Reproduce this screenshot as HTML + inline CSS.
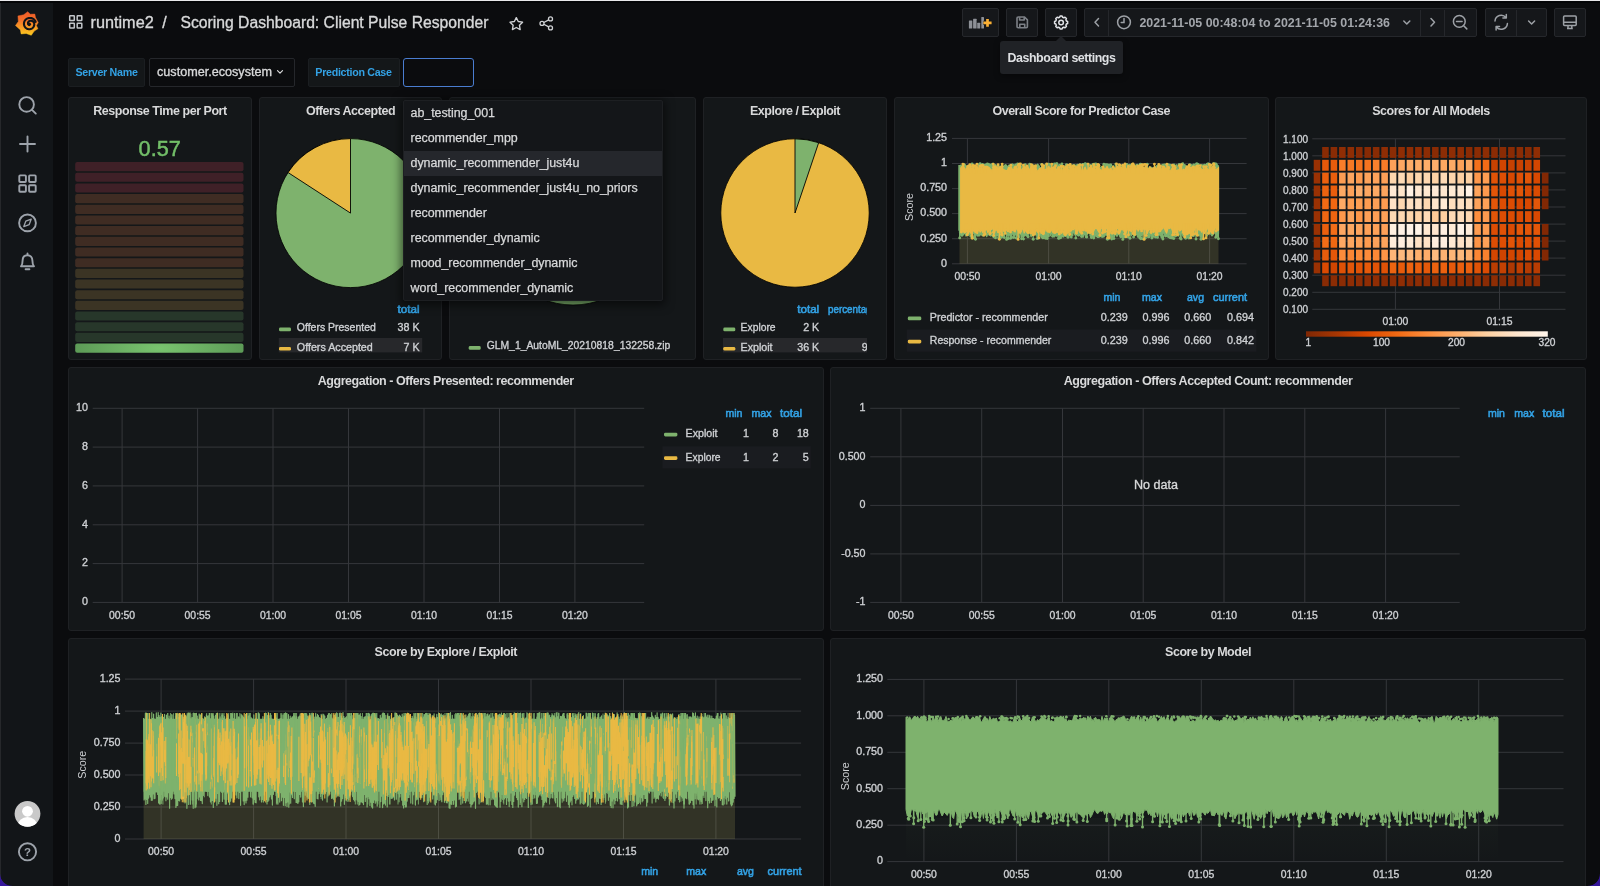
<!DOCTYPE html>
<html><head><meta charset="utf-8"><title>Scoring Dashboard: Client Pulse Responder - Grafana</title>
<style>
html,body{margin:0;padding:0;background:#0b0c0e;}
body{width:1600px;height:886px;overflow:hidden;position:relative;font-family:"Liberation Sans",Arial,sans-serif;color:#d8d9da;}
#app{will-change:transform;position:absolute;left:0;top:0;width:1600px;height:886px;overflow:hidden;background:#0b0c0e;}
.abs{position:absolute;}
.panel{position:absolute;box-sizing:border-box;background:#141719;border:1px solid #1f2124;border-radius:3px;}
.ptitle{position:absolute;left:0;right:0;top:4.5px;height:16px;line-height:16px;text-align:center;font-size:12.5px;font-weight:bold;letter-spacing:-0.46px;color:#d8d9da;white-space:nowrap;}
.side{position:absolute;left:0;top:0;width:53px;height:886px;background:#121518;border-left:1px solid #26282b;box-sizing:border-box;}
.btn{position:absolute;top:8.1px;height:28.7px;box-sizing:border-box;background:#15171a;border:1px solid #25272b;border-radius:2px;}
.lbl{position:absolute;top:58px;height:28.5px;line-height:27px;box-sizing:border-box;background:#141719;border:1px solid #1b1e21;border-radius:2px;color:#33a2e5;font-size:10.7px;font-weight:bold;letter-spacing:-0.3px;text-align:center;white-space:nowrap;}
.opt{position:absolute;left:0;width:258px;height:24.9px;line-height:25.9px;padding-left:6.4px;-webkit-text-stroke:0.25px #d8d9da;box-sizing:border-box;font-size:12.45px;color:#d8d9da;white-space:nowrap;letter-spacing:-0.05px;}
svg text{font-family:"Liberation Sans",Arial,sans-serif;}
svg{position:absolute;left:0;top:0;overflow:visible;}
</style></head><body><div id="app">

<div class="panel" style="left:68px;top:97px;width:184px;height:263px"><div class="ptitle">Response Time per Port</div></div>
<div class="panel" style="left:259px;top:97px;width:183px;height:263px"><div class="ptitle">Offers Accepted</div></div>
<div class="panel" style="left:449px;top:97px;width:247px;height:263px"><div class="ptitle"></div></div>
<div class="panel" style="left:703px;top:97px;width:184px;height:263px"><div class="ptitle">Explore / Exploit</div></div>
<div class="panel" style="left:894px;top:97px;width:374.5px;height:263px"><div class="ptitle">Overall Score for Predictor Case</div></div>
<div class="panel" style="left:1275px;top:97px;width:312px;height:263px"><div class="ptitle">Scores for All Models</div></div>
<div class="panel" style="left:68px;top:367px;width:755.5px;height:264px"><div class="ptitle">Aggregation - Offers Presented: recommender</div></div>
<div class="panel" style="left:830px;top:367px;width:756px;height:264px"><div class="ptitle">Aggregation - Offers Accepted Count: recommender</div></div>
<div class="panel" style="left:68px;top:638px;width:755.5px;height:262px"><div class="ptitle">Score by Explore / Exploit</div></div>
<div class="panel" style="left:830px;top:638px;width:756px;height:262px"><div class="ptitle">Score by Model</div></div>
<svg width="1600" height="886" viewBox="0 0 1600 886"><text x="159.7" y="156.3" text-anchor="middle" font-size="22.6" fill="#73bf69" textLength="42.2" lengthAdjust="spacingAndGlyphs" stroke="#73bf69" stroke-width="0.5">0.57</text>
<rect x="75.2" y="162.10" width="168.3" height="9.1" rx="2" fill="#3f2027"/>
<rect x="75.2" y="172.77" width="168.3" height="9.1" rx="2" fill="#3f2027"/>
<rect x="75.2" y="183.44" width="168.3" height="9.1" rx="2" fill="#3f2027"/>
<rect x="75.2" y="194.11" width="168.3" height="9.1" rx="2" fill="#3f2c23"/>
<rect x="75.2" y="204.78" width="168.3" height="9.1" rx="2" fill="#3f2c23"/>
<rect x="75.2" y="215.45" width="168.3" height="9.1" rx="2" fill="#3f2c23"/>
<rect x="75.2" y="226.12" width="168.3" height="9.1" rx="2" fill="#3f2c23"/>
<rect x="75.2" y="236.79" width="168.3" height="9.1" rx="2" fill="#3f2c23"/>
<rect x="75.2" y="247.46" width="168.3" height="9.1" rx="2" fill="#3f2c23"/>
<rect x="75.2" y="258.13" width="168.3" height="9.1" rx="2" fill="#3f2c23"/>
<rect x="75.2" y="268.80" width="168.3" height="9.1" rx="2" fill="#3b3424"/>
<rect x="75.2" y="279.47" width="168.3" height="9.1" rx="2" fill="#3b3424"/>
<rect x="75.2" y="290.14" width="168.3" height="9.1" rx="2" fill="#3b3424"/>
<rect x="75.2" y="300.81" width="168.3" height="9.1" rx="2" fill="#3b3424"/>
<rect x="75.2" y="311.48" width="168.3" height="9.1" rx="2" fill="#27372a"/>
<rect x="75.2" y="322.15" width="168.3" height="9.1" rx="2" fill="#27372a"/>
<rect x="75.2" y="332.82" width="168.3" height="9.1" rx="2" fill="#27372a"/>
<defs><radialGradient id="gg" cx="50%" cy="50%" r="50%" gradientTransform="translate(0.5 0.5) scale(1 6) translate(-0.5 -0.5)"><stop offset="0" stop-color="#79c46f"/><stop offset="1" stop-color="#5d9b57"/></radialGradient></defs>
<rect x="75.2" y="343.49" width="168.3" height="9.3" rx="2" fill="url(#gg)"/>
<circle cx="350.5" cy="213.1" r="74.5" fill="#7eb26d" stroke="#000" stroke-width="0.8"/><path d="M350.5,213.1 L350.5,138.6 A74.5,74.5 0 0 0 288.02,172.52 Z" fill="#e9b943" stroke="#000" stroke-width="0.9" stroke-linejoin="round"/>
<circle cx="573" cy="222.4" r="82.6" fill="#7eb26d" stroke="#000" stroke-width="0.8"/><path d="M573,222.4 L573,139.8 A82.6,82.6 0 0 1 573.00,139.80 Z" fill="#7eb26d" stroke="#000" stroke-width="0.9" stroke-linejoin="round"/>
<circle cx="795" cy="213" r="74.2" fill="#e9b943" stroke="#000" stroke-width="0.8"/><path d="M795,213 L795,138.8 A74.2,74.2 0 0 1 818.67,142.68 Z" fill="#7eb26d" stroke="#000" stroke-width="0.9" stroke-linejoin="round"/>
<text x="419.6" y="313.0" text-anchor="end" font-size="10.7" fill="#33a2e5" textLength="22" lengthAdjust="spacingAndGlyphs" stroke="#33a2e5" stroke-width="0.55">total</text>
<rect x="279.0" y="327.6" width="12" height="3.7" rx="1.4" fill="#7eb26d"/>
<text x="296.8" y="331.3" font-size="10.7" fill="#cfd1d4" textLength="79" lengthAdjust="spacingAndGlyphs" stroke="#cfd1d4" stroke-width="0.34">Offers Presented</text>
<text x="419.6" y="331.3" text-anchor="end" font-size="10.7" fill="#cfd1d4" stroke="#cfd1d4" stroke-width="0.34">38 K</text>
<rect x="278.8" y="338" width="143.4" height="14.4" fill="#27282b"/>
<rect x="279.0" y="346.9" width="12" height="3.7" rx="1.4" fill="#e9b943"/>
<text x="296.8" y="350.5" font-size="10.7" fill="#cfd1d4" textLength="76" lengthAdjust="spacingAndGlyphs" stroke="#cfd1d4" stroke-width="0.34">Offers Accepted</text>
<text x="419.6" y="350.5" text-anchor="end" font-size="10.7" fill="#cfd1d4" stroke="#cfd1d4" stroke-width="0.34">7 K</text>
<rect x="468.7" y="346.1" width="12" height="3.7" rx="1.4" fill="#7eb26d"/>
<text x="486.7" y="348.8" font-size="10.7" fill="#cfd1d4" textLength="183.6" lengthAdjust="spacingAndGlyphs" stroke="#cfd1d4" stroke-width="0.34">GLM_1_AutoML_20210818_132258.zip</text>
<clipPath id="c4"><rect x="700" y="300" width="167" height="60"/></clipPath>
<text x="819.2" y="313.0" text-anchor="end" font-size="10.7" fill="#33a2e5" textLength="22" lengthAdjust="spacingAndGlyphs" stroke="#33a2e5" stroke-width="0.55">total</text>
<g clip-path="url(#c4)"><text x="828.0" y="313.0" font-size="10.7" fill="#33a2e5" textLength="49" lengthAdjust="spacingAndGlyphs" stroke="#33a2e5" stroke-width="0.55">percentage</text></g>
<rect x="723.3" y="327.6" width="12" height="3.7" rx="1.4" fill="#7eb26d"/>
<text x="740.6" y="331.3" font-size="10.7" fill="#cfd1d4" textLength="35" lengthAdjust="spacingAndGlyphs" stroke="#cfd1d4" stroke-width="0.34">Explore</text>
<text x="819.2" y="331.3" text-anchor="end" font-size="10.7" fill="#cfd1d4" stroke="#cfd1d4" stroke-width="0.34">2 K</text>
<rect x="723" y="338" width="144" height="14.4" fill="#27282b"/>
<rect x="723.3" y="346.9" width="12" height="3.7" rx="1.4" fill="#e9b943"/>
<text x="740.6" y="350.5" font-size="10.7" fill="#cfd1d4" textLength="32" lengthAdjust="spacingAndGlyphs" stroke="#cfd1d4" stroke-width="0.34">Exploit</text>
<text x="819.2" y="350.5" text-anchor="end" font-size="10.7" fill="#cfd1d4" stroke="#cfd1d4" stroke-width="0.34">36 K</text>
<g clip-path="url(#c4)"><text x="867.8" y="350.5" text-anchor="end" font-size="10.7" fill="#cfd1d4" stroke="#cfd1d4" stroke-width="0.34">9</text></g>
<rect x="952.0" y="263.3" width="294.6" height="1" fill="#35373b"/>
<rect x="952.0" y="238.2" width="294.6" height="1" fill="#35373b"/>
<rect x="952.0" y="213.1" width="294.6" height="1" fill="#35373b"/>
<rect x="952.0" y="188.1" width="294.6" height="1" fill="#35373b"/>
<rect x="952.0" y="163.0" width="294.6" height="1" fill="#35373b"/>
<rect x="952.0" y="137.9" width="294.6" height="1" fill="#35373b"/>
<rect x="966.9" y="138.4" width="1" height="125.4" fill="#35373b"/>
<rect x="1048.1" y="138.4" width="1" height="125.4" fill="#35373b"/>
<rect x="1128.3" y="138.4" width="1" height="125.4" fill="#35373b"/>
<rect x="1209.1" y="138.4" width="1" height="125.4" fill="#35373b"/>
<text x="947.0" y="266.6" text-anchor="end" font-size="10.7" fill="#cfd1d4" stroke="#cfd1d4" stroke-width="0.34">0</text>
<text x="947.0" y="241.5" text-anchor="end" font-size="10.7" fill="#cfd1d4" stroke="#cfd1d4" stroke-width="0.34">0.250</text>
<text x="947.0" y="216.4" text-anchor="end" font-size="10.7" fill="#cfd1d4" stroke="#cfd1d4" stroke-width="0.34">0.500</text>
<text x="947.0" y="191.4" text-anchor="end" font-size="10.7" fill="#cfd1d4" stroke="#cfd1d4" stroke-width="0.34">0.750</text>
<text x="947.0" y="166.3" text-anchor="end" font-size="10.7" fill="#cfd1d4" stroke="#cfd1d4" stroke-width="0.34">1</text>
<text x="947.0" y="141.2" text-anchor="end" font-size="10.7" fill="#cfd1d4" stroke="#cfd1d4" stroke-width="0.34">1.25</text>
<text x="967.4" y="280.2" text-anchor="middle" font-size="10.7" fill="#cfd1d4" textLength="26" lengthAdjust="spacingAndGlyphs" stroke="#cfd1d4" stroke-width="0.34">00:50</text>
<text x="1048.6" y="280.2" text-anchor="middle" font-size="10.7" fill="#cfd1d4" textLength="26" lengthAdjust="spacingAndGlyphs" stroke="#cfd1d4" stroke-width="0.34">01:00</text>
<text x="1128.8" y="280.2" text-anchor="middle" font-size="10.7" fill="#cfd1d4" textLength="26" lengthAdjust="spacingAndGlyphs" stroke="#cfd1d4" stroke-width="0.34">01:10</text>
<text x="1209.6" y="280.2" text-anchor="middle" font-size="10.7" fill="#cfd1d4" textLength="26" lengthAdjust="spacingAndGlyphs" stroke="#cfd1d4" stroke-width="0.34">01:20</text>
<text transform="translate(913.3,207) rotate(-90)" text-anchor="middle" font-size="10.7" fill="#cfd1d4">Score</text>
<rect x="959.5" y="227.7" width="259.0" height="36.1" fill="#beb964" fill-opacity="0.18"/>
<polygon points="959.5,168.2 960.8,165.0 962.1,166.5 963.4,165.2 964.7,164.1 966.0,166.1 967.3,166.2 968.6,168.2 969.9,167.3 971.2,166.2 972.5,165.4 973.8,164.9 975.1,166.8 976.4,168.2 977.7,167.2 979.0,164.4 980.3,167.5 981.6,166.5 982.9,164.3 984.2,168.4 985.5,165.8 986.8,164.2 988.1,167.5 989.4,166.0 990.7,164.4 992.0,167.9 993.3,166.1 994.6,165.1 995.9,165.5 997.2,166.4 998.5,167.6 999.8,166.3 1001.1,166.8 1002.4,166.3 1003.8,166.8 1005.1,164.7 1006.4,165.0 1007.7,167.1 1009.0,165.9 1010.3,167.2 1011.6,166.5 1012.9,166.9 1014.2,165.5 1015.5,166.8 1016.8,166.4 1018.1,165.2 1019.4,166.6 1020.7,164.4 1022.0,167.7 1023.3,165.2 1024.6,166.6 1025.9,166.6 1027.2,165.6 1028.5,166.1 1029.8,166.6 1031.1,168.5 1032.4,168.1 1033.7,165.3 1035.0,166.1 1036.3,165.4 1037.6,164.2 1038.9,165.4 1040.2,168.3 1041.5,167.1 1042.8,165.8 1044.1,167.4 1045.4,164.1 1046.7,164.2 1048.0,164.7 1049.3,166.4 1050.6,164.7 1051.9,167.9 1053.2,167.1 1054.5,166.4 1055.8,165.1 1057.1,166.3 1058.4,167.9 1059.7,166.9 1061.0,167.0 1062.3,167.1 1063.6,167.7 1064.9,166.6 1066.2,166.5 1067.5,165.0 1068.8,164.9 1070.1,166.1 1071.4,166.4 1072.7,165.0 1074.0,164.5 1075.3,165.4 1076.6,164.9 1077.9,164.3 1079.2,168.3 1080.5,164.5 1081.8,167.2 1083.1,166.3 1084.4,164.9 1085.7,165.3 1087.0,167.8 1088.3,165.5 1089.7,168.2 1091.0,166.9 1092.3,164.8 1093.6,166.6 1094.9,165.8 1096.2,165.2 1097.5,164.8 1098.8,165.1 1100.1,168.5 1101.4,166.6 1102.7,166.4 1104.0,168.2 1105.3,166.1 1106.6,165.8 1107.9,164.8 1109.2,164.2 1110.5,167.9 1111.8,167.5 1113.1,165.5 1114.4,167.9 1115.7,167.5 1117.0,165.9 1118.3,167.7 1119.6,165.0 1120.9,164.6 1122.2,168.3 1123.5,166.1 1124.8,164.9 1126.1,164.1 1127.4,167.3 1128.7,167.7 1130.0,164.5 1131.3,164.4 1132.6,167.6 1133.9,166.5 1135.2,165.2 1136.5,164.7 1137.8,167.7 1139.1,165.5 1140.4,164.8 1141.7,166.0 1143.0,167.8 1144.3,168.3 1145.6,167.2 1146.9,164.8 1148.2,168.3 1149.5,168.5 1150.8,166.9 1152.1,168.2 1153.4,167.8 1154.7,168.4 1156.0,166.1 1157.3,165.4 1158.6,166.6 1159.9,167.9 1161.2,167.0 1162.5,165.8 1163.8,164.2 1165.1,164.0 1166.4,167.4 1167.7,168.4 1169.0,164.7 1170.3,164.3 1171.6,166.4 1172.9,165.0 1174.2,164.6 1175.6,165.7 1176.9,164.6 1178.2,168.4 1179.5,167.3 1180.8,167.2 1182.1,168.0 1183.4,164.4 1184.7,168.4 1186.0,165.5 1187.3,168.2 1188.6,166.9 1189.9,166.6 1191.2,167.7 1192.5,166.1 1193.8,166.1 1195.1,167.1 1196.4,165.2 1197.7,167.8 1199.0,167.6 1200.3,166.9 1201.6,166.8 1202.9,167.6 1204.2,164.3 1205.5,164.8 1206.8,168.0 1208.1,166.8 1209.4,167.4 1210.7,166.5 1212.0,167.2 1213.3,166.2 1214.6,164.3 1215.9,166.8 1217.2,165.6 1218.5,165.8 1218.5,233.5 1217.2,237.2 1215.9,233.6 1214.6,232.5 1213.3,234.3 1212.0,236.0 1210.7,233.9 1209.4,233.7 1208.1,234.0 1206.8,236.7 1205.5,232.3 1204.2,232.4 1202.9,235.3 1201.6,234.4 1200.3,237.3 1199.0,232.3 1197.7,233.2 1196.4,234.1 1195.1,233.5 1193.8,236.5 1192.5,235.9 1191.2,236.2 1189.9,234.3 1188.6,237.0 1187.3,232.8 1186.0,235.1 1184.7,235.2 1183.4,237.0 1182.1,233.9 1180.8,233.2 1179.5,234.2 1178.2,236.2 1176.9,233.3 1175.6,236.7 1174.2,233.1 1172.9,234.4 1171.6,236.0 1170.3,234.8 1169.0,234.2 1167.7,236.1 1166.4,233.0 1165.1,235.3 1163.8,232.8 1162.5,233.1 1161.2,237.0 1159.9,234.1 1158.6,235.9 1157.3,233.5 1156.0,234.6 1154.7,235.1 1153.4,232.8 1152.1,237.2 1150.8,234.6 1149.5,235.8 1148.2,237.3 1146.9,233.5 1145.6,234.5 1144.3,232.8 1143.0,234.3 1141.7,235.7 1140.4,232.3 1139.1,236.9 1137.8,237.2 1136.5,233.6 1135.2,235.5 1133.9,235.6 1132.6,232.9 1131.3,235.8 1130.0,232.8 1128.7,234.1 1127.4,235.8 1126.1,237.2 1124.8,236.2 1123.5,232.4 1122.2,235.4 1120.9,236.7 1119.6,235.9 1118.3,232.7 1117.0,236.6 1115.7,233.4 1114.4,236.8 1113.1,232.4 1111.8,234.7 1110.5,237.3 1109.2,232.6 1107.9,235.6 1106.6,233.6 1105.3,234.7 1104.0,237.0 1102.7,237.0 1101.4,236.7 1100.1,236.7 1098.8,237.2 1097.5,237.3 1096.2,232.5 1094.9,237.0 1093.6,234.8 1092.3,236.9 1091.0,236.4 1089.7,233.5 1088.3,232.5 1087.0,235.0 1085.7,237.5 1084.4,232.2 1083.1,237.3 1081.8,235.4 1080.5,234.7 1079.2,232.8 1077.9,233.1 1076.6,234.3 1075.3,235.4 1074.0,233.1 1072.7,232.9 1071.4,232.9 1070.1,233.7 1068.8,237.0 1067.5,235.9 1066.2,234.9 1064.9,234.8 1063.6,233.1 1062.3,236.3 1061.0,234.0 1059.7,235.5 1058.4,233.4 1057.1,236.5 1055.8,235.0 1054.5,237.0 1053.2,236.4 1051.9,232.5 1050.6,235.8 1049.3,232.8 1048.0,234.7 1046.7,237.3 1045.4,233.3 1044.1,237.2 1042.8,233.1 1041.5,237.5 1040.2,233.9 1038.9,236.6 1037.6,235.7 1036.3,232.5 1035.0,234.9 1033.7,234.0 1032.4,233.6 1031.1,236.9 1029.8,233.1 1028.5,232.7 1027.2,236.7 1025.9,234.6 1024.6,236.0 1023.3,233.6 1022.0,237.4 1020.7,234.8 1019.4,233.3 1018.1,233.6 1016.8,236.9 1015.5,233.1 1014.2,236.3 1012.9,233.2 1011.6,234.9 1010.3,236.7 1009.0,233.6 1007.7,233.2 1006.4,233.8 1005.1,232.4 1003.8,236.2 1002.4,236.3 1001.1,236.7 999.8,234.6 998.5,235.4 997.2,235.6 995.9,235.1 994.6,236.1 993.3,237.5 992.0,235.0 990.7,236.0 989.4,235.1 988.1,232.6 986.8,236.6 985.5,234.1 984.2,234.1 982.9,236.0 981.6,235.0 980.3,232.4 979.0,235.7 977.7,233.7 976.4,233.0 975.1,235.6 973.8,232.3 972.5,234.2 971.2,234.9 969.9,233.7 968.6,235.3 967.3,233.7 966.0,236.1 964.7,232.6 963.4,234.6 962.1,236.2 960.8,235.2 959.5,232.8" fill="#7eb26d" stroke="#7eb26d" stroke-width="1.2" stroke-linejoin="round"/>
<path d="M1168.5 173.5V164.6M1085.0 173.5V165.2M1050.6 173.5V166.0M1056.9 173.5V163.7M1213.6 173.5V163.8M988.6 173.5V164.7M1189.8 173.5V164.6M1181.6 173.5V164.4M1017.6 173.5V163.9M1050.0 173.5V164.9M1107.0 173.5V164.6M1167.3 173.5V165.5M1205.7 173.5V165.4M1216.4 173.5V164.8M1032.3 173.5V165.5M1009.3 173.5V165.9M1085.8 173.5V165.1M1103.9 173.5V164.3M1129.6 173.5V165.3M987.4 173.5V164.0M1126.9 173.5V164.4M1198.1 173.5V164.5M1196.5 173.5V163.9M1203.9 173.5V165.8M1198.4 173.5V165.6M1208.3 173.5V163.9M972.1 173.5V163.9M1196.7 173.5V165.8M1029.7 173.5V164.2M1042.6 173.5V166.0M1078.3 173.5V165.7M1206.9 173.5V165.7M1116.2 173.5V165.3M1050.8 173.5V165.1M1056.4 173.5V163.9M1193.9 173.5V165.0M1172.5 173.5V165.7M995.1 173.5V165.4M1023.9 173.5V166.0M1055.8 173.5V165.9M1015.6 173.5V165.0M1105.4 173.5V164.8M1017.4 173.5V165.4M1108.4 173.5V165.1M1201.9 173.5V165.7M1179.3 173.5V164.5M985.2 173.5V165.1M1013.1 173.5V165.6M1066.4 173.5V164.8M1126.8 173.5V165.5M1059.6 173.5V165.3M1024.7 173.5V165.7M1048.8 173.5V164.2M1012.3 173.5V165.3M1182.7 173.5V163.8M1140.1 173.5V165.1M1066.0 173.5V165.6M1140.9 173.5V164.4M1094.1 173.5V164.3M1095.8 173.5V164.0M1054.6 173.5V165.7M1085.9 173.5V164.2M1214.7 173.5V164.0M1162.7 173.5V165.3M1173.9 173.5V164.9M991.7 173.5V164.6M1090.1 173.5V165.4M1054.5 173.5V164.0M982.5 173.5V164.4M1061.9 173.5V164.0M978.7 173.5V164.9M1020.1 173.5V164.8M1166.4 173.5V165.5M1137.2 173.5V165.3M1140.4 173.5V164.3M980.1 173.5V163.8M1002.0 173.5V165.6M965.1 173.5V165.9M984.8 173.5V165.8M985.7 173.5V165.0M1208.2 173.5V164.2M1191.0 173.5V165.5M1012.4 173.5V164.9M1025.2 173.5V164.8M1208.4 173.5V164.1M1107.1 173.5V165.6M1054.9 173.5V166.0M1080.3 173.5V164.8M1030.0 173.5V165.2M1110.6 173.5V165.3M1147.3 173.5V164.2M1093.0 173.5V164.4M1172.1 173.5V165.8M988.8 173.5V164.7M1115.8 173.5V164.1M1215.8 173.5V163.9M998.1 173.5V166.0M1087.7 173.5V164.1M1122.7 173.5V165.9M1046.9 173.5V164.4M1209.3 173.5V164.6M1085.2 173.5V163.8M1083.5 173.5V164.5M1193.3 173.5V165.8M963.6 173.5V164.4M1184.5 173.5V165.4M992.9 173.5V164.1M1057.7 173.5V165.9M1086.0 173.5V165.2M1082.9 173.5V164.4M969.7 173.5V165.6M1041.6 173.5V164.5M1051.9 173.5V164.4M1207.2 173.5V164.3M1197.0 173.5V164.0M1110.8 173.5V165.0M1201.2 173.5V165.7M1183.2 173.5V165.4M1056.8 173.5V165.1M989.8 173.5V165.9" fill="none" stroke="#7eb26d" stroke-width="1.3"/><g fill="#7eb26d"><circle cx="1168.5" cy="164.6" r="1.45"/><circle cx="1085.0" cy="165.2" r="1.45"/><circle cx="1050.6" cy="166.0" r="1.45"/><circle cx="1056.9" cy="163.7" r="1.45"/><circle cx="1213.6" cy="163.8" r="1.45"/><circle cx="988.6" cy="164.7" r="1.45"/><circle cx="1189.8" cy="164.6" r="1.45"/><circle cx="1181.6" cy="164.4" r="1.45"/><circle cx="1017.6" cy="163.9" r="1.45"/><circle cx="1050.0" cy="164.9" r="1.45"/><circle cx="1107.0" cy="164.6" r="1.45"/><circle cx="1167.3" cy="165.5" r="1.45"/><circle cx="1205.7" cy="165.4" r="1.45"/><circle cx="1216.4" cy="164.8" r="1.45"/><circle cx="1032.3" cy="165.5" r="1.45"/><circle cx="1009.3" cy="165.9" r="1.45"/><circle cx="1085.8" cy="165.1" r="1.45"/><circle cx="1103.9" cy="164.3" r="1.45"/><circle cx="1129.6" cy="165.3" r="1.45"/><circle cx="987.4" cy="164.0" r="1.45"/><circle cx="1126.9" cy="164.4" r="1.45"/><circle cx="1198.1" cy="164.5" r="1.45"/><circle cx="1196.5" cy="163.9" r="1.45"/><circle cx="1203.9" cy="165.8" r="1.45"/><circle cx="1198.4" cy="165.6" r="1.45"/><circle cx="1208.3" cy="163.9" r="1.45"/><circle cx="972.1" cy="163.9" r="1.45"/><circle cx="1196.7" cy="165.8" r="1.45"/><circle cx="1029.7" cy="164.2" r="1.45"/><circle cx="1042.6" cy="166.0" r="1.45"/><circle cx="1078.3" cy="165.7" r="1.45"/><circle cx="1206.9" cy="165.7" r="1.45"/><circle cx="1116.2" cy="165.3" r="1.45"/><circle cx="1050.8" cy="165.1" r="1.45"/><circle cx="1056.4" cy="163.9" r="1.45"/><circle cx="1193.9" cy="165.0" r="1.45"/><circle cx="1172.5" cy="165.7" r="1.45"/><circle cx="995.1" cy="165.4" r="1.45"/><circle cx="1023.9" cy="166.0" r="1.45"/><circle cx="1055.8" cy="165.9" r="1.45"/><circle cx="1015.6" cy="165.0" r="1.45"/><circle cx="1105.4" cy="164.8" r="1.45"/><circle cx="1017.4" cy="165.4" r="1.45"/><circle cx="1108.4" cy="165.1" r="1.45"/><circle cx="1201.9" cy="165.7" r="1.45"/><circle cx="1179.3" cy="164.5" r="1.45"/><circle cx="985.2" cy="165.1" r="1.45"/><circle cx="1013.1" cy="165.6" r="1.45"/><circle cx="1066.4" cy="164.8" r="1.45"/><circle cx="1126.8" cy="165.5" r="1.45"/><circle cx="1059.6" cy="165.3" r="1.45"/><circle cx="1024.7" cy="165.7" r="1.45"/><circle cx="1048.8" cy="164.2" r="1.45"/><circle cx="1012.3" cy="165.3" r="1.45"/><circle cx="1182.7" cy="163.8" r="1.45"/><circle cx="1140.1" cy="165.1" r="1.45"/><circle cx="1066.0" cy="165.6" r="1.45"/><circle cx="1140.9" cy="164.4" r="1.45"/><circle cx="1094.1" cy="164.3" r="1.45"/><circle cx="1095.8" cy="164.0" r="1.45"/><circle cx="1054.6" cy="165.7" r="1.45"/><circle cx="1085.9" cy="164.2" r="1.45"/><circle cx="1214.7" cy="164.0" r="1.45"/><circle cx="1162.7" cy="165.3" r="1.45"/><circle cx="1173.9" cy="164.9" r="1.45"/><circle cx="991.7" cy="164.6" r="1.45"/><circle cx="1090.1" cy="165.4" r="1.45"/><circle cx="1054.5" cy="164.0" r="1.45"/><circle cx="982.5" cy="164.4" r="1.45"/><circle cx="1061.9" cy="164.0" r="1.45"/><circle cx="978.7" cy="164.9" r="1.45"/><circle cx="1020.1" cy="164.8" r="1.45"/><circle cx="1166.4" cy="165.5" r="1.45"/><circle cx="1137.2" cy="165.3" r="1.45"/><circle cx="1140.4" cy="164.3" r="1.45"/><circle cx="980.1" cy="163.8" r="1.45"/><circle cx="1002.0" cy="165.6" r="1.45"/><circle cx="965.1" cy="165.9" r="1.45"/><circle cx="984.8" cy="165.8" r="1.45"/><circle cx="985.7" cy="165.0" r="1.45"/><circle cx="1208.2" cy="164.2" r="1.45"/><circle cx="1191.0" cy="165.5" r="1.45"/><circle cx="1012.4" cy="164.9" r="1.45"/><circle cx="1025.2" cy="164.8" r="1.45"/><circle cx="1208.4" cy="164.1" r="1.45"/><circle cx="1107.1" cy="165.6" r="1.45"/><circle cx="1054.9" cy="166.0" r="1.45"/><circle cx="1080.3" cy="164.8" r="1.45"/><circle cx="1030.0" cy="165.2" r="1.45"/><circle cx="1110.6" cy="165.3" r="1.45"/><circle cx="1147.3" cy="164.2" r="1.45"/><circle cx="1093.0" cy="164.4" r="1.45"/><circle cx="1172.1" cy="165.8" r="1.45"/><circle cx="988.8" cy="164.7" r="1.45"/><circle cx="1115.8" cy="164.1" r="1.45"/><circle cx="1215.8" cy="163.9" r="1.45"/><circle cx="998.1" cy="166.0" r="1.45"/><circle cx="1087.7" cy="164.1" r="1.45"/><circle cx="1122.7" cy="165.9" r="1.45"/><circle cx="1046.9" cy="164.4" r="1.45"/><circle cx="1209.3" cy="164.6" r="1.45"/><circle cx="1085.2" cy="163.8" r="1.45"/><circle cx="1083.5" cy="164.5" r="1.45"/><circle cx="1193.3" cy="165.8" r="1.45"/><circle cx="963.6" cy="164.4" r="1.45"/><circle cx="1184.5" cy="165.4" r="1.45"/><circle cx="992.9" cy="164.1" r="1.45"/><circle cx="1057.7" cy="165.9" r="1.45"/><circle cx="1086.0" cy="165.2" r="1.45"/><circle cx="1082.9" cy="164.4" r="1.45"/><circle cx="969.7" cy="165.6" r="1.45"/><circle cx="1041.6" cy="164.5" r="1.45"/><circle cx="1051.9" cy="164.4" r="1.45"/><circle cx="1207.2" cy="164.3" r="1.45"/><circle cx="1197.0" cy="164.0" r="1.45"/><circle cx="1110.8" cy="165.0" r="1.45"/><circle cx="1201.2" cy="165.7" r="1.45"/><circle cx="1183.2" cy="165.4" r="1.45"/><circle cx="1056.8" cy="165.1" r="1.45"/><circle cx="989.8" cy="165.9" r="1.45"/></g>
<path d="M1143.0 223.7V238.9M975.8 223.7V234.1M974.4 223.7V237.3M1201.0 223.7V239.2M1168.3 223.7V235.9M1025.2 223.7V234.1M1048.0 223.7V235.0M1173.4 223.7V233.8M1119.9 223.7V234.1M1028.1 223.7V236.8M1075.8 223.7V238.1M1181.1 223.7V239.0M959.7 223.7V237.9M1216.5 223.7V235.8M1106.1 223.7V234.2M1006.6 223.7V239.4M1166.7 223.7V234.7M979.2 223.7V235.1M1065.7 223.7V235.5M1107.9 223.7V238.7M1023.5 223.7V239.1M1188.8 223.7V235.2M1140.0 223.7V235.8M1001.4 223.7V237.3M999.0 223.7V237.4M975.5 223.7V239.2M1107.5 223.7V233.7M1008.0 223.7V234.6M1100.1 223.7V233.9M1171.7 223.7V234.7M1187.2 223.7V236.8M989.6 223.7V234.6M1045.5 223.7V238.3M1067.6 223.7V235.6M1058.8 223.7V238.1M1068.0 223.7V237.2M1078.6 223.7V234.4M1155.4 223.7V237.0M1038.6 223.7V234.3M1048.4 223.7V236.0M1060.6 223.7V237.7M998.7 223.7V237.9M1122.8 223.7V239.4M1063.2 223.7V236.2M1196.8 223.7V234.6M1172.2 223.7V238.1M1019.1 223.7V236.7M1022.3 223.7V233.8M1162.1 223.7V237.2M1104.5 223.7V234.1M962.1 223.7V234.7M1122.6 223.7V236.6M1061.8 223.7V235.8M1162.9 223.7V239.0M1152.9 223.7V236.5M1198.4 223.7V235.1M1140.6 223.7V238.1M1196.0 223.7V239.1M1033.2 223.7V239.3M1047.2 223.7V238.5M974.8 223.7V238.1M1184.0 223.7V234.8M999.4 223.7V236.8M1102.3 223.7V236.4M1091.4 223.7V237.6M1170.3 223.7V237.7M1060.0 223.7V236.3M996.5 223.7V235.2M1058.7 223.7V238.4M971.9 223.7V236.9M1037.6 223.7V235.7M1122.7 223.7V233.9M974.3 223.7V237.9M1215.8 223.7V237.2M1098.4 223.7V236.2M1037.2 223.7V238.6M1175.5 223.7V235.9M995.1 223.7V233.9M1042.9 223.7V237.9M1202.2 223.7V236.7M1021.6 223.7V238.7M1149.3 223.7V236.5M980.5 223.7V233.9M1097.4 223.7V236.3M1130.0 223.7V238.2M1013.8 223.7V237.6M1044.4 223.7V235.8M1102.1 223.7V234.5M1112.3 223.7V236.8M999.4 223.7V236.6M1065.9 223.7V234.8M1218.4 223.7V238.8M1043.0 223.7V234.0M1162.9 223.7V236.8M1011.7 223.7V237.5M1078.9 223.7V235.0M1093.7 223.7V238.0M1113.9 223.7V238.6M1145.4 223.7V237.9M1165.6 223.7V235.6M1140.8 223.7V238.8M1168.6 223.7V236.8M1189.0 223.7V238.1M1044.0 223.7V236.3M1173.8 223.7V238.6M1094.2 223.7V235.0M1026.7 223.7V234.1M1004.3 223.7V237.6M1157.5 223.7V237.4M1124.4 223.7V236.0M977.8 223.7V235.2M1111.7 223.7V239.1M971.0 223.7V235.6M1060.8 223.7V234.8M1107.4 223.7V234.9M1127.9 223.7V236.9M1000.4 223.7V234.7M971.1 223.7V236.3M1108.7 223.7V238.4M1171.6 223.7V237.8M1165.8 223.7V236.0M1052.7 223.7V236.3M1108.9 223.7V234.8M1145.6 223.7V235.3M1185.7 223.7V238.2M1086.8 223.7V237.1M1186.3 223.7V235.0M1041.8 223.7V236.8M1016.3 223.7V238.1M1035.7 223.7V234.1M1148.5 223.7V236.9M1188.8 223.7V237.7M1081.5 223.7V236.5M1139.7 223.7V237.7M995.5 223.7V237.9M1090.9 223.7V235.6M1072.1 223.7V234.9M1071.3 223.7V237.1M1008.2 223.7V238.5M1120.8 223.7V236.7M1133.6 223.7V237.1M1124.3 223.7V236.9M1151.9 223.7V238.1M1078.2 223.7V235.0M1180.3 223.7V238.3M1107.4 223.7V239.2M1187.9 223.7V235.4M1065.7 223.7V235.2M1140.8 223.7V238.1M1010.5 223.7V238.4" fill="none" stroke="#7eb26d" stroke-width="1.3"/><g fill="#7eb26d"><circle cx="1143.0" cy="238.9" r="1.45"/><circle cx="975.8" cy="234.1" r="1.45"/><circle cx="974.4" cy="237.3" r="1.45"/><circle cx="1201.0" cy="239.2" r="1.45"/><circle cx="1168.3" cy="235.9" r="1.45"/><circle cx="1025.2" cy="234.1" r="1.45"/><circle cx="1048.0" cy="235.0" r="1.45"/><circle cx="1173.4" cy="233.8" r="1.45"/><circle cx="1119.9" cy="234.1" r="1.45"/><circle cx="1028.1" cy="236.8" r="1.45"/><circle cx="1075.8" cy="238.1" r="1.45"/><circle cx="1181.1" cy="239.0" r="1.45"/><circle cx="959.7" cy="237.9" r="1.45"/><circle cx="1216.5" cy="235.8" r="1.45"/><circle cx="1106.1" cy="234.2" r="1.45"/><circle cx="1006.6" cy="239.4" r="1.45"/><circle cx="1166.7" cy="234.7" r="1.45"/><circle cx="979.2" cy="235.1" r="1.45"/><circle cx="1065.7" cy="235.5" r="1.45"/><circle cx="1107.9" cy="238.7" r="1.45"/><circle cx="1023.5" cy="239.1" r="1.45"/><circle cx="1188.8" cy="235.2" r="1.45"/><circle cx="1140.0" cy="235.8" r="1.45"/><circle cx="1001.4" cy="237.3" r="1.45"/><circle cx="999.0" cy="237.4" r="1.45"/><circle cx="975.5" cy="239.2" r="1.45"/><circle cx="1107.5" cy="233.7" r="1.45"/><circle cx="1008.0" cy="234.6" r="1.45"/><circle cx="1100.1" cy="233.9" r="1.45"/><circle cx="1171.7" cy="234.7" r="1.45"/><circle cx="1187.2" cy="236.8" r="1.45"/><circle cx="989.6" cy="234.6" r="1.45"/><circle cx="1045.5" cy="238.3" r="1.45"/><circle cx="1067.6" cy="235.6" r="1.45"/><circle cx="1058.8" cy="238.1" r="1.45"/><circle cx="1068.0" cy="237.2" r="1.45"/><circle cx="1078.6" cy="234.4" r="1.45"/><circle cx="1155.4" cy="237.0" r="1.45"/><circle cx="1038.6" cy="234.3" r="1.45"/><circle cx="1048.4" cy="236.0" r="1.45"/><circle cx="1060.6" cy="237.7" r="1.45"/><circle cx="998.7" cy="237.9" r="1.45"/><circle cx="1122.8" cy="239.4" r="1.45"/><circle cx="1063.2" cy="236.2" r="1.45"/><circle cx="1196.8" cy="234.6" r="1.45"/><circle cx="1172.2" cy="238.1" r="1.45"/><circle cx="1019.1" cy="236.7" r="1.45"/><circle cx="1022.3" cy="233.8" r="1.45"/><circle cx="1162.1" cy="237.2" r="1.45"/><circle cx="1104.5" cy="234.1" r="1.45"/><circle cx="962.1" cy="234.7" r="1.45"/><circle cx="1122.6" cy="236.6" r="1.45"/><circle cx="1061.8" cy="235.8" r="1.45"/><circle cx="1162.9" cy="239.0" r="1.45"/><circle cx="1152.9" cy="236.5" r="1.45"/><circle cx="1198.4" cy="235.1" r="1.45"/><circle cx="1140.6" cy="238.1" r="1.45"/><circle cx="1196.0" cy="239.1" r="1.45"/><circle cx="1033.2" cy="239.3" r="1.45"/><circle cx="1047.2" cy="238.5" r="1.45"/><circle cx="974.8" cy="238.1" r="1.45"/><circle cx="1184.0" cy="234.8" r="1.45"/><circle cx="999.4" cy="236.8" r="1.45"/><circle cx="1102.3" cy="236.4" r="1.45"/><circle cx="1091.4" cy="237.6" r="1.45"/><circle cx="1170.3" cy="237.7" r="1.45"/><circle cx="1060.0" cy="236.3" r="1.45"/><circle cx="996.5" cy="235.2" r="1.45"/><circle cx="1058.7" cy="238.4" r="1.45"/><circle cx="971.9" cy="236.9" r="1.45"/><circle cx="1037.6" cy="235.7" r="1.45"/><circle cx="1122.7" cy="233.9" r="1.45"/><circle cx="974.3" cy="237.9" r="1.45"/><circle cx="1215.8" cy="237.2" r="1.45"/><circle cx="1098.4" cy="236.2" r="1.45"/><circle cx="1037.2" cy="238.6" r="1.45"/><circle cx="1175.5" cy="235.9" r="1.45"/><circle cx="995.1" cy="233.9" r="1.45"/><circle cx="1042.9" cy="237.9" r="1.45"/><circle cx="1202.2" cy="236.7" r="1.45"/><circle cx="1021.6" cy="238.7" r="1.45"/><circle cx="1149.3" cy="236.5" r="1.45"/><circle cx="980.5" cy="233.9" r="1.45"/><circle cx="1097.4" cy="236.3" r="1.45"/><circle cx="1130.0" cy="238.2" r="1.45"/><circle cx="1013.8" cy="237.6" r="1.45"/><circle cx="1044.4" cy="235.8" r="1.45"/><circle cx="1102.1" cy="234.5" r="1.45"/><circle cx="1112.3" cy="236.8" r="1.45"/><circle cx="999.4" cy="236.6" r="1.45"/><circle cx="1065.9" cy="234.8" r="1.45"/><circle cx="1218.4" cy="238.8" r="1.45"/><circle cx="1043.0" cy="234.0" r="1.45"/><circle cx="1162.9" cy="236.8" r="1.45"/><circle cx="1011.7" cy="237.5" r="1.45"/><circle cx="1078.9" cy="235.0" r="1.45"/><circle cx="1093.7" cy="238.0" r="1.45"/><circle cx="1113.9" cy="238.6" r="1.45"/><circle cx="1145.4" cy="237.9" r="1.45"/><circle cx="1165.6" cy="235.6" r="1.45"/><circle cx="1140.8" cy="238.8" r="1.45"/><circle cx="1168.6" cy="236.8" r="1.45"/><circle cx="1189.0" cy="238.1" r="1.45"/><circle cx="1044.0" cy="236.3" r="1.45"/><circle cx="1173.8" cy="238.6" r="1.45"/><circle cx="1094.2" cy="235.0" r="1.45"/><circle cx="1026.7" cy="234.1" r="1.45"/><circle cx="1004.3" cy="237.6" r="1.45"/><circle cx="1157.5" cy="237.4" r="1.45"/><circle cx="1124.4" cy="236.0" r="1.45"/><circle cx="977.8" cy="235.2" r="1.45"/><circle cx="1111.7" cy="239.1" r="1.45"/><circle cx="971.0" cy="235.6" r="1.45"/><circle cx="1060.8" cy="234.8" r="1.45"/><circle cx="1107.4" cy="234.9" r="1.45"/><circle cx="1127.9" cy="236.9" r="1.45"/><circle cx="1000.4" cy="234.7" r="1.45"/><circle cx="971.1" cy="236.3" r="1.45"/><circle cx="1108.7" cy="238.4" r="1.45"/><circle cx="1171.6" cy="237.8" r="1.45"/><circle cx="1165.8" cy="236.0" r="1.45"/><circle cx="1052.7" cy="236.3" r="1.45"/><circle cx="1108.9" cy="234.8" r="1.45"/><circle cx="1145.6" cy="235.3" r="1.45"/><circle cx="1185.7" cy="238.2" r="1.45"/><circle cx="1086.8" cy="237.1" r="1.45"/><circle cx="1186.3" cy="235.0" r="1.45"/><circle cx="1041.8" cy="236.8" r="1.45"/><circle cx="1016.3" cy="238.1" r="1.45"/><circle cx="1035.7" cy="234.1" r="1.45"/><circle cx="1148.5" cy="236.9" r="1.45"/><circle cx="1188.8" cy="237.7" r="1.45"/><circle cx="1081.5" cy="236.5" r="1.45"/><circle cx="1139.7" cy="237.7" r="1.45"/><circle cx="995.5" cy="237.9" r="1.45"/><circle cx="1090.9" cy="235.6" r="1.45"/><circle cx="1072.1" cy="234.9" r="1.45"/><circle cx="1071.3" cy="237.1" r="1.45"/><circle cx="1008.2" cy="238.5" r="1.45"/><circle cx="1120.8" cy="236.7" r="1.45"/><circle cx="1133.6" cy="237.1" r="1.45"/><circle cx="1124.3" cy="236.9" r="1.45"/><circle cx="1151.9" cy="238.1" r="1.45"/><circle cx="1078.2" cy="235.0" r="1.45"/><circle cx="1180.3" cy="238.3" r="1.45"/><circle cx="1107.4" cy="239.2" r="1.45"/><circle cx="1187.9" cy="235.4" r="1.45"/><circle cx="1065.7" cy="235.2" r="1.45"/><circle cx="1140.8" cy="238.1" r="1.45"/><circle cx="1010.5" cy="238.4" r="1.45"/></g>
<rect x="958.3" y="165.0" width="3" height="65.7" fill="#7eb26d"/>
<polygon points="960.7,168.1 962.0,166.4 963.3,169.7 964.6,168.3 965.9,169.7 967.2,167.3 968.5,168.7 969.8,169.1 971.1,167.7 972.4,168.3 973.7,170.0 975.0,168.9 976.2,166.2 977.5,167.0 978.8,168.4 980.1,167.7 981.4,170.3 982.7,168.9 984.0,166.5 985.3,170.1 986.6,166.1 987.9,166.7 989.2,167.6 990.5,169.1 991.8,170.5 993.1,169.5 994.4,167.3 995.7,168.9 997.0,167.0 998.3,169.9 999.6,166.9 1000.9,166.7 1002.2,167.4 1003.5,170.0 1004.7,169.9 1006.0,170.7 1007.3,170.7 1008.6,167.3 1009.9,168.5 1011.2,167.2 1012.5,169.6 1013.8,169.3 1015.1,166.5 1016.4,166.0 1017.7,170.5 1019.0,167.1 1020.3,168.2 1021.6,171.0 1022.9,167.9 1024.2,169.6 1025.5,169.2 1026.8,166.1 1028.1,167.3 1029.4,170.7 1030.7,167.6 1032.0,170.9 1033.2,166.6 1034.5,168.0 1035.8,167.8 1037.1,170.9 1038.4,170.6 1039.7,168.4 1041.0,169.1 1042.3,166.9 1043.6,169.6 1044.9,169.0 1046.2,170.4 1047.5,168.5 1048.8,166.2 1050.1,169.7 1051.4,167.0 1052.7,170.2 1054.0,166.6 1055.3,168.4 1056.6,170.4 1057.9,167.1 1059.2,166.6 1060.5,170.3 1061.7,170.4 1063.0,169.7 1064.3,168.4 1065.6,166.2 1066.9,166.7 1068.2,169.4 1069.5,170.8 1070.8,168.0 1072.1,168.1 1073.4,169.8 1074.7,168.0 1076.0,166.1 1077.3,170.3 1078.6,169.4 1079.9,166.8 1081.2,170.2 1082.5,170.4 1083.8,170.1 1085.1,167.1 1086.4,170.4 1087.7,170.5 1089.0,167.9 1090.2,167.2 1091.5,167.2 1092.8,168.8 1094.1,166.4 1095.4,170.2 1096.7,168.8 1098.0,169.2 1099.3,168.3 1100.6,170.0 1101.9,170.3 1103.2,166.1 1104.5,169.5 1105.8,168.5 1107.1,166.4 1108.4,169.5 1109.7,169.2 1111.0,168.2 1112.3,170.7 1113.6,170.9 1114.9,167.8 1116.2,169.1 1117.5,170.6 1118.7,169.6 1120.0,167.5 1121.3,167.2 1122.6,168.5 1123.9,169.9 1125.2,166.8 1126.5,170.0 1127.8,167.2 1129.1,170.2 1130.4,166.3 1131.7,167.1 1133.0,168.5 1134.3,168.8 1135.6,168.1 1136.9,167.7 1138.2,168.2 1139.5,167.5 1140.8,170.6 1142.1,168.9 1143.4,167.2 1144.7,168.8 1146.0,166.1 1147.2,168.3 1148.5,169.4 1149.8,166.5 1151.1,168.9 1152.4,168.3 1153.7,167.8 1155.0,166.7 1156.3,170.0 1157.6,166.6 1158.9,168.1 1160.2,169.2 1161.5,169.3 1162.8,166.1 1164.1,166.3 1165.4,168.3 1166.7,169.3 1168.0,166.1 1169.3,170.9 1170.6,170.8 1171.9,168.6 1173.2,168.1 1174.5,171.0 1175.7,170.1 1177.0,170.6 1178.3,169.8 1179.6,170.1 1180.9,170.4 1182.2,170.4 1183.5,169.1 1184.8,170.4 1186.1,167.1 1187.4,169.0 1188.7,170.4 1190.0,167.7 1191.3,167.1 1192.6,169.2 1193.9,171.0 1195.2,167.7 1196.5,167.2 1197.8,166.5 1199.1,167.4 1200.4,168.0 1201.7,169.3 1203.0,169.8 1204.2,170.7 1205.5,166.9 1206.8,168.2 1208.1,169.6 1209.4,170.4 1210.7,169.6 1212.0,167.2 1213.3,169.9 1214.6,170.7 1215.9,169.1 1217.2,169.3 1218.5,167.5 1218.5,230.1 1217.2,230.6 1215.9,227.3 1214.6,228.2 1213.3,232.9 1212.0,232.1 1210.7,231.0 1209.4,233.2 1208.1,228.8 1206.8,228.7 1205.5,231.8 1204.2,227.8 1203.0,230.1 1201.7,232.2 1200.4,229.7 1199.1,229.3 1197.8,229.0 1196.5,227.4 1195.2,227.7 1193.9,231.0 1192.6,230.9 1191.3,233.6 1190.0,231.0 1188.7,232.5 1187.4,232.9 1186.1,228.4 1184.8,233.6 1183.5,232.9 1182.2,229.4 1180.9,230.0 1179.6,230.9 1178.3,228.4 1177.0,232.2 1175.7,232.4 1174.5,230.4 1173.2,233.0 1171.9,229.2 1170.6,227.6 1169.3,228.4 1168.0,228.0 1166.7,233.2 1165.4,230.9 1164.1,227.8 1162.8,228.2 1161.5,229.8 1160.2,229.4 1158.9,232.0 1157.6,232.0 1156.3,233.3 1155.0,227.8 1153.7,231.8 1152.4,227.2 1151.1,233.7 1149.8,228.5 1148.5,230.3 1147.2,233.4 1146.0,229.4 1144.7,229.1 1143.4,229.1 1142.1,229.2 1140.8,229.3 1139.5,228.7 1138.2,231.2 1136.9,227.5 1135.6,230.6 1134.3,232.0 1133.0,227.2 1131.7,231.9 1130.4,230.8 1129.1,229.2 1127.8,228.5 1126.5,231.6 1125.2,233.5 1123.9,229.9 1122.6,229.8 1121.3,228.9 1120.0,232.0 1118.7,228.4 1117.5,228.7 1116.2,228.1 1114.9,228.8 1113.6,229.3 1112.3,230.1 1111.0,228.1 1109.7,232.2 1108.4,229.4 1107.1,228.5 1105.8,228.7 1104.5,232.9 1103.2,231.7 1101.9,227.6 1100.6,228.7 1099.3,232.7 1098.0,230.6 1096.7,228.4 1095.4,228.1 1094.1,230.3 1092.8,233.0 1091.5,232.3 1090.2,233.5 1089.0,232.6 1087.7,233.3 1086.4,229.1 1085.1,229.1 1083.8,230.8 1082.5,228.0 1081.2,232.8 1079.9,232.4 1078.6,229.7 1077.3,230.3 1076.0,232.9 1074.7,227.8 1073.4,229.6 1072.1,229.7 1070.8,231.3 1069.5,229.8 1068.2,233.2 1066.9,231.7 1065.6,229.6 1064.3,229.8 1063.0,230.3 1061.7,233.4 1060.5,231.6 1059.2,227.3 1057.9,227.6 1056.6,228.4 1055.3,233.3 1054.0,233.2 1052.7,232.3 1051.4,228.3 1050.1,232.4 1048.8,232.2 1047.5,232.0 1046.2,228.9 1044.9,230.3 1043.6,228.1 1042.3,233.2 1041.0,233.4 1039.7,228.2 1038.4,233.0 1037.1,229.0 1035.8,229.8 1034.5,232.4 1033.2,232.0 1032.0,228.9 1030.7,233.6 1029.4,227.5 1028.1,233.4 1026.8,232.6 1025.5,229.5 1024.2,233.0 1022.9,227.2 1021.6,230.9 1020.3,233.3 1019.0,232.6 1017.7,230.2 1016.4,228.0 1015.1,232.0 1013.8,231.1 1012.5,230.0 1011.2,229.5 1009.9,229.0 1008.6,231.6 1007.3,231.3 1006.0,228.0 1004.7,227.8 1003.5,231.0 1002.2,227.2 1000.9,232.6 999.6,228.3 998.3,227.8 997.0,230.0 995.7,229.2 994.4,233.3 993.1,228.2 991.8,229.2 990.5,229.9 989.2,229.9 987.9,232.7 986.6,228.2 985.3,230.3 984.0,229.7 982.7,232.6 981.4,229.6 980.1,232.1 978.8,228.7 977.5,233.5 976.2,232.9 975.0,232.3 973.7,231.1 972.4,228.0 971.1,233.7 969.8,230.1 968.5,233.5 967.2,231.2 965.9,231.8 964.6,232.6 963.3,230.6 962.0,231.5 960.7,232.0" fill="#e9b943" stroke="#e9b943" stroke-width="1.2" stroke-linejoin="round"/>
<path d="M1117.3 173.5V167.4M1023.4 173.5V165.1M1209.3 173.5V164.5M1024.7 173.5V167.4M1213.6 173.5V164.0M1002.2 173.5V164.1M1203.7 173.5V166.7M977.0 173.5V164.1M962.9 173.5V164.1M985.9 173.5V167.5M1141.7 173.5V164.9M1020.4 173.5V164.0M1031.4 173.5V164.6M1133.0 173.5V167.4M968.5 173.5V166.3M1099.0 173.5V165.7M1063.3 173.5V166.5M1002.2 173.5V166.4M1193.9 173.5V167.6M1053.1 173.5V168.0M1035.4 173.5V166.7M1138.4 173.5V166.3M1179.6 173.5V165.6M1019.3 173.5V164.1M993.5 173.5V167.6M1206.3 173.5V166.6M1070.2 173.5V164.4M1097.7 173.5V164.6M1077.7 173.5V167.5M1172.5 173.5V165.2M1070.6 173.5V167.6M1154.4 173.5V164.1M1094.6 173.5V166.9M981.4 173.5V165.5M1091.1 173.5V166.1M1179.6 173.5V165.9M1096.7 173.5V167.1M1061.4 173.5V166.5M967.6 173.5V166.8M1140.2 173.5V165.5M1061.3 173.5V166.3M1043.6 173.5V165.6M1055.5 173.5V165.8M1067.7 173.5V165.3M1046.8 173.5V164.0M1035.5 173.5V165.8M1078.7 173.5V165.7M972.9 173.5V165.5M1018.7 173.5V165.7M1072.9 173.5V166.3M1187.1 173.5V167.0M1070.4 173.5V165.8M1103.0 173.5V167.0M1189.3 173.5V165.3M1166.9 173.5V164.3M1143.0 173.5V164.7M1119.3 173.5V164.8M1113.2 173.5V167.1M1009.7 173.5V167.9M995.5 173.5V167.2M975.2 173.5V165.6M985.0 173.5V167.5M1118.1 173.5V167.6M1116.5 173.5V163.9M970.5 173.5V166.5M1175.2 173.5V167.7M1073.8 173.5V165.9M1098.6 173.5V165.1M979.8 173.5V166.1M1180.3 173.5V167.5M981.5 173.5V165.9M1014.9 173.5V167.7M1079.8 173.5V165.0M1088.1 173.5V164.1M1097.2 173.5V167.8M1200.2 173.5V165.6M969.9 173.5V164.6M1133.8 173.5V165.4M1070.8 173.5V167.4M1168.5 173.5V167.7M1131.5 173.5V166.1M1168.6 173.5V167.8M1181.6 173.5V164.6M1160.4 173.5V165.9M994.8 173.5V166.7M1098.3 173.5V164.8M1158.6 173.5V167.1M1158.9 173.5V165.9M1197.9 173.5V165.9M1067.3 173.5V167.6M963.3 173.5V164.7M1146.8 173.5V165.1M1032.1 173.5V167.2M1128.5 173.5V166.2M973.5 173.5V166.7M1051.8 173.5V164.1M1122.8 173.5V165.2M993.2 173.5V164.1M1042.0 173.5V164.8M998.1 173.5V164.7M1188.7 173.5V166.7M1158.8 173.5V164.5M1124.1 173.5V166.6M1093.8 173.5V164.6M1210.8 173.5V165.1M1027.1 173.5V165.9M1141.3 173.5V167.3M983.0 173.5V165.5M1119.8 173.5V165.4M1010.9 173.5V165.2M963.4 173.5V167.7M1193.3 173.5V167.0M1032.4 173.5V165.7M1214.0 173.5V164.5M1134.7 173.5V167.0M1132.4 173.5V164.3M1133.1 173.5V164.0M1214.5 173.5V167.6M1018.4 173.5V165.0M1213.3 173.5V166.4M1043.2 173.5V167.4M985.1 173.5V167.1M1196.6 173.5V166.5M985.9 173.5V167.9M1082.4 173.5V165.1M1174.1 173.5V166.1M1031.7 173.5V166.6M1145.0 173.5V164.4M1125.0 173.5V164.0M1137.6 173.5V166.1" fill="none" stroke="#e9b943" stroke-width="1.3"/><g fill="#e9b943"><circle cx="1117.3" cy="167.4" r="1.45"/><circle cx="1023.4" cy="165.1" r="1.45"/><circle cx="1209.3" cy="164.5" r="1.45"/><circle cx="1024.7" cy="167.4" r="1.45"/><circle cx="1213.6" cy="164.0" r="1.45"/><circle cx="1002.2" cy="164.1" r="1.45"/><circle cx="1203.7" cy="166.7" r="1.45"/><circle cx="977.0" cy="164.1" r="1.45"/><circle cx="962.9" cy="164.1" r="1.45"/><circle cx="985.9" cy="167.5" r="1.45"/><circle cx="1141.7" cy="164.9" r="1.45"/><circle cx="1020.4" cy="164.0" r="1.45"/><circle cx="1031.4" cy="164.6" r="1.45"/><circle cx="1133.0" cy="167.4" r="1.45"/><circle cx="968.5" cy="166.3" r="1.45"/><circle cx="1099.0" cy="165.7" r="1.45"/><circle cx="1063.3" cy="166.5" r="1.45"/><circle cx="1002.2" cy="166.4" r="1.45"/><circle cx="1193.9" cy="167.6" r="1.45"/><circle cx="1053.1" cy="168.0" r="1.45"/><circle cx="1035.4" cy="166.7" r="1.45"/><circle cx="1138.4" cy="166.3" r="1.45"/><circle cx="1179.6" cy="165.6" r="1.45"/><circle cx="1019.3" cy="164.1" r="1.45"/><circle cx="993.5" cy="167.6" r="1.45"/><circle cx="1206.3" cy="166.6" r="1.45"/><circle cx="1070.2" cy="164.4" r="1.45"/><circle cx="1097.7" cy="164.6" r="1.45"/><circle cx="1077.7" cy="167.5" r="1.45"/><circle cx="1172.5" cy="165.2" r="1.45"/><circle cx="1070.6" cy="167.6" r="1.45"/><circle cx="1154.4" cy="164.1" r="1.45"/><circle cx="1094.6" cy="166.9" r="1.45"/><circle cx="981.4" cy="165.5" r="1.45"/><circle cx="1091.1" cy="166.1" r="1.45"/><circle cx="1179.6" cy="165.9" r="1.45"/><circle cx="1096.7" cy="167.1" r="1.45"/><circle cx="1061.4" cy="166.5" r="1.45"/><circle cx="967.6" cy="166.8" r="1.45"/><circle cx="1140.2" cy="165.5" r="1.45"/><circle cx="1061.3" cy="166.3" r="1.45"/><circle cx="1043.6" cy="165.6" r="1.45"/><circle cx="1055.5" cy="165.8" r="1.45"/><circle cx="1067.7" cy="165.3" r="1.45"/><circle cx="1046.8" cy="164.0" r="1.45"/><circle cx="1035.5" cy="165.8" r="1.45"/><circle cx="1078.7" cy="165.7" r="1.45"/><circle cx="972.9" cy="165.5" r="1.45"/><circle cx="1018.7" cy="165.7" r="1.45"/><circle cx="1072.9" cy="166.3" r="1.45"/><circle cx="1187.1" cy="167.0" r="1.45"/><circle cx="1070.4" cy="165.8" r="1.45"/><circle cx="1103.0" cy="167.0" r="1.45"/><circle cx="1189.3" cy="165.3" r="1.45"/><circle cx="1166.9" cy="164.3" r="1.45"/><circle cx="1143.0" cy="164.7" r="1.45"/><circle cx="1119.3" cy="164.8" r="1.45"/><circle cx="1113.2" cy="167.1" r="1.45"/><circle cx="1009.7" cy="167.9" r="1.45"/><circle cx="995.5" cy="167.2" r="1.45"/><circle cx="975.2" cy="165.6" r="1.45"/><circle cx="985.0" cy="167.5" r="1.45"/><circle cx="1118.1" cy="167.6" r="1.45"/><circle cx="1116.5" cy="163.9" r="1.45"/><circle cx="970.5" cy="166.5" r="1.45"/><circle cx="1175.2" cy="167.7" r="1.45"/><circle cx="1073.8" cy="165.9" r="1.45"/><circle cx="1098.6" cy="165.1" r="1.45"/><circle cx="979.8" cy="166.1" r="1.45"/><circle cx="1180.3" cy="167.5" r="1.45"/><circle cx="981.5" cy="165.9" r="1.45"/><circle cx="1014.9" cy="167.7" r="1.45"/><circle cx="1079.8" cy="165.0" r="1.45"/><circle cx="1088.1" cy="164.1" r="1.45"/><circle cx="1097.2" cy="167.8" r="1.45"/><circle cx="1200.2" cy="165.6" r="1.45"/><circle cx="969.9" cy="164.6" r="1.45"/><circle cx="1133.8" cy="165.4" r="1.45"/><circle cx="1070.8" cy="167.4" r="1.45"/><circle cx="1168.5" cy="167.7" r="1.45"/><circle cx="1131.5" cy="166.1" r="1.45"/><circle cx="1168.6" cy="167.8" r="1.45"/><circle cx="1181.6" cy="164.6" r="1.45"/><circle cx="1160.4" cy="165.9" r="1.45"/><circle cx="994.8" cy="166.7" r="1.45"/><circle cx="1098.3" cy="164.8" r="1.45"/><circle cx="1158.6" cy="167.1" r="1.45"/><circle cx="1158.9" cy="165.9" r="1.45"/><circle cx="1197.9" cy="165.9" r="1.45"/><circle cx="1067.3" cy="167.6" r="1.45"/><circle cx="963.3" cy="164.7" r="1.45"/><circle cx="1146.8" cy="165.1" r="1.45"/><circle cx="1032.1" cy="167.2" r="1.45"/><circle cx="1128.5" cy="166.2" r="1.45"/><circle cx="973.5" cy="166.7" r="1.45"/><circle cx="1051.8" cy="164.1" r="1.45"/><circle cx="1122.8" cy="165.2" r="1.45"/><circle cx="993.2" cy="164.1" r="1.45"/><circle cx="1042.0" cy="164.8" r="1.45"/><circle cx="998.1" cy="164.7" r="1.45"/><circle cx="1188.7" cy="166.7" r="1.45"/><circle cx="1158.8" cy="164.5" r="1.45"/><circle cx="1124.1" cy="166.6" r="1.45"/><circle cx="1093.8" cy="164.6" r="1.45"/><circle cx="1210.8" cy="165.1" r="1.45"/><circle cx="1027.1" cy="165.9" r="1.45"/><circle cx="1141.3" cy="167.3" r="1.45"/><circle cx="983.0" cy="165.5" r="1.45"/><circle cx="1119.8" cy="165.4" r="1.45"/><circle cx="1010.9" cy="165.2" r="1.45"/><circle cx="963.4" cy="167.7" r="1.45"/><circle cx="1193.3" cy="167.0" r="1.45"/><circle cx="1032.4" cy="165.7" r="1.45"/><circle cx="1214.0" cy="164.5" r="1.45"/><circle cx="1134.7" cy="167.0" r="1.45"/><circle cx="1132.4" cy="164.3" r="1.45"/><circle cx="1133.1" cy="164.0" r="1.45"/><circle cx="1214.5" cy="167.6" r="1.45"/><circle cx="1018.4" cy="165.0" r="1.45"/><circle cx="1213.3" cy="166.4" r="1.45"/><circle cx="1043.2" cy="167.4" r="1.45"/><circle cx="985.1" cy="167.1" r="1.45"/><circle cx="1196.6" cy="166.5" r="1.45"/><circle cx="985.9" cy="167.9" r="1.45"/><circle cx="1082.4" cy="165.1" r="1.45"/><circle cx="1174.1" cy="166.1" r="1.45"/><circle cx="1031.7" cy="166.6" r="1.45"/><circle cx="1145.0" cy="164.4" r="1.45"/><circle cx="1125.0" cy="164.0" r="1.45"/><circle cx="1137.6" cy="166.1" r="1.45"/></g>
<path d="M1040.4 223.7V230.7M1115.1 223.7V233.6M1064.6 223.7V234.0M1188.8 223.7V232.8M1034.7 223.7V231.9M993.7 223.7V235.6M964.8 223.7V230.4M1004.5 223.7V230.7M985.1 223.7V234.1M1193.7 223.7V234.0M1134.7 223.7V234.5M1109.5 223.7V232.8M1202.4 223.7V229.0M1118.9 223.7V233.0M1141.4 223.7V229.2M1001.5 223.7V234.4M1034.5 223.7V234.0M1118.8 223.7V232.2M1174.6 223.7V234.6M1033.1 223.7V234.9M1076.9 223.7V231.0M1033.1 223.7V233.3M1034.9 223.7V230.8M1107.9 223.7V234.1M1195.8 223.7V233.6M1210.4 223.7V229.4M1105.6 223.7V231.6M967.2 223.7V234.8M1031.6 223.7V232.8M1128.5 223.7V235.0M1197.3 223.7V235.2M998.3 223.7V231.7M1172.7 223.7V234.9M1185.7 223.7V234.2M983.9 223.7V235.2M1192.2 223.7V234.9M1113.1 223.7V232.6M1177.2 223.7V234.5M1133.1 223.7V233.5M1134.4 223.7V232.7M1184.5 223.7V234.3M1155.9 223.7V234.8M1065.4 223.7V234.7M1058.7 223.7V229.1M1208.5 223.7V233.3M1028.4 223.7V232.5M1057.3 223.7V230.4M997.8 223.7V230.2M1047.6 223.7V230.8M1110.3 223.7V229.4M1010.5 223.7V232.0M1069.8 223.7V234.5M1116.5 223.7V231.4M1059.5 223.7V232.5M1153.9 223.7V229.9M1092.7 223.7V234.0M1044.1 223.7V231.0M1146.2 223.7V235.6M1102.5 223.7V233.0M1076.4 223.7V233.3M1002.2 223.7V235.0M1213.2 223.7V229.9M1005.4 223.7V229.9M1059.3 223.7V234.0M1110.6 223.7V230.7M1199.5 223.7V229.4M1038.0 223.7V231.6M990.3 223.7V233.1M1141.6 223.7V230.9M1204.0 223.7V232.9M1076.5 223.7V231.7M1216.0 223.7V231.1M1043.3 223.7V233.7M1186.0 223.7V231.1M961.4 223.7V232.1M1134.6 223.7V231.5M1187.2 223.7V233.7M1032.5 223.7V230.5M1177.6 223.7V234.7M1114.2 223.7V232.3M1042.8 223.7V232.0M972.0 223.7V235.7M1130.0 223.7V230.1M1056.9 223.7V231.8M1099.9 223.7V235.2M1011.7 223.7V229.7M965.9 223.7V230.7M985.7 223.7V229.3M1124.8 223.7V230.9M993.6 223.7V232.2M1037.0 223.7V230.2M1112.2 223.7V233.2M1030.8 223.7V232.7M1081.8 223.7V233.2M1066.4 223.7V233.4M1159.6 223.7V229.1M1064.1 223.7V232.2M1033.3 223.7V232.1M1212.9 223.7V233.1M1005.2 223.7V233.4M1124.6 223.7V234.1M1120.4 223.7V229.0M1050.3 223.7V230.6M1151.0 223.7V232.3M1153.6 223.7V231.5M1082.7 223.7V229.8M1043.5 223.7V233.1M989.9 223.7V233.7M1183.3 223.7V232.4M1212.4 223.7V232.5M1032.7 223.7V229.9M1042.8 223.7V229.4M1126.0 223.7V229.7M1160.0 223.7V230.8M1177.0 223.7V232.0M1157.2 223.7V234.5M1134.8 223.7V229.2M1119.9 223.7V229.7M964.7 223.7V232.0M1086.1 223.7V230.4" fill="none" stroke="#e9b943" stroke-width="1.3"/><g fill="#e9b943"><circle cx="1040.4" cy="230.7" r="1.45"/><circle cx="1115.1" cy="233.6" r="1.45"/><circle cx="1064.6" cy="234.0" r="1.45"/><circle cx="1188.8" cy="232.8" r="1.45"/><circle cx="1034.7" cy="231.9" r="1.45"/><circle cx="993.7" cy="235.6" r="1.45"/><circle cx="964.8" cy="230.4" r="1.45"/><circle cx="1004.5" cy="230.7" r="1.45"/><circle cx="985.1" cy="234.1" r="1.45"/><circle cx="1193.7" cy="234.0" r="1.45"/><circle cx="1134.7" cy="234.5" r="1.45"/><circle cx="1109.5" cy="232.8" r="1.45"/><circle cx="1202.4" cy="229.0" r="1.45"/><circle cx="1118.9" cy="233.0" r="1.45"/><circle cx="1141.4" cy="229.2" r="1.45"/><circle cx="1001.5" cy="234.4" r="1.45"/><circle cx="1034.5" cy="234.0" r="1.45"/><circle cx="1118.8" cy="232.2" r="1.45"/><circle cx="1174.6" cy="234.6" r="1.45"/><circle cx="1033.1" cy="234.9" r="1.45"/><circle cx="1076.9" cy="231.0" r="1.45"/><circle cx="1033.1" cy="233.3" r="1.45"/><circle cx="1034.9" cy="230.8" r="1.45"/><circle cx="1107.9" cy="234.1" r="1.45"/><circle cx="1195.8" cy="233.6" r="1.45"/><circle cx="1210.4" cy="229.4" r="1.45"/><circle cx="1105.6" cy="231.6" r="1.45"/><circle cx="967.2" cy="234.8" r="1.45"/><circle cx="1031.6" cy="232.8" r="1.45"/><circle cx="1128.5" cy="235.0" r="1.45"/><circle cx="1197.3" cy="235.2" r="1.45"/><circle cx="998.3" cy="231.7" r="1.45"/><circle cx="1172.7" cy="234.9" r="1.45"/><circle cx="1185.7" cy="234.2" r="1.45"/><circle cx="983.9" cy="235.2" r="1.45"/><circle cx="1192.2" cy="234.9" r="1.45"/><circle cx="1113.1" cy="232.6" r="1.45"/><circle cx="1177.2" cy="234.5" r="1.45"/><circle cx="1133.1" cy="233.5" r="1.45"/><circle cx="1134.4" cy="232.7" r="1.45"/><circle cx="1184.5" cy="234.3" r="1.45"/><circle cx="1155.9" cy="234.8" r="1.45"/><circle cx="1065.4" cy="234.7" r="1.45"/><circle cx="1058.7" cy="229.1" r="1.45"/><circle cx="1208.5" cy="233.3" r="1.45"/><circle cx="1028.4" cy="232.5" r="1.45"/><circle cx="1057.3" cy="230.4" r="1.45"/><circle cx="997.8" cy="230.2" r="1.45"/><circle cx="1047.6" cy="230.8" r="1.45"/><circle cx="1110.3" cy="229.4" r="1.45"/><circle cx="1010.5" cy="232.0" r="1.45"/><circle cx="1069.8" cy="234.5" r="1.45"/><circle cx="1116.5" cy="231.4" r="1.45"/><circle cx="1059.5" cy="232.5" r="1.45"/><circle cx="1153.9" cy="229.9" r="1.45"/><circle cx="1092.7" cy="234.0" r="1.45"/><circle cx="1044.1" cy="231.0" r="1.45"/><circle cx="1146.2" cy="235.6" r="1.45"/><circle cx="1102.5" cy="233.0" r="1.45"/><circle cx="1076.4" cy="233.3" r="1.45"/><circle cx="1002.2" cy="235.0" r="1.45"/><circle cx="1213.2" cy="229.9" r="1.45"/><circle cx="1005.4" cy="229.9" r="1.45"/><circle cx="1059.3" cy="234.0" r="1.45"/><circle cx="1110.6" cy="230.7" r="1.45"/><circle cx="1199.5" cy="229.4" r="1.45"/><circle cx="1038.0" cy="231.6" r="1.45"/><circle cx="990.3" cy="233.1" r="1.45"/><circle cx="1141.6" cy="230.9" r="1.45"/><circle cx="1204.0" cy="232.9" r="1.45"/><circle cx="1076.5" cy="231.7" r="1.45"/><circle cx="1216.0" cy="231.1" r="1.45"/><circle cx="1043.3" cy="233.7" r="1.45"/><circle cx="1186.0" cy="231.1" r="1.45"/><circle cx="961.4" cy="232.1" r="1.45"/><circle cx="1134.6" cy="231.5" r="1.45"/><circle cx="1187.2" cy="233.7" r="1.45"/><circle cx="1032.5" cy="230.5" r="1.45"/><circle cx="1177.6" cy="234.7" r="1.45"/><circle cx="1114.2" cy="232.3" r="1.45"/><circle cx="1042.8" cy="232.0" r="1.45"/><circle cx="972.0" cy="235.7" r="1.45"/><circle cx="1130.0" cy="230.1" r="1.45"/><circle cx="1056.9" cy="231.8" r="1.45"/><circle cx="1099.9" cy="235.2" r="1.45"/><circle cx="1011.7" cy="229.7" r="1.45"/><circle cx="965.9" cy="230.7" r="1.45"/><circle cx="985.7" cy="229.3" r="1.45"/><circle cx="1124.8" cy="230.9" r="1.45"/><circle cx="993.6" cy="232.2" r="1.45"/><circle cx="1037.0" cy="230.2" r="1.45"/><circle cx="1112.2" cy="233.2" r="1.45"/><circle cx="1030.8" cy="232.7" r="1.45"/><circle cx="1081.8" cy="233.2" r="1.45"/><circle cx="1066.4" cy="233.4" r="1.45"/><circle cx="1159.6" cy="229.1" r="1.45"/><circle cx="1064.1" cy="232.2" r="1.45"/><circle cx="1033.3" cy="232.1" r="1.45"/><circle cx="1212.9" cy="233.1" r="1.45"/><circle cx="1005.2" cy="233.4" r="1.45"/><circle cx="1124.6" cy="234.1" r="1.45"/><circle cx="1120.4" cy="229.0" r="1.45"/><circle cx="1050.3" cy="230.6" r="1.45"/><circle cx="1151.0" cy="232.3" r="1.45"/><circle cx="1153.6" cy="231.5" r="1.45"/><circle cx="1082.7" cy="229.8" r="1.45"/><circle cx="1043.5" cy="233.1" r="1.45"/><circle cx="989.9" cy="233.7" r="1.45"/><circle cx="1183.3" cy="232.4" r="1.45"/><circle cx="1212.4" cy="232.5" r="1.45"/><circle cx="1032.7" cy="229.9" r="1.45"/><circle cx="1042.8" cy="229.4" r="1.45"/><circle cx="1126.0" cy="229.7" r="1.45"/><circle cx="1160.0" cy="230.8" r="1.45"/><circle cx="1177.0" cy="232.0" r="1.45"/><circle cx="1157.2" cy="234.5" r="1.45"/><circle cx="1134.8" cy="229.2" r="1.45"/><circle cx="1119.9" cy="229.7" r="1.45"/><circle cx="964.7" cy="232.0" r="1.45"/><circle cx="1086.1" cy="230.4" r="1.45"/></g>
<path d="M1190.7 223.7V237.9M1038.8 223.7V238.0M1107.6 223.7V237.9M1206.0 223.7V237.9M1018.1 223.7V239.4M999.4 223.7V239.2M1203.5 223.7V238.9M1184.8 223.7V236.9M972.2 223.7V238.3M1109.2 223.7V237.9M1125.9 223.7V236.8M1144.2 223.7V239.4" fill="none" stroke="#e9b943" stroke-width="1.3"/><g fill="#e9b943"><circle cx="1190.7" cy="237.9" r="1.45"/><circle cx="1038.8" cy="238.0" r="1.45"/><circle cx="1107.6" cy="237.9" r="1.45"/><circle cx="1206.0" cy="237.9" r="1.45"/><circle cx="1018.1" cy="239.4" r="1.45"/><circle cx="999.4" cy="239.2" r="1.45"/><circle cx="1203.5" cy="238.9" r="1.45"/><circle cx="1184.8" cy="236.9" r="1.45"/><circle cx="972.2" cy="238.3" r="1.45"/><circle cx="1109.2" cy="237.9" r="1.45"/><circle cx="1125.9" cy="236.8" r="1.45"/><circle cx="1144.2" cy="239.4" r="1.45"/></g>
<text x="1120.5" y="300.8" text-anchor="end" font-size="10.7" fill="#33a2e5" textLength="17" lengthAdjust="spacingAndGlyphs" stroke="#33a2e5" stroke-width="0.55">min</text>
<text x="1162.0" y="300.8" text-anchor="end" font-size="10.7" fill="#33a2e5" textLength="20" lengthAdjust="spacingAndGlyphs" stroke="#33a2e5" stroke-width="0.55">max</text>
<text x="1204.0" y="300.8" text-anchor="end" font-size="10.7" fill="#33a2e5" textLength="17" lengthAdjust="spacingAndGlyphs" stroke="#33a2e5" stroke-width="0.55">avg</text>
<text x="1247.0" y="300.8" text-anchor="end" font-size="10.7" fill="#33a2e5" textLength="34" lengthAdjust="spacingAndGlyphs" stroke="#33a2e5" stroke-width="0.55">current</text>
<rect x="907.8" y="316.6" width="13.5" height="3.7" rx="1.4" fill="#7eb26d"/>
<text x="929.8" y="320.8" font-size="10.7" fill="#cfd1d4" textLength="118" lengthAdjust="spacingAndGlyphs" stroke="#cfd1d4" stroke-width="0.34">Predictor - recommender</text>
<rect x="906.8" y="329.4" width="349.6" height="22.3" fill="#1a1c20"/>
<rect x="907.8" y="339.8" width="13.5" height="3.7" rx="1.4" fill="#e9b943"/>
<text x="929.8" y="344.0" font-size="10.7" fill="#cfd1d4" textLength="121.5" lengthAdjust="spacingAndGlyphs" stroke="#cfd1d4" stroke-width="0.34">Response - recommender</text>
<text x="1127.8" y="320.8" text-anchor="end" font-size="10.7" fill="#cfd1d4" textLength="27" lengthAdjust="spacingAndGlyphs" stroke="#cfd1d4" stroke-width="0.34">0.239</text>
<text x="1169.4" y="320.8" text-anchor="end" font-size="10.7" fill="#cfd1d4" textLength="27" lengthAdjust="spacingAndGlyphs" stroke="#cfd1d4" stroke-width="0.34">0.996</text>
<text x="1211.3" y="320.8" text-anchor="end" font-size="10.7" fill="#cfd1d4" textLength="27" lengthAdjust="spacingAndGlyphs" stroke="#cfd1d4" stroke-width="0.34">0.660</text>
<text x="1254.1" y="320.8" text-anchor="end" font-size="10.7" fill="#cfd1d4" textLength="27" lengthAdjust="spacingAndGlyphs" stroke="#cfd1d4" stroke-width="0.34">0.694</text>
<text x="1127.8" y="344.0" text-anchor="end" font-size="10.7" fill="#cfd1d4" textLength="27" lengthAdjust="spacingAndGlyphs" stroke="#cfd1d4" stroke-width="0.34">0.239</text>
<text x="1169.4" y="344.0" text-anchor="end" font-size="10.7" fill="#cfd1d4" textLength="27" lengthAdjust="spacingAndGlyphs" stroke="#cfd1d4" stroke-width="0.34">0.996</text>
<text x="1211.3" y="344.0" text-anchor="end" font-size="10.7" fill="#cfd1d4" textLength="27" lengthAdjust="spacingAndGlyphs" stroke="#cfd1d4" stroke-width="0.34">0.660</text>
<text x="1254.1" y="344.0" text-anchor="end" font-size="10.7" fill="#cfd1d4" textLength="27" lengthAdjust="spacingAndGlyphs" stroke="#cfd1d4" stroke-width="0.34">0.842</text>
<rect x="1312.3" y="308.8" width="253.2" height="1" fill="#35373b"/>
<text x="1308.0" y="313.0" text-anchor="end" font-size="10.7" fill="#cfd1d4" textLength="25" lengthAdjust="spacingAndGlyphs" stroke="#cfd1d4" stroke-width="0.34">0.100</text>
<rect x="1312.3" y="291.8" width="253.2" height="1" fill="#35373b"/>
<text x="1308.0" y="295.9" text-anchor="end" font-size="10.7" fill="#cfd1d4" textLength="25" lengthAdjust="spacingAndGlyphs" stroke="#cfd1d4" stroke-width="0.34">0.200</text>
<rect x="1312.3" y="274.7" width="253.2" height="1" fill="#35373b"/>
<text x="1308.0" y="278.9" text-anchor="end" font-size="10.7" fill="#cfd1d4" textLength="25" lengthAdjust="spacingAndGlyphs" stroke="#cfd1d4" stroke-width="0.34">0.300</text>
<rect x="1312.3" y="257.6" width="253.2" height="1" fill="#35373b"/>
<text x="1308.0" y="261.8" text-anchor="end" font-size="10.7" fill="#cfd1d4" textLength="25" lengthAdjust="spacingAndGlyphs" stroke="#cfd1d4" stroke-width="0.34">0.400</text>
<rect x="1312.3" y="240.6" width="253.2" height="1" fill="#35373b"/>
<text x="1308.0" y="244.8" text-anchor="end" font-size="10.7" fill="#cfd1d4" textLength="25" lengthAdjust="spacingAndGlyphs" stroke="#cfd1d4" stroke-width="0.34">0.500</text>
<rect x="1312.3" y="223.6" width="253.2" height="1" fill="#35373b"/>
<text x="1308.0" y="227.8" text-anchor="end" font-size="10.7" fill="#cfd1d4" textLength="25" lengthAdjust="spacingAndGlyphs" stroke="#cfd1d4" stroke-width="0.34">0.600</text>
<rect x="1312.3" y="206.5" width="253.2" height="1" fill="#35373b"/>
<text x="1308.0" y="210.7" text-anchor="end" font-size="10.7" fill="#cfd1d4" textLength="25" lengthAdjust="spacingAndGlyphs" stroke="#cfd1d4" stroke-width="0.34">0.700</text>
<rect x="1312.3" y="189.4" width="253.2" height="1" fill="#35373b"/>
<text x="1308.0" y="193.6" text-anchor="end" font-size="10.7" fill="#cfd1d4" textLength="25" lengthAdjust="spacingAndGlyphs" stroke="#cfd1d4" stroke-width="0.34">0.800</text>
<rect x="1312.3" y="172.4" width="253.2" height="1" fill="#35373b"/>
<text x="1308.0" y="176.6" text-anchor="end" font-size="10.7" fill="#cfd1d4" textLength="25" lengthAdjust="spacingAndGlyphs" stroke="#cfd1d4" stroke-width="0.34">0.900</text>
<rect x="1312.3" y="155.3" width="253.2" height="1" fill="#35373b"/>
<text x="1308.0" y="159.5" text-anchor="end" font-size="10.7" fill="#cfd1d4" textLength="25" lengthAdjust="spacingAndGlyphs" stroke="#cfd1d4" stroke-width="0.34">1.000</text>
<rect x="1312.3" y="138.3" width="253.2" height="1" fill="#35373b"/>
<text x="1308.0" y="142.5" text-anchor="end" font-size="10.7" fill="#cfd1d4" textLength="25" lengthAdjust="spacingAndGlyphs" stroke="#cfd1d4" stroke-width="0.34">1.100</text>
<rect x="1394.9" y="138.8" width="1" height="170.5" fill="#35373b"/>
<text x="1395.4" y="324.8" text-anchor="middle" font-size="10.7" fill="#cfd1d4" textLength="26" lengthAdjust="spacingAndGlyphs" stroke="#cfd1d4" stroke-width="0.34">01:00</text>
<rect x="1499.0" y="138.8" width="1" height="170.5" fill="#35373b"/>
<text x="1499.5" y="324.8" text-anchor="middle" font-size="10.7" fill="#cfd1d4" textLength="26" lengthAdjust="spacingAndGlyphs" stroke="#cfd1d4" stroke-width="0.34">01:15</text>
<rect x="1322.15" y="147.00" width="6.6" height="10.9" fill="#892b04"/>
<rect x="1330.60" y="147.00" width="6.6" height="10.9" fill="#892b04"/>
<rect x="1339.06" y="147.00" width="6.6" height="10.9" fill="#8f2d04"/>
<rect x="1347.51" y="147.00" width="6.6" height="10.9" fill="#8e2d04"/>
<rect x="1355.96" y="147.00" width="6.6" height="10.9" fill="#882a04"/>
<rect x="1364.41" y="147.00" width="6.6" height="10.9" fill="#872a04"/>
<rect x="1372.86" y="147.00" width="6.6" height="10.9" fill="#882b04"/>
<rect x="1381.32" y="147.00" width="6.6" height="10.9" fill="#8f2d04"/>
<rect x="1389.77" y="147.00" width="6.6" height="10.9" fill="#8b2c04"/>
<rect x="1398.22" y="147.00" width="6.6" height="10.9" fill="#8f2d04"/>
<rect x="1406.67" y="147.00" width="6.6" height="10.9" fill="#8f2d04"/>
<rect x="1415.12" y="147.00" width="6.6" height="10.9" fill="#902d04"/>
<rect x="1423.58" y="147.00" width="6.6" height="10.9" fill="#8c2c04"/>
<rect x="1432.03" y="147.00" width="6.6" height="10.9" fill="#892b04"/>
<rect x="1440.48" y="147.00" width="6.6" height="10.9" fill="#8c2c04"/>
<rect x="1448.93" y="147.00" width="6.6" height="10.9" fill="#8f2d04"/>
<rect x="1457.38" y="147.00" width="6.6" height="10.9" fill="#902d04"/>
<rect x="1465.84" y="147.00" width="6.6" height="10.9" fill="#8b2b04"/>
<rect x="1474.29" y="147.00" width="6.6" height="10.9" fill="#8b2c04"/>
<rect x="1482.74" y="147.00" width="6.6" height="10.9" fill="#8e2d04"/>
<rect x="1491.19" y="147.00" width="6.6" height="10.9" fill="#8b2b04"/>
<rect x="1499.64" y="147.00" width="6.6" height="10.9" fill="#892b04"/>
<rect x="1508.10" y="147.00" width="6.6" height="10.9" fill="#892b04"/>
<rect x="1516.55" y="147.00" width="6.6" height="10.9" fill="#8b2c04"/>
<rect x="1525.00" y="147.00" width="6.6" height="10.9" fill="#892b04"/>
<rect x="1533.45" y="147.00" width="6.6" height="10.9" fill="#8e2d04"/>
<rect x="1313.70" y="159.83" width="6.6" height="10.9" fill="#9a3103"/>
<rect x="1322.15" y="159.83" width="6.6" height="10.9" fill="#e5580a"/>
<rect x="1330.60" y="159.83" width="6.6" height="10.9" fill="#e85c0c"/>
<rect x="1339.06" y="159.83" width="6.6" height="10.9" fill="#f87d2a"/>
<rect x="1347.51" y="159.83" width="6.6" height="10.9" fill="#f67824"/>
<rect x="1355.96" y="159.83" width="6.6" height="10.9" fill="#f4731f"/>
<rect x="1364.41" y="159.83" width="6.6" height="10.9" fill="#f57420"/>
<rect x="1372.86" y="159.83" width="6.6" height="10.9" fill="#f9802d"/>
<rect x="1381.32" y="159.83" width="6.6" height="10.9" fill="#f77b28"/>
<rect x="1389.77" y="159.83" width="6.6" height="10.9" fill="#fda159"/>
<rect x="1398.22" y="159.83" width="6.6" height="10.9" fill="#fda762"/>
<rect x="1406.67" y="159.83" width="6.6" height="10.9" fill="#fdac68"/>
<rect x="1415.12" y="159.83" width="6.6" height="10.9" fill="#fdac68"/>
<rect x="1423.58" y="159.83" width="6.6" height="10.9" fill="#fdad69"/>
<rect x="1432.03" y="159.83" width="6.6" height="10.9" fill="#fdae6b"/>
<rect x="1440.48" y="159.83" width="6.6" height="10.9" fill="#fda761"/>
<rect x="1448.93" y="159.83" width="6.6" height="10.9" fill="#fdaa65"/>
<rect x="1457.38" y="159.83" width="6.6" height="10.9" fill="#fda158"/>
<rect x="1465.84" y="159.83" width="6.6" height="10.9" fill="#fdaa65"/>
<rect x="1474.29" y="159.83" width="6.6" height="10.9" fill="#f3701b"/>
<rect x="1482.74" y="159.83" width="6.6" height="10.9" fill="#f26b16"/>
<rect x="1491.19" y="159.83" width="6.6" height="10.9" fill="#c74202"/>
<rect x="1499.64" y="159.83" width="6.6" height="10.9" fill="#d24501"/>
<rect x="1508.10" y="159.83" width="6.6" height="10.9" fill="#c64102"/>
<rect x="1516.55" y="159.83" width="6.6" height="10.9" fill="#c94202"/>
<rect x="1525.00" y="159.83" width="6.6" height="10.9" fill="#ca4302"/>
<rect x="1533.45" y="159.83" width="6.6" height="10.9" fill="#d34601"/>
<rect x="1313.70" y="172.66" width="6.6" height="10.9" fill="#9a3103"/>
<rect x="1322.15" y="172.66" width="6.6" height="10.9" fill="#eb600e"/>
<rect x="1330.60" y="172.66" width="6.6" height="10.9" fill="#e95e0d"/>
<rect x="1339.06" y="172.66" width="6.6" height="10.9" fill="#fd9d53"/>
<rect x="1347.51" y="172.66" width="6.6" height="10.9" fill="#fda55f"/>
<rect x="1355.96" y="172.66" width="6.6" height="10.9" fill="#fd9b50"/>
<rect x="1364.41" y="172.66" width="6.6" height="10.9" fill="#fda35b"/>
<rect x="1372.86" y="172.66" width="6.6" height="10.9" fill="#fda25a"/>
<rect x="1381.32" y="172.66" width="6.6" height="10.9" fill="#fda057"/>
<rect x="1389.77" y="172.66" width="6.6" height="10.9" fill="#fdd6ad"/>
<rect x="1398.22" y="172.66" width="6.6" height="10.9" fill="#fddab5"/>
<rect x="1406.67" y="172.66" width="6.6" height="10.9" fill="#fdcfa1"/>
<rect x="1415.12" y="172.66" width="6.6" height="10.9" fill="#fdd5ac"/>
<rect x="1423.58" y="172.66" width="6.6" height="10.9" fill="#fdd7b0"/>
<rect x="1432.03" y="172.66" width="6.6" height="10.9" fill="#fdd1a4"/>
<rect x="1440.48" y="172.66" width="6.6" height="10.9" fill="#fdd9b5"/>
<rect x="1448.93" y="172.66" width="6.6" height="10.9" fill="#fdd5ac"/>
<rect x="1457.38" y="172.66" width="6.6" height="10.9" fill="#fdcfa1"/>
<rect x="1465.84" y="172.66" width="6.6" height="10.9" fill="#fdd1a4"/>
<rect x="1474.29" y="172.66" width="6.6" height="10.9" fill="#fd974b"/>
<rect x="1482.74" y="172.66" width="6.6" height="10.9" fill="#fd9d52"/>
<rect x="1491.19" y="172.66" width="6.6" height="10.9" fill="#e15307"/>
<rect x="1499.64" y="172.66" width="6.6" height="10.9" fill="#de4e04"/>
<rect x="1508.10" y="172.66" width="6.6" height="10.9" fill="#d84801"/>
<rect x="1516.55" y="172.66" width="6.6" height="10.9" fill="#df5006"/>
<rect x="1525.00" y="172.66" width="6.6" height="10.9" fill="#e25508"/>
<rect x="1533.45" y="172.66" width="6.6" height="10.9" fill="#d84801"/>
<rect x="1541.90" y="172.66" width="6.6" height="10.9" fill="#822804"/>
<rect x="1313.70" y="185.49" width="6.6" height="10.9" fill="#9a3103"/>
<rect x="1322.15" y="185.49" width="6.6" height="10.9" fill="#ec6310"/>
<rect x="1330.60" y="185.49" width="6.6" height="10.9" fill="#e95d0d"/>
<rect x="1339.06" y="185.49" width="6.6" height="10.9" fill="#fda963"/>
<rect x="1347.51" y="185.49" width="6.6" height="10.9" fill="#fda159"/>
<rect x="1355.96" y="185.49" width="6.6" height="10.9" fill="#fdae6c"/>
<rect x="1364.41" y="185.49" width="6.6" height="10.9" fill="#fda660"/>
<rect x="1372.86" y="185.49" width="6.6" height="10.9" fill="#fda964"/>
<rect x="1381.32" y="185.49" width="6.6" height="10.9" fill="#fda55e"/>
<rect x="1389.77" y="185.49" width="6.6" height="10.9" fill="#fee9d4"/>
<rect x="1398.22" y="185.49" width="6.6" height="10.9" fill="#fee4c9"/>
<rect x="1406.67" y="185.49" width="6.6" height="10.9" fill="#fff1e3"/>
<rect x="1415.12" y="185.49" width="6.6" height="10.9" fill="#fee8d2"/>
<rect x="1423.58" y="185.49" width="6.6" height="10.9" fill="#fee8d1"/>
<rect x="1432.03" y="185.49" width="6.6" height="10.9" fill="#fee9d5"/>
<rect x="1440.48" y="185.49" width="6.6" height="10.9" fill="#fee7d0"/>
<rect x="1448.93" y="185.49" width="6.6" height="10.9" fill="#fee9d3"/>
<rect x="1457.38" y="185.49" width="6.6" height="10.9" fill="#fee8d2"/>
<rect x="1465.84" y="185.49" width="6.6" height="10.9" fill="#fff2e6"/>
<rect x="1474.29" y="185.49" width="6.6" height="10.9" fill="#fda35b"/>
<rect x="1482.74" y="185.49" width="6.6" height="10.9" fill="#fd994e"/>
<rect x="1491.19" y="185.49" width="6.6" height="10.9" fill="#e35508"/>
<rect x="1499.64" y="185.49" width="6.6" height="10.9" fill="#d94901"/>
<rect x="1508.10" y="185.49" width="6.6" height="10.9" fill="#e05106"/>
<rect x="1516.55" y="185.49" width="6.6" height="10.9" fill="#e35608"/>
<rect x="1525.00" y="185.49" width="6.6" height="10.9" fill="#db4b03"/>
<rect x="1533.45" y="185.49" width="6.6" height="10.9" fill="#db4b02"/>
<rect x="1541.90" y="185.49" width="6.6" height="10.9" fill="#822804"/>
<rect x="1313.70" y="198.32" width="6.6" height="10.9" fill="#9a3103"/>
<rect x="1322.15" y="198.32" width="6.6" height="10.9" fill="#f16a14"/>
<rect x="1330.60" y="198.32" width="6.6" height="10.9" fill="#f06712"/>
<rect x="1339.06" y="198.32" width="6.6" height="10.9" fill="#fdaa65"/>
<rect x="1347.51" y="198.32" width="6.6" height="10.9" fill="#fd9d52"/>
<rect x="1355.96" y="198.32" width="6.6" height="10.9" fill="#fd9d52"/>
<rect x="1364.41" y="198.32" width="6.6" height="10.9" fill="#fd9b50"/>
<rect x="1372.86" y="198.32" width="6.6" height="10.9" fill="#fd9f56"/>
<rect x="1381.32" y="198.32" width="6.6" height="10.9" fill="#fd9b50"/>
<rect x="1389.77" y="198.32" width="6.6" height="10.9" fill="#fee2c6"/>
<rect x="1398.22" y="198.32" width="6.6" height="10.9" fill="#fdd7b0"/>
<rect x="1406.67" y="198.32" width="6.6" height="10.9" fill="#fedfc0"/>
<rect x="1415.12" y="198.32" width="6.6" height="10.9" fill="#fee0c2"/>
<rect x="1423.58" y="198.32" width="6.6" height="10.9" fill="#fdd7b0"/>
<rect x="1432.03" y="198.32" width="6.6" height="10.9" fill="#fee4ca"/>
<rect x="1440.48" y="198.32" width="6.6" height="10.9" fill="#fee9d4"/>
<rect x="1448.93" y="198.32" width="6.6" height="10.9" fill="#fedebd"/>
<rect x="1457.38" y="198.32" width="6.6" height="10.9" fill="#fee0c2"/>
<rect x="1465.84" y="198.32" width="6.6" height="10.9" fill="#feddbc"/>
<rect x="1474.29" y="198.32" width="6.6" height="10.9" fill="#fda25a"/>
<rect x="1482.74" y="198.32" width="6.6" height="10.9" fill="#fda057"/>
<rect x="1491.19" y="198.32" width="6.6" height="10.9" fill="#e35609"/>
<rect x="1499.64" y="198.32" width="6.6" height="10.9" fill="#dc4d04"/>
<rect x="1508.10" y="198.32" width="6.6" height="10.9" fill="#dc4c03"/>
<rect x="1516.55" y="198.32" width="6.6" height="10.9" fill="#d74701"/>
<rect x="1525.00" y="198.32" width="6.6" height="10.9" fill="#d94801"/>
<rect x="1533.45" y="198.32" width="6.6" height="10.9" fill="#e35609"/>
<rect x="1541.90" y="198.32" width="6.6" height="10.9" fill="#822804"/>
<rect x="1313.70" y="211.15" width="6.6" height="10.9" fill="#9a3103"/>
<rect x="1322.15" y="211.15" width="6.6" height="10.9" fill="#ef6612"/>
<rect x="1330.60" y="211.15" width="6.6" height="10.9" fill="#ed6410"/>
<rect x="1339.06" y="211.15" width="6.6" height="10.9" fill="#fd974b"/>
<rect x="1347.51" y="211.15" width="6.6" height="10.9" fill="#fda45c"/>
<rect x="1355.96" y="211.15" width="6.6" height="10.9" fill="#fd9648"/>
<rect x="1364.41" y="211.15" width="6.6" height="10.9" fill="#fd9f56"/>
<rect x="1372.86" y="211.15" width="6.6" height="10.9" fill="#fd9e55"/>
<rect x="1381.32" y="211.15" width="6.6" height="10.9" fill="#fda158"/>
<rect x="1389.77" y="211.15" width="6.6" height="10.9" fill="#fdd9b3"/>
<rect x="1398.22" y="211.15" width="6.6" height="10.9" fill="#fdd7b0"/>
<rect x="1406.67" y="211.15" width="6.6" height="10.9" fill="#fdd5ab"/>
<rect x="1415.12" y="211.15" width="6.6" height="10.9" fill="#fdd2a6"/>
<rect x="1423.58" y="211.15" width="6.6" height="10.9" fill="#fddab6"/>
<rect x="1432.03" y="211.15" width="6.6" height="10.9" fill="#fdc997"/>
<rect x="1440.48" y="211.15" width="6.6" height="10.9" fill="#fdce9f"/>
<rect x="1448.93" y="211.15" width="6.6" height="10.9" fill="#fdd9b5"/>
<rect x="1457.38" y="211.15" width="6.6" height="10.9" fill="#fedcb9"/>
<rect x="1465.84" y="211.15" width="6.6" height="10.9" fill="#fdd7b0"/>
<rect x="1474.29" y="211.15" width="6.6" height="10.9" fill="#fd8e3d"/>
<rect x="1482.74" y="211.15" width="6.6" height="10.9" fill="#fd9a4f"/>
<rect x="1491.19" y="211.15" width="6.6" height="10.9" fill="#e25508"/>
<rect x="1499.64" y="211.15" width="6.6" height="10.9" fill="#dc4d04"/>
<rect x="1508.10" y="211.15" width="6.6" height="10.9" fill="#dc4c03"/>
<rect x="1516.55" y="211.15" width="6.6" height="10.9" fill="#db4b03"/>
<rect x="1525.00" y="211.15" width="6.6" height="10.9" fill="#de4f05"/>
<rect x="1533.45" y="211.15" width="6.6" height="10.9" fill="#d94801"/>
<rect x="1313.70" y="223.98" width="6.6" height="10.9" fill="#9a3103"/>
<rect x="1322.15" y="223.98" width="6.6" height="10.9" fill="#ea5f0e"/>
<rect x="1330.60" y="223.98" width="6.6" height="10.9" fill="#f26d18"/>
<rect x="1339.06" y="223.98" width="6.6" height="10.9" fill="#fda762"/>
<rect x="1347.51" y="223.98" width="6.6" height="10.9" fill="#fda862"/>
<rect x="1355.96" y="223.98" width="6.6" height="10.9" fill="#fda45d"/>
<rect x="1364.41" y="223.98" width="6.6" height="10.9" fill="#fda057"/>
<rect x="1372.86" y="223.98" width="6.6" height="10.9" fill="#fda158"/>
<rect x="1381.32" y="223.98" width="6.6" height="10.9" fill="#fda058"/>
<rect x="1389.77" y="223.98" width="6.6" height="10.9" fill="#fff0e0"/>
<rect x="1398.22" y="223.98" width="6.6" height="10.9" fill="#fff1e3"/>
<rect x="1406.67" y="223.98" width="6.6" height="10.9" fill="#fff3e7"/>
<rect x="1415.12" y="223.98" width="6.6" height="10.9" fill="#fff4e8"/>
<rect x="1423.58" y="223.98" width="6.6" height="10.9" fill="#fee8d1"/>
<rect x="1432.03" y="223.98" width="6.6" height="10.9" fill="#fee5cd"/>
<rect x="1440.48" y="223.98" width="6.6" height="10.9" fill="#ffefe0"/>
<rect x="1448.93" y="223.98" width="6.6" height="10.9" fill="#feead5"/>
<rect x="1457.38" y="223.98" width="6.6" height="10.9" fill="#fff3e7"/>
<rect x="1465.84" y="223.98" width="6.6" height="10.9" fill="#feecda"/>
<rect x="1474.29" y="223.98" width="6.6" height="10.9" fill="#fd9c51"/>
<rect x="1482.74" y="223.98" width="6.6" height="10.9" fill="#fd9c51"/>
<rect x="1491.19" y="223.98" width="6.6" height="10.9" fill="#dd4d04"/>
<rect x="1499.64" y="223.98" width="6.6" height="10.9" fill="#df5106"/>
<rect x="1508.10" y="223.98" width="6.6" height="10.9" fill="#db4b03"/>
<rect x="1516.55" y="223.98" width="6.6" height="10.9" fill="#e45709"/>
<rect x="1525.00" y="223.98" width="6.6" height="10.9" fill="#e25508"/>
<rect x="1533.45" y="223.98" width="6.6" height="10.9" fill="#e35608"/>
<rect x="1541.90" y="223.98" width="6.6" height="10.9" fill="#822804"/>
<rect x="1313.70" y="236.81" width="6.6" height="10.9" fill="#9a3103"/>
<rect x="1322.15" y="236.81" width="6.6" height="10.9" fill="#f26c17"/>
<rect x="1330.60" y="236.81" width="6.6" height="10.9" fill="#f06812"/>
<rect x="1339.06" y="236.81" width="6.6" height="10.9" fill="#fda863"/>
<rect x="1347.51" y="236.81" width="6.6" height="10.9" fill="#fda65f"/>
<rect x="1355.96" y="236.81" width="6.6" height="10.9" fill="#fda259"/>
<rect x="1364.41" y="236.81" width="6.6" height="10.9" fill="#fd9b4f"/>
<rect x="1372.86" y="236.81" width="6.6" height="10.9" fill="#fda25a"/>
<rect x="1381.32" y="236.81" width="6.6" height="10.9" fill="#fda35b"/>
<rect x="1389.77" y="236.81" width="6.6" height="10.9" fill="#feecda"/>
<rect x="1398.22" y="236.81" width="6.6" height="10.9" fill="#ffeede"/>
<rect x="1406.67" y="236.81" width="6.6" height="10.9" fill="#feebd7"/>
<rect x="1415.12" y="236.81" width="6.6" height="10.9" fill="#fee2c5"/>
<rect x="1423.58" y="236.81" width="6.6" height="10.9" fill="#fee2c6"/>
<rect x="1432.03" y="236.81" width="6.6" height="10.9" fill="#ffeede"/>
<rect x="1440.48" y="236.81" width="6.6" height="10.9" fill="#ffeede"/>
<rect x="1448.93" y="236.81" width="6.6" height="10.9" fill="#fee8d1"/>
<rect x="1457.38" y="236.81" width="6.6" height="10.9" fill="#fee1c5"/>
<rect x="1465.84" y="236.81" width="6.6" height="10.9" fill="#fee2c6"/>
<rect x="1474.29" y="236.81" width="6.6" height="10.9" fill="#fd9446"/>
<rect x="1482.74" y="236.81" width="6.6" height="10.9" fill="#fda158"/>
<rect x="1491.19" y="236.81" width="6.6" height="10.9" fill="#dd4d04"/>
<rect x="1499.64" y="236.81" width="6.6" height="10.9" fill="#dd4e04"/>
<rect x="1508.10" y="236.81" width="6.6" height="10.9" fill="#e15407"/>
<rect x="1516.55" y="236.81" width="6.6" height="10.9" fill="#db4b02"/>
<rect x="1525.00" y="236.81" width="6.6" height="10.9" fill="#de4f05"/>
<rect x="1533.45" y="236.81" width="6.6" height="10.9" fill="#df5005"/>
<rect x="1541.90" y="236.81" width="6.6" height="10.9" fill="#822804"/>
<rect x="1313.70" y="249.64" width="6.6" height="10.9" fill="#9a3103"/>
<rect x="1322.15" y="249.64" width="6.6" height="10.9" fill="#e75c0c"/>
<rect x="1330.60" y="249.64" width="6.6" height="10.9" fill="#e45709"/>
<rect x="1339.06" y="249.64" width="6.6" height="10.9" fill="#fd8c3b"/>
<rect x="1347.51" y="249.64" width="6.6" height="10.9" fill="#fb8634"/>
<rect x="1355.96" y="249.64" width="6.6" height="10.9" fill="#fc8a38"/>
<rect x="1364.41" y="249.64" width="6.6" height="10.9" fill="#fc8b3a"/>
<rect x="1372.86" y="249.64" width="6.6" height="10.9" fill="#fb8836"/>
<rect x="1381.32" y="249.64" width="6.6" height="10.9" fill="#fd9547"/>
<rect x="1389.77" y="249.64" width="6.6" height="10.9" fill="#fdb577"/>
<rect x="1398.22" y="249.64" width="6.6" height="10.9" fill="#fdb97d"/>
<rect x="1406.67" y="249.64" width="6.6" height="10.9" fill="#fdb97d"/>
<rect x="1415.12" y="249.64" width="6.6" height="10.9" fill="#fdaf6c"/>
<rect x="1423.58" y="249.64" width="6.6" height="10.9" fill="#fdac69"/>
<rect x="1432.03" y="249.64" width="6.6" height="10.9" fill="#fdba7f"/>
<rect x="1440.48" y="249.64" width="6.6" height="10.9" fill="#fdb272"/>
<rect x="1448.93" y="249.64" width="6.6" height="10.9" fill="#fdb576"/>
<rect x="1457.38" y="249.64" width="6.6" height="10.9" fill="#fdb87b"/>
<rect x="1465.84" y="249.64" width="6.6" height="10.9" fill="#fdaf6d"/>
<rect x="1474.29" y="249.64" width="6.6" height="10.9" fill="#fb8634"/>
<rect x="1482.74" y="249.64" width="6.6" height="10.9" fill="#f9812e"/>
<rect x="1491.19" y="249.64" width="6.6" height="10.9" fill="#d24601"/>
<rect x="1499.64" y="249.64" width="6.6" height="10.9" fill="#ce4401"/>
<rect x="1508.10" y="249.64" width="6.6" height="10.9" fill="#d34601"/>
<rect x="1516.55" y="249.64" width="6.6" height="10.9" fill="#d34601"/>
<rect x="1525.00" y="249.64" width="6.6" height="10.9" fill="#dc4c03"/>
<rect x="1533.45" y="249.64" width="6.6" height="10.9" fill="#d94801"/>
<rect x="1541.90" y="249.64" width="6.6" height="10.9" fill="#822804"/>
<rect x="1313.70" y="262.47" width="6.6" height="10.9" fill="#9a3103"/>
<rect x="1322.15" y="262.47" width="6.6" height="10.9" fill="#da4a02"/>
<rect x="1330.60" y="262.47" width="6.6" height="10.9" fill="#d04501"/>
<rect x="1339.06" y="262.47" width="6.6" height="10.9" fill="#df5106"/>
<rect x="1347.51" y="262.47" width="6.6" height="10.9" fill="#e35609"/>
<rect x="1355.96" y="262.47" width="6.6" height="10.9" fill="#e05206"/>
<rect x="1364.41" y="262.47" width="6.6" height="10.9" fill="#e6590a"/>
<rect x="1372.86" y="262.47" width="6.6" height="10.9" fill="#e15307"/>
<rect x="1381.32" y="262.47" width="6.6" height="10.9" fill="#e05206"/>
<rect x="1389.77" y="262.47" width="6.6" height="10.9" fill="#ed6410"/>
<rect x="1398.22" y="262.47" width="6.6" height="10.9" fill="#e75b0b"/>
<rect x="1406.67" y="262.47" width="6.6" height="10.9" fill="#ed6310"/>
<rect x="1415.12" y="262.47" width="6.6" height="10.9" fill="#e95e0d"/>
<rect x="1423.58" y="262.47" width="6.6" height="10.9" fill="#e6590a"/>
<rect x="1432.03" y="262.47" width="6.6" height="10.9" fill="#ec620f"/>
<rect x="1440.48" y="262.47" width="6.6" height="10.9" fill="#ec610f"/>
<rect x="1448.93" y="262.47" width="6.6" height="10.9" fill="#e6590b"/>
<rect x="1457.38" y="262.47" width="6.6" height="10.9" fill="#ea5f0e"/>
<rect x="1465.84" y="262.47" width="6.6" height="10.9" fill="#ea5f0e"/>
<rect x="1474.29" y="262.47" width="6.6" height="10.9" fill="#e15307"/>
<rect x="1482.74" y="262.47" width="6.6" height="10.9" fill="#db4b03"/>
<rect x="1491.19" y="262.47" width="6.6" height="10.9" fill="#ba3d02"/>
<rect x="1499.64" y="262.47" width="6.6" height="10.9" fill="#c44102"/>
<rect x="1508.10" y="262.47" width="6.6" height="10.9" fill="#ad3803"/>
<rect x="1516.55" y="262.47" width="6.6" height="10.9" fill="#be3e02"/>
<rect x="1525.00" y="262.47" width="6.6" height="10.9" fill="#b53b02"/>
<rect x="1533.45" y="262.47" width="6.6" height="10.9" fill="#b83c02"/>
<rect x="1322.15" y="275.30" width="6.6" height="10.9" fill="#892b04"/>
<rect x="1330.60" y="275.30" width="6.6" height="10.9" fill="#8b2c04"/>
<rect x="1339.06" y="275.30" width="6.6" height="10.9" fill="#8b2c04"/>
<rect x="1347.51" y="275.30" width="6.6" height="10.9" fill="#8f2d04"/>
<rect x="1355.96" y="275.30" width="6.6" height="10.9" fill="#8f2d04"/>
<rect x="1364.41" y="275.30" width="6.6" height="10.9" fill="#902d04"/>
<rect x="1372.86" y="275.30" width="6.6" height="10.9" fill="#902d04"/>
<rect x="1381.32" y="275.30" width="6.6" height="10.9" fill="#8a2b04"/>
<rect x="1389.77" y="275.30" width="6.6" height="10.9" fill="#8e2d04"/>
<rect x="1398.22" y="275.30" width="6.6" height="10.9" fill="#8f2d04"/>
<rect x="1406.67" y="275.30" width="6.6" height="10.9" fill="#882a04"/>
<rect x="1415.12" y="275.30" width="6.6" height="10.9" fill="#8e2d04"/>
<rect x="1423.58" y="275.30" width="6.6" height="10.9" fill="#8c2c04"/>
<rect x="1432.03" y="275.30" width="6.6" height="10.9" fill="#892b04"/>
<rect x="1440.48" y="275.30" width="6.6" height="10.9" fill="#8d2c04"/>
<rect x="1448.93" y="275.30" width="6.6" height="10.9" fill="#8d2c04"/>
<rect x="1457.38" y="275.30" width="6.6" height="10.9" fill="#8d2c04"/>
<rect x="1465.84" y="275.30" width="6.6" height="10.9" fill="#872a04"/>
<rect x="1474.29" y="275.30" width="6.6" height="10.9" fill="#8f2d04"/>
<rect x="1482.74" y="275.30" width="6.6" height="10.9" fill="#8a2b04"/>
<rect x="1491.19" y="275.30" width="6.6" height="10.9" fill="#8e2d04"/>
<rect x="1499.64" y="275.30" width="6.6" height="10.9" fill="#882b04"/>
<rect x="1508.10" y="275.30" width="6.6" height="10.9" fill="#8c2c04"/>
<rect x="1516.55" y="275.30" width="6.6" height="10.9" fill="#872a04"/>
<rect x="1525.00" y="275.30" width="6.6" height="10.9" fill="#8c2c04"/>
<rect x="1533.45" y="275.30" width="6.6" height="10.9" fill="#8d2c04"/>
<defs><linearGradient id="og" x1="0" x2="1" y1="0" y2="0"><stop offset="0.000" stop-color="#7f2704"/><stop offset="0.125" stop-color="#a63603"/><stop offset="0.250" stop-color="#d94801"/><stop offset="0.375" stop-color="#f16913"/><stop offset="0.500" stop-color="#fd8d3c"/><stop offset="0.625" stop-color="#fdae6b"/><stop offset="0.750" stop-color="#fdd0a2"/><stop offset="0.875" stop-color="#fee6ce"/><stop offset="1.000" stop-color="#fff5eb"/></linearGradient></defs>
<rect x="1306" y="331.3" width="241.8" height="5.4" fill="url(#og)"/>
<text x="1305.5" y="346.4" font-size="10.2" fill="#cfd1d4" stroke="#cfd1d4" stroke-width="0.34">1</text>
<text x="1381.5" y="346.4" text-anchor="middle" font-size="10.2" fill="#cfd1d4" stroke="#cfd1d4" stroke-width="0.34">100</text>
<text x="1456.5" y="346.4" text-anchor="middle" font-size="10.2" fill="#cfd1d4" stroke="#cfd1d4" stroke-width="0.34">200</text>
<text x="1555.5" y="346.4" text-anchor="end" font-size="10.2" fill="#cfd1d4" stroke="#cfd1d4" stroke-width="0.34">320</text>
<rect x="92.7" y="601.9" width="551.5" height="1" fill="#35373b"/>
<text x="88.0" y="605.2" text-anchor="end" font-size="10.7" fill="#cfd1d4" stroke="#cfd1d4" stroke-width="0.34">0</text>
<rect x="92.7" y="563.1" width="551.5" height="1" fill="#35373b"/>
<text x="88.0" y="566.4" text-anchor="end" font-size="10.7" fill="#cfd1d4" stroke="#cfd1d4" stroke-width="0.34">2</text>
<rect x="92.7" y="524.3" width="551.5" height="1" fill="#35373b"/>
<text x="88.0" y="527.6" text-anchor="end" font-size="10.7" fill="#cfd1d4" stroke="#cfd1d4" stroke-width="0.34">4</text>
<rect x="92.7" y="485.4" width="551.5" height="1" fill="#35373b"/>
<text x="88.0" y="488.7" text-anchor="end" font-size="10.7" fill="#cfd1d4" stroke="#cfd1d4" stroke-width="0.34">6</text>
<rect x="92.7" y="446.6" width="551.5" height="1" fill="#35373b"/>
<text x="88.0" y="449.9" text-anchor="end" font-size="10.7" fill="#cfd1d4" stroke="#cfd1d4" stroke-width="0.34">8</text>
<rect x="92.7" y="407.8" width="551.5" height="1" fill="#35373b"/>
<text x="88.0" y="411.1" text-anchor="end" font-size="10.7" fill="#cfd1d4" stroke="#cfd1d4" stroke-width="0.34">10</text>
<rect x="121.6" y="408.3" width="1" height="194.1" fill="#35373b"/>
<text x="122.1" y="618.8" text-anchor="middle" font-size="10.7" fill="#cfd1d4" textLength="26" lengthAdjust="spacingAndGlyphs" stroke="#cfd1d4" stroke-width="0.34">00:50</text>
<rect x="197.1" y="408.3" width="1" height="194.1" fill="#35373b"/>
<text x="197.6" y="618.8" text-anchor="middle" font-size="10.7" fill="#cfd1d4" textLength="26" lengthAdjust="spacingAndGlyphs" stroke="#cfd1d4" stroke-width="0.34">00:55</text>
<rect x="272.5" y="408.3" width="1" height="194.1" fill="#35373b"/>
<text x="273.0" y="618.8" text-anchor="middle" font-size="10.7" fill="#cfd1d4" textLength="26" lengthAdjust="spacingAndGlyphs" stroke="#cfd1d4" stroke-width="0.34">01:00</text>
<rect x="348.0" y="408.3" width="1" height="194.1" fill="#35373b"/>
<text x="348.5" y="618.8" text-anchor="middle" font-size="10.7" fill="#cfd1d4" textLength="26" lengthAdjust="spacingAndGlyphs" stroke="#cfd1d4" stroke-width="0.34">01:05</text>
<rect x="423.5" y="408.3" width="1" height="194.1" fill="#35373b"/>
<text x="424.0" y="618.8" text-anchor="middle" font-size="10.7" fill="#cfd1d4" textLength="26" lengthAdjust="spacingAndGlyphs" stroke="#cfd1d4" stroke-width="0.34">01:10</text>
<rect x="499.0" y="408.3" width="1" height="194.1" fill="#35373b"/>
<text x="499.5" y="618.8" text-anchor="middle" font-size="10.7" fill="#cfd1d4" textLength="26" lengthAdjust="spacingAndGlyphs" stroke="#cfd1d4" stroke-width="0.34">01:15</text>
<rect x="574.4" y="408.3" width="1" height="194.1" fill="#35373b"/>
<text x="574.9" y="618.8" text-anchor="middle" font-size="10.7" fill="#cfd1d4" textLength="26" lengthAdjust="spacingAndGlyphs" stroke="#cfd1d4" stroke-width="0.34">01:20</text>
<text x="742.5" y="417.0" text-anchor="end" font-size="10.7" fill="#33a2e5" textLength="17" lengthAdjust="spacingAndGlyphs" stroke="#33a2e5" stroke-width="0.55">min</text>
<text x="771.5" y="417.0" text-anchor="end" font-size="10.7" fill="#33a2e5" textLength="20" lengthAdjust="spacingAndGlyphs" stroke="#33a2e5" stroke-width="0.55">max</text>
<text x="802.0" y="417.0" text-anchor="end" font-size="10.7" fill="#33a2e5" textLength="22" lengthAdjust="spacingAndGlyphs" stroke="#33a2e5" stroke-width="0.55">total</text>
<rect x="664.0" y="432.7" width="13.4" height="3.7" rx="1.4" fill="#7eb26d"/>
<text x="685.6" y="436.9" font-size="10.7" fill="#cfd1d4" textLength="32" lengthAdjust="spacingAndGlyphs" stroke="#cfd1d4" stroke-width="0.34">Exploit</text>
<rect x="662.5" y="446.2" width="148.2" height="22.2" fill="#1a1c20"/>
<rect x="664.0" y="456.3" width="13.4" height="3.7" rx="1.4" fill="#e9b943"/>
<text x="685.6" y="460.5" font-size="10.7" fill="#cfd1d4" textLength="35" lengthAdjust="spacingAndGlyphs" stroke="#cfd1d4" stroke-width="0.34">Explore</text>
<text x="749.0" y="436.9" text-anchor="end" font-size="10.7" fill="#cfd1d4" stroke="#cfd1d4" stroke-width="0.34">1</text>
<text x="778.5" y="436.9" text-anchor="end" font-size="10.7" fill="#cfd1d4" stroke="#cfd1d4" stroke-width="0.34">8</text>
<text x="808.8" y="436.9" text-anchor="end" font-size="10.7" fill="#cfd1d4" stroke="#cfd1d4" stroke-width="0.34">18</text>
<text x="749.0" y="460.5" text-anchor="end" font-size="10.7" fill="#cfd1d4" stroke="#cfd1d4" stroke-width="0.34">1</text>
<text x="778.5" y="460.5" text-anchor="end" font-size="10.7" fill="#cfd1d4" stroke="#cfd1d4" stroke-width="0.34">2</text>
<text x="808.8" y="460.5" text-anchor="end" font-size="10.7" fill="#cfd1d4" stroke="#cfd1d4" stroke-width="0.34">5</text>
<rect x="870.2" y="407.8" width="589.5" height="1" fill="#35373b"/>
<text x="865.5" y="411.1" text-anchor="end" font-size="10.7" fill="#cfd1d4" stroke="#cfd1d4" stroke-width="0.34">1</text>
<rect x="870.2" y="456.3" width="589.5" height="1" fill="#35373b"/>
<text x="865.5" y="459.6" text-anchor="end" font-size="10.7" fill="#cfd1d4" stroke="#cfd1d4" stroke-width="0.34">0.500</text>
<rect x="870.2" y="504.9" width="589.5" height="1" fill="#35373b"/>
<text x="865.5" y="508.2" text-anchor="end" font-size="10.7" fill="#cfd1d4" stroke="#cfd1d4" stroke-width="0.34">0</text>
<rect x="870.2" y="553.4" width="589.5" height="1" fill="#35373b"/>
<text x="865.5" y="556.7" text-anchor="end" font-size="10.7" fill="#cfd1d4" stroke="#cfd1d4" stroke-width="0.34">-0.50</text>
<rect x="870.2" y="601.9" width="589.5" height="1" fill="#35373b"/>
<text x="865.5" y="605.2" text-anchor="end" font-size="10.7" fill="#cfd1d4" stroke="#cfd1d4" stroke-width="0.34">-1</text>
<rect x="900.4" y="408.3" width="1" height="194.1" fill="#35373b"/>
<text x="900.9" y="618.8" text-anchor="middle" font-size="10.7" fill="#cfd1d4" textLength="26" lengthAdjust="spacingAndGlyphs" stroke="#cfd1d4" stroke-width="0.34">00:50</text>
<rect x="981.2" y="408.3" width="1" height="194.1" fill="#35373b"/>
<text x="981.7" y="618.8" text-anchor="middle" font-size="10.7" fill="#cfd1d4" textLength="26" lengthAdjust="spacingAndGlyphs" stroke="#cfd1d4" stroke-width="0.34">00:55</text>
<rect x="1062.0" y="408.3" width="1" height="194.1" fill="#35373b"/>
<text x="1062.5" y="618.8" text-anchor="middle" font-size="10.7" fill="#cfd1d4" textLength="26" lengthAdjust="spacingAndGlyphs" stroke="#cfd1d4" stroke-width="0.34">01:00</text>
<rect x="1142.7" y="408.3" width="1" height="194.1" fill="#35373b"/>
<text x="1143.2" y="618.8" text-anchor="middle" font-size="10.7" fill="#cfd1d4" textLength="26" lengthAdjust="spacingAndGlyphs" stroke="#cfd1d4" stroke-width="0.34">01:05</text>
<rect x="1223.5" y="408.3" width="1" height="194.1" fill="#35373b"/>
<text x="1224.0" y="618.8" text-anchor="middle" font-size="10.7" fill="#cfd1d4" textLength="26" lengthAdjust="spacingAndGlyphs" stroke="#cfd1d4" stroke-width="0.34">01:10</text>
<rect x="1304.3" y="408.3" width="1" height="194.1" fill="#35373b"/>
<text x="1304.8" y="618.8" text-anchor="middle" font-size="10.7" fill="#cfd1d4" textLength="26" lengthAdjust="spacingAndGlyphs" stroke="#cfd1d4" stroke-width="0.34">01:15</text>
<rect x="1385.1" y="408.3" width="1" height="194.1" fill="#35373b"/>
<text x="1385.6" y="618.8" text-anchor="middle" font-size="10.7" fill="#cfd1d4" textLength="26" lengthAdjust="spacingAndGlyphs" stroke="#cfd1d4" stroke-width="0.34">01:20</text>
<text x="1156.0" y="489.3" text-anchor="middle" font-size="12.45" fill="#d8d9da" textLength="44" lengthAdjust="spacingAndGlyphs" stroke="#d8d9da" stroke-width="0.34">No data</text>
<text x="1505.0" y="416.8" text-anchor="end" font-size="10.7" fill="#33a2e5" textLength="17" lengthAdjust="spacingAndGlyphs" stroke="#33a2e5" stroke-width="0.55">min</text>
<text x="1534.3" y="416.8" text-anchor="end" font-size="10.7" fill="#33a2e5" textLength="20" lengthAdjust="spacingAndGlyphs" stroke="#33a2e5" stroke-width="0.55">max</text>
<text x="1564.5" y="416.8" text-anchor="end" font-size="10.7" fill="#33a2e5" textLength="22" lengthAdjust="spacingAndGlyphs" stroke="#33a2e5" stroke-width="0.55">total</text>
<rect x="125.0" y="838.5" width="676.1" height="1" fill="#35373b"/>
<text x="120.5" y="841.8" text-anchor="end" font-size="10.7" fill="#cfd1d4" stroke="#cfd1d4" stroke-width="0.34">0</text>
<rect x="125.0" y="806.5" width="676.1" height="1" fill="#35373b"/>
<text x="120.5" y="809.8" text-anchor="end" font-size="10.7" fill="#cfd1d4" stroke="#cfd1d4" stroke-width="0.34">0.250</text>
<rect x="125.0" y="774.5" width="676.1" height="1" fill="#35373b"/>
<text x="120.5" y="777.8" text-anchor="end" font-size="10.7" fill="#cfd1d4" stroke="#cfd1d4" stroke-width="0.34">0.500</text>
<rect x="125.0" y="742.6" width="676.1" height="1" fill="#35373b"/>
<text x="120.5" y="745.9" text-anchor="end" font-size="10.7" fill="#cfd1d4" stroke="#cfd1d4" stroke-width="0.34">0.750</text>
<rect x="125.0" y="710.6" width="676.1" height="1" fill="#35373b"/>
<text x="120.5" y="713.9" text-anchor="end" font-size="10.7" fill="#cfd1d4" stroke="#cfd1d4" stroke-width="0.34">1</text>
<rect x="125.0" y="678.6" width="676.1" height="1" fill="#35373b"/>
<text x="120.5" y="681.9" text-anchor="end" font-size="10.7" fill="#cfd1d4" stroke="#cfd1d4" stroke-width="0.34">1.25</text>
<rect x="160.6" y="679.1" width="1" height="159.9" fill="#35373b"/>
<text x="161.1" y="854.7" text-anchor="middle" font-size="10.7" fill="#cfd1d4" textLength="26" lengthAdjust="spacingAndGlyphs" stroke="#cfd1d4" stroke-width="0.34">00:50</text>
<rect x="253.1" y="679.1" width="1" height="159.9" fill="#35373b"/>
<text x="253.6" y="854.7" text-anchor="middle" font-size="10.7" fill="#cfd1d4" textLength="26" lengthAdjust="spacingAndGlyphs" stroke="#cfd1d4" stroke-width="0.34">00:55</text>
<rect x="345.5" y="679.1" width="1" height="159.9" fill="#35373b"/>
<text x="346.0" y="854.7" text-anchor="middle" font-size="10.7" fill="#cfd1d4" textLength="26" lengthAdjust="spacingAndGlyphs" stroke="#cfd1d4" stroke-width="0.34">01:00</text>
<rect x="438.0" y="679.1" width="1" height="159.9" fill="#35373b"/>
<text x="438.5" y="854.7" text-anchor="middle" font-size="10.7" fill="#cfd1d4" textLength="26" lengthAdjust="spacingAndGlyphs" stroke="#cfd1d4" stroke-width="0.34">01:05</text>
<rect x="530.5" y="679.1" width="1" height="159.9" fill="#35373b"/>
<text x="531.0" y="854.7" text-anchor="middle" font-size="10.7" fill="#cfd1d4" textLength="26" lengthAdjust="spacingAndGlyphs" stroke="#cfd1d4" stroke-width="0.34">01:10</text>
<rect x="623.0" y="679.1" width="1" height="159.9" fill="#35373b"/>
<text x="623.5" y="854.7" text-anchor="middle" font-size="10.7" fill="#cfd1d4" textLength="26" lengthAdjust="spacingAndGlyphs" stroke="#cfd1d4" stroke-width="0.34">01:15</text>
<rect x="715.4" y="679.1" width="1" height="159.9" fill="#35373b"/>
<text x="715.9" y="854.7" text-anchor="middle" font-size="10.7" fill="#cfd1d4" textLength="26" lengthAdjust="spacingAndGlyphs" stroke="#cfd1d4" stroke-width="0.34">01:20</text>
<text transform="translate(85.8,764.7) rotate(-90)" text-anchor="middle" font-size="10.7" fill="#cfd1d4">Score</text>
<rect x="143.6" y="787.8" width="591.4" height="51.2" fill="#beb964" fill-opacity="0.18"/>
<rect x="143.6" y="718.8" width="591.4" height="72.9" fill="#7eb26d"/>
<polyline points="143.6,717.9 144.1,800.0 144.5,720.2 145.0,799.0 145.4,713.2 145.9,804.5 146.3,713.2 146.8,799.3 147.2,713.7 147.7,803.5 148.2,721.3 148.6,798.1 149.1,720.4 149.5,794.7 150.0,719.5 150.4,796.9 150.9,719.8 151.3,800.3 151.8,712.7 152.3,800.2 152.7,718.6 153.2,793.9 153.6,714.1 154.1,798.7 154.5,719.0 155.0,798.3 155.4,721.0 155.9,791.8 156.3,712.9 156.8,791.8 157.3,717.6 157.7,794.4 158.2,712.7 158.6,803.0 159.1,715.7 159.5,804.0 160.0,717.6 160.4,799.6 160.9,713.0 161.4,794.3 161.8,716.8 162.3,798.9 162.7,717.3 163.2,797.9 163.6,717.4 164.1,789.4 164.5,714.4 165.0,796.7 165.5,719.7 165.9,800.7 166.4,715.1 166.8,796.8 167.3,717.3 167.7,799.2 168.2,718.8 168.6,792.6 169.1,716.0 169.6,808.2 170.0,721.1 170.5,797.3 170.9,718.1 171.4,799.2 171.8,714.4 172.3,798.2 172.7,720.3 173.2,788.9 173.6,720.5 174.1,793.9 174.6,720.7 175.0,798.6 175.5,716.0 175.9,807.4 176.4,714.7 176.8,805.6 177.3,713.3 177.7,805.3 178.2,714.3 178.7,800.5 179.1,717.7 179.6,800.9 180.0,715.0 180.5,798.1 180.9,714.3 181.4,798.8 181.8,715.6 182.3,793.7 182.8,714.3 183.2,790.5 183.7,721.1 184.1,801.1 184.6,720.6 185.0,802.9 185.5,715.9 185.9,791.6 186.4,716.9 186.9,808.3 187.3,714.9 187.8,794.8 188.2,712.8 188.7,804.4 189.1,719.4 189.6,794.5 190.0,712.8 190.5,804.2 190.9,718.8 191.4,789.6 191.9,717.4 192.3,799.9 192.8,717.7 193.2,808.3 193.7,713.0 194.1,790.5 194.6,718.6 195.0,807.8 195.5,719.8 196.0,807.0 196.4,713.3 196.9,798.8 197.3,718.9 197.8,790.8 198.2,719.6 198.7,799.9 199.1,713.9 199.6,797.0 200.1,714.9 200.5,800.4 201.0,715.0 201.4,800.7 201.9,713.7 202.3,803.6 202.8,718.5 203.2,790.7 203.7,720.2 204.2,790.5 204.6,716.8 205.1,789.5 205.5,717.9 206.0,791.1 206.4,714.9 206.9,791.2 207.3,716.3 207.8,795.6 208.2,715.7 208.7,791.2 209.2,716.8 209.6,797.1 210.1,718.6 210.5,801.9 211.0,719.3 211.4,801.0 211.9,716.0 212.3,800.4 212.8,715.0 213.3,807.4 213.7,716.3 214.2,801.3 214.6,719.3 215.1,801.1 215.5,715.3 216.0,798.2 216.4,713.5 216.9,805.3 217.4,713.0 217.8,793.4 218.3,719.5 218.7,803.7 219.2,719.1 219.6,801.5 220.1,716.9 220.5,789.3 221.0,719.0 221.5,792.2 221.9,715.1 222.4,801.5 222.8,714.9 223.3,791.8 223.7,718.3 224.2,799.2 224.6,716.7 225.1,790.6 225.5,720.6 226.0,803.9 226.5,718.6 226.9,799.4 227.4,718.4 227.8,788.3 228.3,715.9 228.7,797.2 229.2,720.0 229.6,804.6 230.1,720.8 230.6,801.1 231.0,721.1 231.5,797.9 231.9,714.2 232.4,787.8 232.8,713.2 233.3,802.0 233.7,718.8 234.2,798.2 234.7,713.6 235.1,790.0 235.6,719.5 236.0,794.9 236.5,719.0 236.9,797.8 237.4,719.3 237.8,790.5 238.3,716.9 238.8,798.6 239.2,717.2 239.7,792.5 240.1,719.1 240.6,805.3 241.0,714.2 241.5,789.9 241.9,715.0 242.4,788.4 242.8,716.1 243.3,800.9 243.8,717.5 244.2,804.6 244.7,719.0 245.1,800.6 245.6,714.3 246.0,803.0 246.5,716.8 246.9,800.2 247.4,720.2 247.9,797.2 248.3,716.3 248.8,790.9 249.2,715.4 249.7,789.7 250.1,720.5 250.6,796.9 251.0,717.4 251.5,790.9 252.0,718.7 252.4,798.0 252.9,719.9 253.3,804.1 253.8,714.9 254.2,799.3 254.7,720.0 255.1,802.3 255.6,719.2 256.1,802.8 256.5,717.8 257.0,788.0 257.4,720.6 257.9,791.1 258.3,712.8 258.8,796.8 259.2,714.4 259.7,799.8 260.1,719.4 260.6,795.8 261.1,719.9 261.5,801.9 262.0,719.4 262.4,799.4 262.9,716.7 263.3,802.1 263.8,720.8 264.2,794.9 264.7,717.5 265.2,788.5 265.6,713.0 266.1,790.6 266.5,720.4 267.0,804.0 267.4,715.6 267.9,801.4 268.3,712.6 268.8,800.2 269.3,718.7 269.7,796.8 270.2,720.0 270.6,794.6 271.1,715.3 271.5,799.0 272.0,719.1 272.4,805.1 272.9,719.6 273.4,794.3 273.8,719.8 274.3,789.5 274.7,713.8 275.2,791.3 275.6,715.4 276.1,795.5 276.5,718.3 277.0,802.4 277.5,720.0 277.9,797.6 278.4,719.5 278.8,790.3 279.3,720.2 279.7,802.1 280.2,718.7 280.6,792.7 281.1,718.9 281.5,800.7 282.0,715.2 282.5,797.2 282.9,721.0 283.4,805.3 283.8,714.9 284.3,797.4 284.7,721.2 285.2,805.7 285.6,712.8 286.1,802.6 286.6,719.8 287.0,806.6 287.5,720.7 287.9,802.0 288.4,714.6 288.8,807.2 289.3,720.5 289.7,791.9 290.2,716.2 290.7,803.2 291.1,718.4 291.6,794.6 292.0,717.0 292.5,797.4 292.9,716.6 293.4,789.6 293.8,715.0 294.3,798.7 294.8,716.3 295.2,791.4 295.7,718.1 296.1,802.5 296.6,716.5 297.0,802.6 297.5,719.9 297.9,803.5 298.4,717.2 298.8,801.8 299.3,716.0 299.8,794.4 300.2,713.8 300.7,797.1 301.1,716.5 301.6,790.7 302.0,713.4 302.5,801.9 302.9,714.6 303.4,806.6 303.9,718.5 304.3,789.2 304.8,719.2 305.2,795.2 305.7,719.3 306.1,790.9 306.6,715.0 307.0,797.0 307.5,716.4 308.0,798.4 308.4,717.8 308.9,798.2 309.3,718.1 309.8,804.4 310.2,721.2 310.7,801.5 311.1,716.8 311.6,793.6 312.1,713.1 312.5,801.6 313.0,714.1 313.4,803.1 313.9,720.4 314.3,803.7 314.8,717.0 315.2,806.3 315.7,713.4 316.1,789.4 316.6,717.1 317.1,798.5 317.5,714.4 318.0,799.0 318.4,715.6 318.9,793.6 319.3,717.6 319.8,789.9 320.2,718.4 320.7,796.4 321.2,714.4 321.6,791.6 322.1,720.9 322.5,800.1 323.0,714.1 323.4,794.2 323.9,714.8 324.3,789.1 324.8,716.0 325.3,793.7 325.7,719.9 326.2,791.3 326.6,718.3 327.1,801.9 327.5,715.7 328.0,795.5 328.4,713.8 328.9,792.8 329.4,719.1 329.8,793.9 330.3,714.5 330.7,788.6 331.2,715.1 331.6,798.5 332.1,718.2 332.5,797.8 333.0,721.3 333.4,799.1 333.9,714.9 334.4,805.9 334.8,719.1 335.3,793.9 335.7,714.7 336.2,797.1 336.6,712.9 337.1,794.0 337.5,717.7 338.0,796.0 338.5,717.3 338.9,793.8 339.4,713.4 339.8,796.3 340.3,713.2 340.7,806.0 341.2,716.1 341.6,801.1 342.1,718.3 342.6,798.6 343.0,712.7 343.5,793.9 343.9,716.5 344.4,804.3 344.8,718.6 345.3,797.6 345.7,717.7 346.2,800.8 346.7,716.6 347.1,798.4 347.6,721.1 348.0,801.5 348.5,713.5 348.9,800.0 349.4,713.5 349.8,797.1 350.3,716.6 350.7,794.9 351.2,713.5 351.7,790.1 352.1,715.7 352.6,796.6 353.0,720.6 353.5,799.3 353.9,718.5 354.4,801.0 354.8,718.8 355.3,799.6 355.8,713.5 356.2,790.9 356.7,718.5 357.1,799.9 357.6,713.7 358.0,801.3 358.5,715.3 358.9,805.2 359.4,715.1 359.9,804.3 360.3,713.5 360.8,801.8 361.2,716.6 361.7,801.8 362.1,719.6 362.6,802.7 363.0,720.3 363.5,804.6 364.0,717.4 364.4,794.3 364.9,716.9 365.3,801.5 365.8,716.6 366.2,797.2 366.7,719.9 367.1,807.0 367.6,716.6 368.0,796.7 368.5,713.4 369.0,798.7 369.4,713.8 369.9,805.5 370.3,720.6 370.8,802.1 371.2,714.9 371.7,806.9 372.1,714.3 372.6,808.1 373.1,713.1 373.5,802.5 374.0,719.6 374.4,799.9 374.9,715.6 375.3,803.2 375.8,714.7 376.2,801.0 376.7,717.9 377.2,806.1 377.6,718.8 378.1,790.8 378.5,718.6 379.0,788.1 379.4,720.0 379.9,807.3 380.3,715.3 380.8,801.6 381.3,718.0 381.7,796.1 382.2,714.0 382.6,807.6 383.1,712.8 383.5,803.9 384.0,719.6 384.4,803.1 384.9,720.7 385.4,805.1 385.8,715.4 386.3,789.4 386.7,720.0 387.2,807.0 387.6,714.9 388.1,796.5 388.5,716.6 389.0,794.5 389.4,716.4 389.9,791.9 390.4,720.1 390.8,797.1 391.3,715.2 391.7,798.4 392.2,718.4 392.6,797.9 393.1,719.3 393.5,796.9 394.0,717.5 394.5,800.0 394.9,713.1 395.4,792.5 395.8,713.1 396.3,799.2 396.7,715.3 397.2,788.3 397.6,715.1 398.1,793.6 398.6,716.3 399.0,801.8 399.5,715.2 399.9,796.9 400.4,716.0 400.8,793.4 401.3,717.6 401.7,800.2 402.2,714.2 402.7,805.1 403.1,717.2 403.6,808.0 404.0,717.8 404.5,804.5 404.9,713.6 405.4,806.9 405.8,720.1 406.3,806.8 406.7,720.1 407.2,801.1 407.7,713.1 408.1,797.5 408.6,713.5 409.0,797.6 409.5,717.4 409.9,791.3 410.4,719.1 410.8,803.1 411.3,718.5 411.8,788.6 412.2,716.3 412.7,804.0 413.1,718.4 413.6,794.6 414.0,720.9 414.5,791.0 414.9,714.5 415.4,805.1 415.9,717.2 416.3,799.8 416.8,719.7 417.2,799.0 417.7,718.8 418.1,799.5 418.6,714.3 419.0,791.3 419.5,718.1 420.0,788.0 420.4,718.6 420.9,797.1 421.3,717.3 421.8,797.7 422.2,721.3 422.7,791.5 423.1,717.2 423.6,801.7 424.0,714.5 424.5,797.0 425.0,714.5 425.4,794.0 425.9,713.7 426.3,793.7 426.8,713.4 427.2,804.5 427.7,715.3 428.1,800.3 428.6,715.7 429.1,801.1 429.5,715.0 430.0,797.1 430.4,714.1 430.9,791.8 431.3,719.2 431.8,789.4 432.2,715.6 432.7,799.0 433.2,721.1 433.6,794.8 434.1,713.8 434.5,794.8 435.0,721.2 435.4,805.0 435.9,718.6 436.3,802.6 436.8,714.4 437.3,799.6 437.7,717.7 438.2,792.4 438.6,713.1 439.1,800.5 439.5,716.8 440.0,793.9 440.4,714.9 440.9,799.8 441.3,713.8 441.8,801.7 442.3,715.5 442.7,794.6 443.2,714.8 443.6,790.8 444.1,720.2 444.5,802.2 445.0,718.0 445.4,799.6 445.9,720.8 446.4,802.6 446.8,720.1 447.3,802.8 447.7,713.6 448.2,800.0 448.6,720.8 449.1,807.8 449.5,716.8 450.0,808.3 450.5,712.7 450.9,803.8 451.4,721.1 451.8,804.6 452.3,715.4 452.7,800.3 453.2,719.1 453.6,804.2 454.1,720.5 454.6,799.9 455.0,714.6 455.5,807.0 455.9,720.1 456.4,806.3 456.8,716.4 457.3,788.1 457.7,713.5 458.2,792.1 458.6,716.7 459.1,799.6 459.6,716.6 460.0,798.3 460.5,720.1 460.9,804.3 461.4,713.6 461.8,789.1 462.3,714.9 462.7,803.1 463.2,716.4 463.7,789.4 464.1,720.5 464.6,790.7 465.0,718.7 465.5,802.7 465.9,714.9 466.4,801.0 466.8,717.8 467.3,797.8 467.8,716.2 468.2,801.1 468.7,714.1 469.1,788.5 469.6,713.4 470.0,803.4 470.5,719.0 470.9,806.9 471.4,719.6 471.9,804.7 472.3,717.7 472.8,803.3 473.2,716.2 473.7,801.7 474.1,720.2 474.6,800.6 475.0,716.3 475.5,808.3 475.9,718.0 476.4,792.4 476.9,715.9 477.3,787.9 477.8,717.9 478.2,794.8 478.7,719.5 479.1,804.0 479.6,713.1 480.0,790.2 480.5,719.6 481.0,802.2 481.4,720.2 481.9,793.9 482.3,716.3 482.8,800.8 483.2,719.1 483.7,790.6 484.1,713.5 484.6,793.0 485.1,717.0 485.5,797.3 486.0,716.8 486.4,804.2 486.9,714.7 487.3,803.6 487.8,713.8 488.2,804.8 488.7,716.2 489.2,797.6 489.6,714.9 490.1,804.8 490.5,720.4 491.0,790.7 491.4,718.1 491.9,799.6 492.3,721.1 492.8,797.8 493.2,716.9 493.7,798.9 494.2,720.5 494.6,804.8 495.1,713.9 495.5,805.9 496.0,721.2 496.4,806.8 496.9,718.3 497.3,807.3 497.8,715.6 498.3,790.9 498.7,714.8 499.2,792.6 499.6,714.2 500.1,807.2 500.5,714.8 501.0,801.3 501.4,713.1 501.9,794.4 502.4,716.5 502.8,799.4 503.3,713.8 503.7,797.5 504.2,714.1 504.6,799.0 505.1,714.4 505.5,797.3 506.0,719.1 506.5,804.5 506.9,719.8 507.4,797.7 507.8,718.7 508.3,801.1 508.7,717.5 509.2,806.6 509.6,721.1 510.1,800.8 510.6,720.1 511.0,792.8 511.5,716.4 511.9,804.5 512.4,719.2 512.8,807.5 513.3,714.6 513.7,801.5 514.2,712.9 514.6,795.1 515.1,713.3 515.6,791.4 516.0,718.2 516.5,797.4 516.9,718.0 517.4,799.6 517.8,713.1 518.3,807.1 518.7,717.9 519.2,788.7 519.7,720.0 520.1,804.5 520.6,713.0 521.0,791.0 521.5,718.6 521.9,806.7 522.4,714.1 522.8,797.8 523.3,718.7 523.8,801.8 524.2,719.9 524.7,799.4 525.1,718.9 525.6,797.3 526.0,717.8 526.5,798.4 526.9,712.8 527.4,792.2 527.9,719.2 528.3,807.4 528.8,721.0 529.2,793.7 529.7,713.2 530.1,791.7 530.6,716.7 531.0,804.6 531.5,720.1 531.9,798.4 532.4,720.3 532.9,798.4 533.3,720.7 533.8,794.2 534.2,719.8 534.7,797.9 535.1,720.3 535.6,788.1 536.0,720.7 536.5,803.5 537.0,717.1 537.4,803.2 537.9,718.0 538.3,796.9 538.8,713.2 539.2,795.1 539.7,712.7 540.1,794.0 540.6,719.9 541.1,795.8 541.5,718.3 542.0,799.4 542.4,720.7 542.9,807.1 543.3,717.8 543.8,805.0 544.2,716.3 544.7,802.3 545.2,716.2 545.6,801.0 546.1,720.3 546.5,802.2 547.0,713.0 547.4,789.2 547.9,712.9 548.3,797.5 548.8,715.8 549.2,789.3 549.7,715.1 550.2,798.1 550.6,717.7 551.1,793.5 551.5,718.1 552.0,797.3 552.4,714.8 552.9,798.1 553.3,715.8 553.8,791.7 554.3,715.8 554.7,794.3 555.2,717.9 555.6,802.8 556.1,713.0 556.5,797.5 557.0,712.7 557.4,806.6 557.9,716.9 558.4,788.2 558.8,713.2 559.3,806.6 559.7,719.8 560.2,807.7 560.6,716.3 561.1,788.2 561.5,716.5 562.0,798.1 562.5,714.9 562.9,798.7 563.4,713.7 563.8,800.8 564.3,716.6 564.7,797.7 565.2,718.5 565.6,789.5 566.1,721.1 566.5,801.3 567.0,713.8 567.5,794.8 567.9,715.3 568.4,804.3 568.8,719.5 569.3,807.2 569.7,719.0 570.2,801.9 570.6,718.9 571.1,800.2 571.6,717.6 572.0,804.8 572.5,713.8 572.9,796.3 573.4,716.3 573.8,794.6 574.3,718.7 574.7,798.4 575.2,715.2 575.7,803.2 576.1,714.4 576.6,800.0 577.0,716.2 577.5,799.0 577.9,719.2 578.4,798.9 578.8,712.7 579.3,797.0 579.8,719.5 580.2,803.9 580.7,713.6 581.1,802.7 581.6,720.5 582.0,788.9 582.5,716.9 582.9,803.5 583.4,715.6 583.8,804.3 584.3,720.9 584.8,803.2 585.2,719.2 585.7,792.7 586.1,713.1 586.6,791.0 587.0,713.7 587.5,806.3 587.9,717.2 588.4,805.2 588.9,713.3 589.3,792.9 589.8,719.1 590.2,806.9 590.7,717.7 591.1,798.5 591.6,721.1 592.0,797.4 592.5,713.2 593.0,790.3 593.4,718.1 593.9,791.4 594.3,719.3 594.8,798.7 595.2,713.6 595.7,790.7 596.1,721.0 596.6,801.1 597.1,717.7 597.5,801.6 598.0,714.3 598.4,803.5 598.9,717.4 599.3,797.9 599.8,720.6 600.2,798.5 600.7,717.1 601.1,804.4 601.6,715.8 602.1,794.4 602.5,721.2 603.0,797.8 603.4,721.3 603.9,797.5 604.3,715.4 604.8,793.8 605.2,713.2 605.7,801.3 606.2,714.9 606.6,792.4 607.1,714.0 607.5,791.6 608.0,715.5 608.4,800.3 608.9,717.3 609.3,797.0 609.8,718.0 610.3,805.3 610.7,716.7 611.2,807.6 611.6,720.2 612.1,800.9 612.5,712.8 613.0,807.8 613.4,718.7 613.9,798.9 614.4,714.6 614.8,803.9 615.3,719.7 615.7,800.4 616.2,718.2 616.6,797.4 617.1,712.9 617.5,800.9 618.0,714.4 618.5,789.3 618.9,717.0 619.4,798.6 619.8,719.6 620.3,803.9 620.7,715.9 621.2,804.2 621.6,719.5 622.1,804.6 622.5,716.9 623.0,800.4 623.5,720.0 623.9,799.5 624.4,712.8 624.8,791.6 625.3,716.1 625.7,796.9 626.2,719.6 626.6,799.9 627.1,720.3 627.6,807.9 628.0,713.3 628.5,806.9 628.9,720.2 629.4,791.5 629.8,720.2 630.3,800.4 630.7,716.8 631.2,794.3 631.7,713.5 632.1,806.4 632.6,718.5 633.0,799.1 633.5,719.8 633.9,805.8 634.4,715.3 634.8,802.0 635.3,718.4 635.8,794.0 636.2,718.5 636.7,805.8 637.1,719.0 637.6,804.0 638.0,718.4 638.5,803.5 638.9,718.6 639.4,796.9 639.8,712.9 640.3,794.9 640.8,719.2 641.2,797.6 641.7,716.5 642.1,801.8 642.6,718.4 643.0,800.7 643.5,718.0 643.9,794.5 644.4,716.1 644.9,798.5 645.3,721.0 645.8,798.4 646.2,719.7 646.7,806.1 647.1,718.1 647.6,802.2 648.0,717.1 648.5,791.9 649.0,719.5 649.4,793.0 649.9,717.3 650.3,790.4 650.8,717.7 651.2,789.8 651.7,712.7 652.1,803.1 652.6,716.2 653.1,788.3 653.5,717.9 654.0,798.3 654.4,719.4 654.9,797.0 655.3,715.4 655.8,801.9 656.2,717.7 656.7,798.4 657.1,712.9 657.6,798.1 658.1,717.4 658.5,799.1 659.0,720.6 659.4,795.0 659.9,720.0 660.3,792.6 660.8,714.3 661.2,795.9 661.7,714.9 662.2,790.6 662.6,713.2 663.1,797.6 663.5,719.0 664.0,788.6 664.4,713.6 664.9,800.5 665.3,719.1 665.8,798.1 666.3,720.8 666.7,795.3 667.2,717.2 667.6,796.3 668.1,715.1 668.5,790.9 669.0,717.0 669.4,805.1 669.9,714.5 670.4,800.3 670.8,714.1 671.3,798.7 671.7,715.8 672.2,788.2 672.6,713.8 673.1,802.6 673.5,719.3 674.0,807.9 674.4,717.7 674.9,801.0 675.4,718.1 675.8,794.0 676.3,720.3 676.7,797.6 677.2,717.4 677.6,790.3 678.1,720.6 678.5,799.4 679.0,714.3 679.5,801.9 679.9,716.7 680.4,795.0 680.8,720.2 681.3,796.5 681.7,719.6 682.2,797.9 682.6,719.1 683.1,800.5 683.6,720.2 684.0,808.1 684.5,715.5 684.9,797.8 685.4,716.6 685.8,797.8 686.3,719.2 686.7,798.7 687.2,714.7 687.7,790.6 688.1,720.3 688.6,798.0 689.0,716.9 689.5,804.1 689.9,717.2 690.4,802.6 690.8,716.8 691.3,800.1 691.7,717.8 692.2,800.4 692.7,712.9 693.1,804.7 693.6,714.8 694.0,808.1 694.5,716.7 694.9,792.8 695.4,712.9 695.8,798.7 696.3,718.4 696.8,789.2 697.2,716.0 697.7,799.1 698.1,719.0 698.6,799.8 699.0,716.9 699.5,798.9 699.9,719.6 700.4,799.5 700.9,717.0 701.3,801.3 701.8,714.2 702.2,803.4 702.7,716.9 703.1,795.1 703.6,717.8 704.0,797.5 704.5,717.8 705.0,788.1 705.4,713.7 705.9,800.6 706.3,717.1 706.8,789.9 707.2,715.2 707.7,807.7 708.1,718.2 708.6,800.4 709.0,715.2 709.5,803.0 710.0,715.9 710.4,797.2 710.9,718.9 711.3,802.5 711.8,716.0 712.2,800.3 712.7,718.5 713.1,799.9 713.6,718.6 714.1,792.0 714.5,719.5 715.0,805.7 715.4,719.1 715.9,799.2 716.3,716.4 716.8,806.9 717.2,715.1 717.7,796.3 718.2,719.2 718.6,798.1 719.1,721.0 719.5,797.3 720.0,716.7 720.4,800.4 720.9,713.1 721.3,796.8 721.8,718.5 722.3,804.7 722.7,721.1 723.2,804.9 723.6,713.9 724.1,797.6 724.5,715.4 725.0,795.7 725.4,719.1 725.9,798.8 726.3,715.9 726.8,804.1 727.3,719.8 727.7,797.1 728.2,717.3 728.6,800.9 729.1,718.7 729.5,791.7 730.0,718.5 730.4,800.7 730.9,713.7 731.4,805.8 731.8,713.5 732.3,804.8 732.7,720.8 733.2,802.1 733.6,715.1 734.1,798.4 734.5,715.0 735.0,796.8" fill="none" stroke="#7eb26d" stroke-width="1.2" stroke-linejoin="round"/>
<path d="M545.4 776.9V736.4M542.6 773.4V724.0M544.0 772.3V742.6M544.8 774.5V729.8M544.1 767.4V724.7M478.6 790.7V724.6M478.9 793.3V737.2M437.7 773.2V749.0M437.5 774.7V750.7M438.3 780.4V744.2M438.5 772.4V743.2M310.8 764.6V726.1M313.3 762.1V713.0M312.5 764.8V719.8M311.2 785.2V726.6M490.8 780.9V717.8M664.3 777.1V725.2M667.4 786.5V735.3M664.7 775.2V730.4M585.5 802.5V728.7M586.1 790.7V719.2M587.0 789.6V736.7M586.5 792.3V727.0M589.5 794.8V725.1M255.6 771.0V722.0M255.9 784.9V722.7M255.9 783.2V713.0M256.2 772.6V713.0M256.9 774.3V719.1M257.6 774.7V719.1M228.1 776.0V725.7M227.7 787.9V713.5M165.1 783.5V740.8M446.7 782.1V730.2M447.3 790.4V726.3M446.9 780.2V739.8M448.1 801.4V725.0M448.6 780.2V737.7M445.3 786.8V730.5M520.1 763.9V728.3M519.5 785.3V735.5M426.5 774.8V721.1M425.1 781.4V729.2M425.5 771.7V735.0M427.7 773.4V739.1M424.2 792.0V732.9M424.6 759.5V726.2M692.0 766.2V730.0M689.5 771.0V728.4M200.8 767.1V727.1M201.6 780.7V719.7M204.8 771.7V721.1M205.3 765.9V717.5M201.7 774.0V713.0M202.7 774.5V728.3M682.4 738.3V724.4M314.3 777.5V730.6M568.8 768.3V737.8M569.0 777.4V736.8M571.4 757.4V729.5M456.8 779.8V741.1M456.9 783.0V737.1M460.3 779.6V731.1M460.0 784.6V730.5M457.8 792.7V746.7M459.0 785.4V740.1M235.3 784.6V748.4M237.9 778.0V740.7M238.5 774.6V733.5M236.9 782.9V747.3M646.6 766.1V750.7M212.0 787.7V713.8M209.8 789.6V731.0M610.6 770.0V734.6M611.9 771.9V743.2M609.1 771.9V746.8M610.2 769.1V744.1M609.5 756.7V736.0M599.3 793.0V741.4M597.6 790.2V733.3M503.6 754.2V721.1M502.6 755.7V738.9M502.9 763.7V715.0M505.6 763.4V719.9M147.6 787.9V713.0M146.8 785.0V713.0M149.6 788.8V713.0M147.0 781.2V716.3M147.2 783.6V713.0M147.4 789.2V713.0M574.4 768.4V734.7M571.6 763.8V729.6M574.4 769.6V722.6M574.3 767.3V735.8M254.0 769.1V738.9M254.5 764.1V744.3M255.5 768.9V743.5M254.5 772.6V742.4M265.8 802.5V722.4M265.8 802.5V727.2M264.4 801.2V713.0M266.4 800.0V736.8M206.1 779.6V734.1M205.4 774.7V729.4M207.0 770.2V723.5M207.4 767.2V732.3M456.4 759.6V746.0M454.4 773.9V723.3M456.7 765.9V729.2M449.3 780.0V735.8M370.3 770.2V736.3M373.3 778.7V750.5M372.1 787.5V745.8M371.9 780.8V739.0M639.2 765.5V713.9M639.6 767.0V715.4M638.3 754.0V729.3M637.2 768.5V720.2M404.0 773.2V729.9M407.6 778.9V726.9M407.3 777.8V733.8M407.1 781.1V724.4M355.8 782.0V736.5M353.7 782.4V751.7M353.8 783.0V727.4M353.4 784.8V745.6M354.4 792.2V726.7M353.0 784.9V719.5M352.8 781.8V727.1M353.6 773.0V726.0M393.3 796.5V717.4M254.5 772.2V745.5M253.6 759.1V728.9M253.2 755.4V727.0M546.0 766.5V732.0M546.2 760.1V742.1M546.1 758.4V741.9M460.7 774.4V713.0M459.4 773.3V714.9M349.5 787.9V735.2M349.3 779.3V742.0M352.6 778.8V728.9M351.7 785.8V750.0M347.8 780.6V762.4M349.5 796.3V745.8M275.2 770.3V740.9M275.3 779.9V745.8M275.1 790.3V742.1M729.8 782.2V729.5M729.8 776.3V744.3M729.1 775.7V733.7M729.1 775.0V737.7M732.1 778.2V742.4M727.8 775.7V726.1M647.1 775.7V753.5M567.5 760.1V736.0M570.4 763.9V741.3M569.1 769.9V750.5M598.1 763.6V728.6M351.7 789.5V733.7M525.6 774.8V749.0M524.5 768.9V747.0M525.8 767.3V752.5M528.3 773.9V751.1M528.0 770.6V752.5M570.5 784.7V713.0M569.9 791.1V713.0M569.2 785.0V713.0M570.6 789.7V721.0M571.5 785.7V720.7M667.4 787.5V730.4M668.8 786.7V743.9M667.5 778.1V744.7M666.7 780.5V739.0M666.5 787.5V737.9M668.6 774.9V729.0M224.8 770.0V739.7M225.0 772.7V742.5M224.6 767.7V728.3M229.1 769.9V731.4M225.3 766.4V740.4M447.7 777.3V746.7M447.8 788.9V738.5M446.9 796.3V745.6M447.8 783.4V747.4M447.4 785.0V741.4M320.7 775.6V745.5M674.4 781.6V717.7M213.2 775.6V735.9M211.3 784.2V732.6M465.7 786.3V733.4M227.1 782.1V753.3M226.8 763.1V742.2M226.0 787.2V742.7M229.0 778.0V740.1M227.4 793.1V754.9M534.1 773.9V734.2M531.2 778.1V744.5M529.3 792.8V745.1M399.0 777.7V728.2M399.4 778.6V723.3M546.0 768.2V714.4M545.0 774.6V713.0M285.6 785.0V730.9M289.4 768.1V725.3M288.5 777.2V736.5M285.7 769.8V725.6M288.1 775.7V721.2M287.1 765.4V727.2M566.0 770.0V741.1M567.4 779.8V734.2M563.1 769.6V726.8M566.2 760.7V727.8M565.5 761.0V731.1M214.7 792.0V731.7M214.5 802.5V727.2M431.5 784.0V735.6M431.4 784.0V743.7M432.4 779.6V747.6M318.7 772.0V754.7M320.0 771.3V752.8M319.9 781.3V732.1M320.3 773.3V737.4M660.3 773.4V748.2M658.8 774.1V750.7M658.9 781.0V744.7M661.0 781.0V753.6M659.8 782.9V744.2M678.6 782.7V715.0M678.5 790.0V715.8M680.2 790.2V724.7M680.6 778.3V722.5M679.9 795.7V720.6M680.6 783.6V724.6M697.3 771.5V740.8M701.6 779.7V716.9M700.2 777.0V719.1M701.0 776.3V715.6M699.6 775.5V725.2M701.2 784.3V713.0M644.6 787.4V713.0M643.8 777.2V716.0M643.9 779.4V713.0M645.0 786.9V713.0M642.8 785.5V713.0M541.9 778.7V732.7M540.3 772.0V720.2M539.6 778.3V717.9M721.2 772.0V724.3M720.9 783.5V724.5M719.4 784.3V723.9M721.2 769.6V724.0M721.3 770.9V730.7M723.1 778.0V732.9M309.6 765.9V738.8M310.2 762.0V743.2M312.0 775.5V743.3M310.5 766.1V741.7M311.6 766.1V740.4M189.6 778.7V713.0M186.0 782.6V724.4M188.8 786.1V727.4M188.1 786.7V726.7M187.7 787.7V725.6M555.8 780.7V739.4M460.3 771.7V747.1M201.9 776.5V744.2M261.1 784.4V728.5M260.9 777.3V740.6M259.9 783.8V744.9M260.8 770.5V738.0M464.2 800.9V725.2M460.7 787.9V716.0M428.0 773.6V735.5M426.9 778.3V748.1M662.4 776.8V729.3M270.8 776.5V730.6M269.9 785.1V736.8M271.8 786.0V741.0M372.2 786.9V734.3M375.2 779.6V729.0M374.6 792.4V723.1M373.5 779.2V730.0M372.5 771.8V749.4M371.8 782.6V736.9M712.2 774.8V759.1M713.0 766.5V727.2M714.0 764.1V750.0M711.6 769.8V742.1M501.0 761.8V717.4M502.9 772.9V719.5M502.0 775.2V714.9M504.0 786.7V713.0M392.0 770.0V737.2M392.9 772.9V744.6M392.4 769.3V734.2M391.8 780.1V744.0M390.1 778.5V730.2M390.8 763.2V740.9M396.2 792.6V734.7M395.1 787.9V730.9M398.3 769.4V727.4M397.5 789.9V739.0M398.8 790.7V725.3M685.8 776.7V730.8M601.8 773.8V736.4M603.5 773.0V733.2M604.5 769.6V746.5M605.4 762.9V740.4M602.5 770.2V742.2M324.2 775.1V744.5M734.0 782.8V713.0M731.8 771.9V716.8M729.9 768.3V713.0M732.2 788.7V713.0M732.9 777.6V724.9M255.9 770.6V719.0M253.5 773.1V728.9M257.0 778.7V725.9M254.6 770.5V724.6M258.9 769.3V732.7M554.2 772.9V716.4M555.4 776.8V727.0M553.1 784.3V719.2M438.1 776.1V735.1M436.0 796.2V748.7M268.3 779.6V742.8M269.2 772.4V743.7M268.9 771.5V734.9M270.5 766.3V739.9M268.8 768.0V739.8M478.5 783.9V729.9M479.6 798.8V733.4M478.4 790.2V729.5M478.5 789.8V717.2M478.5 797.7V724.0M463.3 768.7V747.8M673.3 768.1V747.9M671.2 760.0V740.7M460.5 772.5V745.7M462.0 773.5V735.3M459.7 776.7V725.9M458.6 783.8V741.1M461.2 781.6V730.1M598.1 790.5V717.8M491.2 768.6V744.7M491.6 780.2V743.2M493.7 768.0V739.5M492.8 763.2V743.0M439.1 783.4V743.9M440.2 784.3V744.1M440.5 777.6V760.3M477.4 779.4V732.2M476.0 764.2V736.7M160.1 788.4V726.7M160.6 776.1V723.9M159.8 777.9V733.3M158.5 776.1V737.8M159.4 785.7V733.9M349.4 785.3V730.8M352.4 790.6V743.1M354.8 790.1V747.0M383.4 771.5V730.3M506.9 781.0V728.3M509.0 778.6V721.5M506.0 774.5V717.2M507.7 776.3V729.9M507.7 778.9V731.0M582.6 773.0V758.2M581.8 768.8V753.0M599.1 780.8V727.2M594.6 777.7V733.8M594.3 766.5V723.4M633.9 775.4V737.3M598.1 791.5V738.9M341.8 770.8V731.3M344.2 767.6V721.9M343.9 778.9V725.3M341.6 776.2V730.8M337.1 772.8V742.5M335.5 761.6V748.2M336.4 767.4V734.9M336.6 776.4V729.6M616.6 780.2V743.6M615.2 790.9V734.9M615.0 775.7V733.8M616.0 774.1V736.9M615.1 787.4V749.8M529.8 768.0V732.8M526.0 760.2V740.3M530.1 776.1V736.3M528.0 773.0V738.8M526.7 782.1V737.3M342.8 769.5V736.7M344.3 762.9V726.5M354.8 773.6V713.0M357.4 773.6V714.5M181.4 799.5V747.9M184.1 798.3V753.9M183.4 789.9V753.7M182.3 802.2V752.0M183.9 802.5V741.3M182.9 799.0V738.3M162.5 789.1V753.6M161.6 778.5V748.2M160.8 768.1V753.4M160.9 777.1V743.5M246.7 766.4V724.9M598.5 775.6V747.5M600.3 774.6V742.5M599.0 786.3V728.3M598.9 770.8V730.1M633.7 793.4V728.1M632.0 782.8V745.3M561.4 777.9V749.1M565.0 773.4V737.2M562.7 776.8V750.8M564.1 773.5V737.3M561.6 787.8V741.4M561.1 785.2V754.6M225.3 786.6V738.4M227.0 777.7V731.5M225.5 794.5V740.8M644.3 790.3V756.9M648.0 780.9V742.0M649.0 791.1V741.9M646.9 787.7V743.1M401.0 777.1V731.9M228.5 802.5V718.3M228.2 789.4V714.5M603.8 793.9V752.2M601.6 802.5V757.6M602.6 790.4V751.3M603.1 802.5V753.3M603.8 791.6V756.7M402.7 774.0V740.8M400.0 778.5V751.3M398.9 779.2V731.8M401.2 776.6V735.0M399.7 773.3V742.6M399.8 769.8V747.1M425.8 791.3V717.2M191.8 770.8V733.5M192.9 759.5V738.0M285.1 783.3V750.9M278.9 782.0V746.8M283.6 777.1V753.3M705.8 784.3V736.3M703.5 785.8V732.1M704.2 790.0V742.1M703.4 770.7V733.6M706.9 777.5V748.0M231.8 785.6V743.6M506.2 770.3V728.3M507.8 759.9V728.4M611.9 768.0V730.8M613.2 772.2V735.3M613.3 769.1V734.9M612.8 787.8V742.4M616.1 763.3V737.9" fill="none" stroke="#e9b943" stroke-width="1.05"/>
<path d="M508.0 762.0V713.0M509.4 752.7V713.0M167.3 752.3V734.2M167.1 763.8V739.3M165.5 767.7V755.2M475.9 762.0V745.0M475.0 770.6V752.1M474.4 762.0V729.6M475.7 763.7V738.8M724.8 764.8V744.5M724.9 761.1V731.8M722.9 767.1V737.8M375.8 778.1V734.3M374.1 759.6V720.9M374.2 768.8V721.3M373.2 763.1V713.0M338.6 777.5V738.2M338.8 783.0V740.6M338.9 775.8V741.1M336.8 796.5V733.2M337.6 783.5V713.0M510.8 776.4V740.2M509.2 773.7V749.5M510.6 778.8V755.1M510.7 772.5V744.2M428.2 794.1V727.9M428.5 803.4V749.4M178.0 770.2V743.0M177.8 785.9V741.1M602.2 794.0V738.0M600.6 785.4V738.5M625.8 744.1V713.0M625.3 737.3V713.0M363.1 773.5V741.7M365.0 780.0V743.6M364.7 784.0V761.9M364.4 773.6V737.9M684.4 766.9V737.2M684.7 764.0V722.0M724.6 767.1V713.0M723.7 760.4V713.0M725.2 755.4V713.0M724.0 761.6V714.5M173.0 764.8V742.2M537.3 731.5V713.0M541.4 740.4V713.0M537.3 732.2V713.0M258.9 739.1V713.0M442.8 759.2V727.0M442.4 760.1V729.1M445.1 766.2V732.7M550.9 748.4V729.7M548.9 745.9V721.1M552.7 737.2V715.0M548.4 746.9V720.7M442.3 790.8V750.6M444.5 793.3V765.7M442.5 777.4V744.8M618.0 781.8V751.5M241.3 785.8V735.6M308.1 796.4V764.1M307.7 795.0V765.8M309.4 799.2V754.1M306.3 792.7V756.7M204.0 791.9V767.0M202.3 799.6V774.6M208.1 778.0V755.3M616.0 790.7V734.1M614.9 781.4V735.8M613.5 785.9V745.2M613.9 781.6V727.2M480.6 750.2V713.0M480.2 749.6V713.0M482.2 752.7V713.0M276.1 783.1V717.4M276.1 769.5V713.0M275.2 778.4V718.4M338.0 793.8V768.8M336.3 785.2V766.0M355.1 754.6V713.0M356.6 754.4V713.0M357.2 753.8V713.0M356.6 747.9V713.0M510.6 774.8V713.0M523.1 773.7V718.8M520.3 768.2V713.0M520.4 772.0V721.8M518.7 773.2V723.8M595.7 786.0V749.3M596.6 778.2V742.0M596.7 785.0V745.2M595.9 775.3V739.3M269.1 763.5V715.3M606.0 785.8V731.9M606.0 781.8V735.0M607.3 782.3V728.9M607.7 793.9V740.1M190.9 775.9V713.6M193.6 782.4V719.6M556.9 751.2V733.3M558.7 739.1V713.0M304.2 733.3V713.0M305.7 738.3V713.0M305.9 746.0V713.0M443.0 790.9V765.0M443.1 793.1V757.9M441.1 784.7V761.8M304.1 746.1V713.0M210.4 776.1V727.4M208.8 789.2V735.4M209.3 784.6V738.5M207.5 782.8V735.2M402.9 779.1V725.2M585.0 771.7V748.4M585.8 771.7V751.0M585.5 771.9V748.2M552.9 771.9V754.2M552.9 768.5V736.7M552.8 770.0V750.7M390.1 804.5V780.1M390.1 799.0V765.5M389.4 804.5V774.6M190.6 767.3V732.3M638.5 766.7V713.0M639.2 762.3V713.0M638.4 758.3V713.0M665.7 778.7V738.6M667.3 786.6V758.1M667.2 787.4V752.7M666.0 777.5V716.7M355.3 770.6V726.4M693.4 735.2V713.0M693.2 729.8V713.0M417.5 747.6V713.0M415.6 747.3V713.0M699.8 804.5V769.5M701.1 804.5V760.2M659.7 761.8V726.0M661.1 754.0V713.0M311.3 737.4V713.0M309.7 732.7V713.0M310.3 734.1V719.6M310.0 728.4V713.4M718.5 749.0V729.6M716.4 749.4V727.7M718.1 750.9V718.7M716.4 744.4V733.2M514.9 783.1V758.6M434.3 804.5V759.2M435.5 802.3V771.5M319.4 781.9V768.7M318.6 777.3V748.7M318.5 769.6V746.3M318.7 767.8V746.9M684.4 804.5V761.9M683.7 804.5V764.6M684.3 804.1V764.6M567.7 733.9V713.0M633.3 769.6V718.2M631.9 762.0V713.0M633.7 768.5V713.0M632.6 756.9V713.9M440.4 788.6V755.7M437.8 790.7V746.5M441.2 786.1V764.5M440.3 797.5V765.4M584.9 745.4V723.0M588.2 755.3V731.1M367.8 804.5V755.9M427.6 798.2V770.3M445.0 746.0V713.0M497.2 802.6V767.2M497.0 793.4V747.3M494.0 799.7V764.0M496.7 792.0V744.0M452.1 775.5V721.8M376.9 756.6V713.0M377.0 775.9V723.1M471.9 784.0V737.6M631.7 737.7V713.0M628.4 740.3V713.0M630.9 749.0V713.0M365.1 766.2V744.9M366.0 754.6V747.4M610.6 758.7V727.1M610.8 768.5V739.2M611.2 761.1V722.2M610.2 759.6V740.9M640.5 804.5V779.0M638.8 803.3V767.1M639.3 802.8V770.5M230.5 767.4V713.0M231.5 775.7V713.0M520.6 751.7V740.3M455.9 804.5V747.3M454.1 791.8V742.6M456.6 793.2V752.2M453.5 804.5V759.6M690.7 782.2V735.6M276.4 804.5V744.0M276.7 803.0V753.7M278.0 804.5V742.4M277.7 804.5V751.2M720.3 792.6V760.3M721.9 791.6V761.9M721.7 788.3V754.0M155.3 769.5V723.4M148.1 725.6V713.0M420.8 741.7V713.0M419.6 733.5V713.0M422.6 738.7V713.0M418.9 733.6V713.0M363.8 750.2V723.1M516.2 783.7V731.8M515.9 777.5V718.5M515.5 787.8V726.8M516.2 781.6V727.7M209.2 752.5V713.0M209.4 742.0V713.0M209.7 742.2V713.0M211.8 748.2V713.0M734.0 778.5V715.8M733.6 775.3V715.7M734.0 769.8V713.0M733.3 773.0V713.0M258.9 747.0V713.0M256.7 740.3V713.0M253.5 790.1V772.7M254.4 779.9V758.8M252.8 783.3V755.9M251.7 782.0V765.2M384.5 748.3V713.0M384.6 741.6V713.0M382.8 763.1V713.0M384.1 742.4V713.0M539.6 763.0V713.0M538.9 766.9V713.0M385.5 804.5V787.1M386.3 793.0V775.7M490.4 756.3V737.6M494.2 745.1V732.1M434.6 762.1V721.9M433.8 757.7V726.8M524.0 744.5V713.0M306.8 779.7V714.2M684.7 740.8V719.0M685.7 749.4V713.9M685.6 731.3V713.0M685.6 746.3V721.2M631.7 769.7V749.5M631.5 760.0V730.4M351.7 772.3V729.5M353.3 775.1V740.8M485.4 773.5V729.5M484.4 766.8V729.8M484.2 769.6V741.5M224.0 750.0V713.0M222.7 744.4V713.0M351.1 746.6V713.0M351.1 735.9V713.0M354.4 768.7V747.8M350.6 775.2V750.0M353.1 782.1V746.4M281.8 742.1V713.1M710.2 777.3V723.9M710.2 788.9V734.2M709.0 791.7V734.5M526.6 776.9V743.2M270.2 750.0V715.5M270.2 747.8V720.4M266.4 740.8V713.0M270.6 734.7V713.0M309.5 751.1V729.5M310.4 747.6V717.8M309.4 762.7V739.1M398.0 804.5V753.4M476.5 769.8V713.0M475.3 776.5V721.0M477.1 776.1V731.7M428.2 740.4V713.0M429.7 733.8V713.0M270.2 742.3V713.0M270.4 745.7V723.1M351.5 744.2V713.0M349.3 743.1V713.0M254.4 781.7V746.8M254.5 784.3V742.6M252.2 798.0V740.4M253.1 804.5V762.9M229.4 803.1V754.9M721.1 789.6V766.4M503.8 768.6V728.3M504.5 754.3V713.0M504.4 762.6V717.6M504.8 764.5V713.4M217.3 778.2V763.1M218.3 785.8V761.9M217.7 784.2V778.0M295.0 761.2V713.0M295.1 765.5V725.2" fill="none" stroke="#7eb26d" stroke-width="0.9"/>
<path d="M364.6 782.1V733.2M364.7 774.8V734.7M366.4 786.3V740.6M358.5 778.0V732.5M360.7 770.6V729.4M360.2 783.5V735.1M678.4 778.1V728.6M677.7 765.3V727.8M680.3 772.6V723.0M617.4 784.2V714.5M618.5 787.7V725.7M424.5 762.9V734.7M425.4 765.3V730.6M423.3 767.5V726.2M423.0 763.5V723.9M342.0 785.0V723.8M498.6 759.0V737.8M499.0 769.5V731.0M497.4 753.6V726.7M500.6 757.2V729.8M498.5 754.9V734.3M497.4 763.4V730.3M453.2 782.2V732.2M405.9 767.0V720.3M406.4 770.5V713.5M407.5 771.1V713.0M152.1 777.4V730.2M153.7 783.2V731.2M151.4 781.4V723.3M151.0 787.2V719.6M585.0 777.2V739.8M276.2 778.6V733.7M276.0 774.0V719.8M274.9 768.7V718.6M272.6 783.4V741.4M274.5 767.6V713.0M407.6 772.9V724.5M408.1 771.8V733.1M410.3 763.1V715.6M152.7 775.9V756.5M152.7 778.6V757.1M153.1 777.0V758.0M487.1 773.0V730.3M543.5 787.1V742.1M540.8 791.0V731.8M541.4 782.4V738.1M544.1 786.6V750.1M543.1 786.9V757.9M302.5 787.9V720.2M512.9 784.4V744.9M513.7 782.7V740.4M512.2 782.0V741.0M512.5 783.7V754.8M229.7 781.3V742.4M530.9 775.8V720.1M530.7 767.4V731.9M532.0 761.8V724.2M334.5 774.6V747.0M338.6 776.0V733.8M568.4 765.8V733.9M571.3 773.8V737.4M568.9 759.3V743.9M568.5 767.8V733.5M225.1 789.8V731.3M223.6 780.6V728.2M226.2 792.8V730.5M230.2 785.4V736.3M382.2 768.4V742.0M623.0 776.9V714.4M624.3 778.2V723.2M625.2 777.1V728.3M627.0 773.3V726.9M472.4 768.0V729.5M474.5 752.1V722.5M473.2 746.1V731.5M473.9 763.9V725.9M369.7 783.7V720.4M368.7 786.0V733.7M369.9 784.0V726.3M369.1 773.8V727.1M369.2 776.2V741.3M444.1 792.3V735.8M447.1 793.9V745.1M336.8 783.8V737.6M388.1 768.2V734.1M393.1 765.4V726.1M389.5 766.7V738.2M390.0 769.0V734.8M412.6 782.4V731.5M413.9 784.3V722.6M416.2 797.5V722.1M414.8 787.2V716.2M418.3 784.9V723.5M405.9 787.5V723.2M405.2 796.1V715.2M405.1 800.7V728.0M226.7 778.8V713.0M227.7 785.7V719.4M228.0 776.6V720.5M228.2 784.5V729.0M148.4 775.4V755.8M148.3 772.5V734.1M148.2 779.0V739.0M148.9 766.8V744.1M146.8 770.3V745.5M150.1 776.2V744.2M387.5 764.7V715.4M387.7 760.4V723.2M392.2 754.8V728.7M387.8 765.3V725.0M389.6 765.8V732.9M221.3 771.6V735.1M222.4 763.9V720.0M221.2 765.7V736.2M221.9 767.8V722.0M506.0 795.3V743.1M504.6 795.1V752.7M504.9 789.2V745.9M506.3 793.8V755.7M441.6 773.6V717.1M443.8 774.0V715.7M441.9 773.5V720.6M442.7 777.1V728.2M443.6 777.1V727.6M441.8 779.7V718.3M483.5 783.6V764.6M398.7 778.0V730.7M398.9 769.0V725.7M634.8 795.7V730.4M635.9 779.1V724.6M634.6 792.9V717.4M633.2 790.7V725.9M632.1 783.2V719.9M633.2 794.4V720.6M609.0 790.4V722.3M607.9 779.9V716.6M609.1 784.3V716.2M609.8 780.0V713.0M606.2 787.0V713.0M609.6 777.3V713.0M404.3 782.8V716.0M406.9 780.7V727.7M406.7 785.2V716.1M406.9 770.0V722.7M405.3 781.9V717.8M407.0 782.5V742.4M590.4 771.7V743.4M572.7 776.1V743.8M576.6 759.6V725.8M575.7 776.0V744.1M576.3 765.5V746.3M575.5 761.0V743.0M572.6 759.6V739.0M424.3 768.1V739.8M424.6 773.9V740.0M426.5 773.6V734.7M423.4 777.7V731.4M424.1 777.8V736.0M272.0 788.7V734.6M273.5 784.9V744.0M271.1 778.1V735.7M273.6 770.2V744.4M411.7 782.2V741.7M410.4 779.7V736.6M479.8 758.8V713.0M481.4 769.8V713.0M481.8 757.8V713.0M480.1 770.7V713.0M480.9 761.7V718.4M480.8 757.0V713.0M500.9 766.5V742.0M500.3 771.4V736.2M305.0 802.5V743.2M303.6 787.3V731.2M307.0 800.4V744.0M305.0 785.5V735.1M303.0 789.9V728.1M306.2 788.2V744.9M595.6 793.2V735.8M594.6 794.3V735.5M595.7 797.5V741.2M594.8 794.9V725.2M594.9 802.5V716.4M622.0 765.8V733.4M623.6 775.3V725.8M654.0 763.3V727.0M653.2 769.6V720.1M649.7 778.8V741.4M650.1 778.7V732.9M338.7 784.1V739.0M335.8 792.6V731.7M337.5 787.7V733.6M338.0 796.3V721.9M340.2 786.7V724.9M340.5 788.9V720.2M598.3 778.8V751.0M603.7 783.4V754.3M602.7 782.1V754.5M604.0 792.4V752.0M601.4 786.6V756.0M595.7 764.5V727.4M263.8 760.4V746.3M262.5 767.4V739.9M261.1 764.5V723.2M669.1 768.3V729.5M669.6 769.7V747.2M667.3 787.1V737.7M670.7 781.6V735.8M668.8 773.2V740.6M667.8 776.3V728.0M375.1 778.2V734.3M371.0 779.7V716.3M372.6 787.7V741.7M373.7 785.7V747.0M372.1 779.2V744.0M373.4 778.8V729.6M480.6 792.8V748.5M481.7 793.6V745.5M479.0 782.2V767.4M481.1 789.6V765.1M483.5 789.4V758.3M465.6 766.8V721.0M467.4 775.8V728.4M465.7 769.7V723.5M290.8 779.9V736.0M291.9 776.8V727.6M329.5 773.4V734.7M580.3 781.5V714.0M577.9 788.1V713.8M579.9 772.3V725.4M582.5 788.2V716.3M441.0 765.7V729.5M440.4 785.4V743.7M442.6 771.3V745.1M441.1 772.1V735.6M206.6 778.4V744.8M209.1 772.7V733.5M205.9 780.7V741.6M417.6 778.1V719.4M418.6 761.2V727.0M418.3 757.8V730.4M416.4 761.1V732.5M418.7 773.6V733.5M417.6 768.2V735.6M404.9 772.7V758.7M610.7 771.0V720.1M609.4 770.7V726.9M611.6 784.3V718.4M228.2 770.8V723.4M231.0 770.0V742.0M226.9 768.6V737.9M227.8 768.6V740.3M335.1 802.5V721.7M679.0 770.0V731.2M184.4 792.2V746.0M185.8 802.5V730.1M186.3 786.4V725.0M188.3 784.3V732.9M186.2 798.2V723.8M350.1 802.0V743.1M348.6 789.3V742.7M346.2 794.1V746.0M346.2 800.2V742.9M345.8 796.0V736.7M346.2 798.0V753.2M439.5 760.6V731.6M440.6 768.1V720.9M440.7 777.8V749.3M439.5 775.5V737.0M438.9 768.7V724.5M439.9 762.7V734.1M360.8 761.4V732.2M360.5 752.0V738.9M359.2 757.0V726.4M361.3 744.9V729.3M364.4 754.2V732.6M217.2 774.8V734.3M217.1 761.2V713.0M624.6 781.0V753.1M376.1 784.3V748.9M374.3 790.8V759.8M545.6 791.9V713.0M547.3 773.3V713.0M515.4 785.2V713.0M517.1 789.2V722.9M516.1 781.6V713.0M515.4 787.0V715.2M516.1 782.5V713.0M516.6 787.4V713.0M248.8 776.2V727.3M250.4 776.7V739.6M248.6 787.6V732.7M409.9 766.1V715.0M410.5 773.5V713.9M410.2 769.1V729.9M408.2 773.4V720.3M409.4 777.9V725.6M408.7 781.0V713.0M277.6 793.2V741.2M278.8 786.4V735.4M278.4 797.7V735.1M279.5 783.5V728.1M278.1 788.1V721.0M279.0 781.8V747.0M352.2 781.7V740.8M350.5 769.6V748.9M352.2 771.4V754.4M349.2 776.0V745.3M352.9 769.0V756.2M401.9 780.7V742.0M402.9 773.1V744.4M405.1 775.3V739.6M403.6 780.6V737.2M399.4 787.5V742.5M402.0 778.9V744.6M369.2 767.9V724.1M477.4 760.2V714.5M479.3 769.5V729.1M479.6 768.0V731.9M476.9 762.7V717.7M179.5 762.0V713.0M179.1 764.1V713.0M179.3 772.7V716.4M176.7 767.4V713.0M179.5 779.1V713.0M179.0 767.5V713.0M590.4 761.5V713.0M591.4 765.0V726.5M591.0 773.8V719.6M619.5 779.1V736.9M618.9 764.8V733.0M620.5 766.6V737.6M460.7 792.2V727.9M463.9 784.2V722.5M461.2 782.9V724.8M463.2 790.0V713.0M323.0 789.0V731.5M321.3 773.4V732.4M321.7 775.1V715.3M320.5 785.1V726.4M321.2 783.3V738.6M322.5 785.4V730.7M298.9 780.9V736.7M202.4 772.7V741.9M198.9 770.7V747.0M203.1 769.0V731.8M201.2 769.1V735.5M546.2 761.8V724.0M546.0 776.5V738.2M649.9 785.4V759.2M672.2 771.4V743.9M669.9 775.8V744.0M671.1 789.0V737.4M670.6 779.9V739.8M671.8 772.4V729.6M217.7 781.9V743.4M703.7 784.3V742.8M533.5 788.6V750.9M532.6 779.3V750.7M531.4 790.4V740.7M531.0 802.5V739.8M531.4 778.3V747.0M532.6 781.5V757.7M462.9 785.9V734.5M461.2 775.3V735.9M471.4 771.8V736.4M469.9 778.9V761.0M470.6 777.2V748.1M470.7 780.3V742.6M309.6 777.1V734.5M310.9 776.0V744.3M496.3 790.6V728.0M497.3 790.7V726.0M499.2 781.8V720.2M539.6 791.9V742.1M583.9 768.5V731.8M467.0 764.0V750.2M464.4 776.2V750.2M468.2 765.6V749.2M466.0 771.7V754.0M460.1 792.4V737.0M164.2 763.5V741.1M165.8 777.9V737.1M165.0 766.0V749.7M651.5 787.3V724.7M652.7 784.2V723.8M652.8 788.9V726.9M314.1 782.7V739.6M311.9 777.5V742.9M552.4 779.3V735.7M552.1 792.3V759.4M552.6 770.1V745.4M551.4 777.9V727.0M550.4 770.2V730.8M551.0 780.3V742.6M423.4 779.5V741.9M424.7 801.6V752.2M423.2 793.2V735.1M421.1 793.8V736.7M423.5 784.8V746.8M421.5 777.2V728.7M420.6 779.3V727.3M421.9 785.2V718.3M409.0 773.9V720.7M407.8 780.5V716.1M408.5 789.9V716.6M407.3 785.6V722.2M408.0 786.8V722.7M446.6 750.9V724.1M447.5 767.5V733.1M448.6 768.5V720.2M450.6 761.3V724.2M624.4 788.2V744.8M624.7 791.7V728.8M624.3 776.5V728.9M625.2 795.4V739.9M625.4 778.5V743.3M338.4 762.1V730.5M337.4 755.5V726.4M339.6 769.9V730.5M552.7 748.9V721.5M552.4 757.0V728.3M554.8 756.5V736.6M463.8 768.4V726.1M465.3 779.8V724.4M464.0 772.5V724.0M251.5 786.3V732.4M254.4 785.2V725.6M254.9 780.3V736.4M255.0 785.6V739.4M318.5 789.0V761.0M396.9 786.5V717.8M399.0 781.1V716.7M396.5 781.0V713.0M466.9 777.0V731.1M467.0 769.4V736.8M466.6 766.6V734.4M467.4 762.9V739.7M467.8 773.2V733.1M468.2 786.0V743.2M686.7 779.2V730.3M686.4 785.6V728.1M687.0 784.5V718.7M587.5 783.4V753.4M588.4 787.5V763.5M419.9 783.4V735.2M420.9 775.9V734.8M420.5 778.0V742.8M384.1 777.9V720.3M384.2 764.0V743.3M381.6 758.0V728.9M345.5 754.2V733.6M346.9 750.1V735.2M180.2 788.9V713.0M182.9 780.1V713.0M180.1 776.8V713.0M179.6 780.5V713.0M466.2 779.9V727.9M195.6 788.0V736.5M195.0 782.4V713.0M195.1 789.9V730.4M195.6 790.3V731.3M192.9 792.3V732.8M196.0 790.1V736.0" fill="none" stroke="#e9b943" stroke-width="1.05"/>
<path d="M211.7 773.7V724.5M211.8 775.3V713.0M210.0 778.9V723.9M209.9 763.2V713.0M296.6 753.2V713.0M295.0 758.6V713.0M295.0 762.2V713.0M297.0 769.7V721.0M242.0 755.6V739.0M243.3 771.9V752.7M243.1 768.3V742.4M242.2 767.3V736.9M697.1 795.8V764.7M696.7 793.9V757.3M694.8 799.4V765.9M696.2 804.5V774.9M193.2 800.4V767.4M192.7 804.5V766.5M195.6 802.9V745.6M195.9 798.9V744.4M195.3 800.9V734.1M196.4 804.5V748.5M533.3 767.1V713.2M532.8 772.1V718.5M534.3 772.6V713.0M705.5 762.0V720.9M705.4 753.5V722.5M704.6 754.6V716.5M705.2 753.2V728.1M596.4 804.5V737.5M595.0 793.9V744.1M593.3 789.8V728.6M698.9 790.3V731.7M700.8 784.9V733.5M364.5 765.2V741.5M484.5 749.7V729.4M484.0 749.0V719.0M485.6 735.4V713.0M483.1 744.5V713.0M685.6 754.0V720.3M685.9 748.4V725.9M686.9 737.7V714.8M723.8 779.5V770.2M723.1 777.1V764.4M547.5 767.6V725.9M549.0 774.9V730.5M549.0 775.4V731.4M471.7 792.6V754.0M471.9 793.8V766.3M470.7 801.3V775.6M469.8 789.5V767.0M284.8 734.6V713.0M285.5 734.4V713.0M413.7 795.3V758.0M414.0 782.7V743.9M413.7 784.9V754.9M458.9 746.2V713.0M459.1 744.1V713.0M461.8 755.3V713.0M645.7 743.8V713.0M645.3 746.7V713.0M623.3 766.4V746.6M623.9 765.8V749.1M624.2 769.5V754.7M624.4 784.3V767.3M532.3 804.5V732.8M532.9 791.6V730.2M531.9 804.5V728.9M573.7 750.0V713.0M572.3 748.7V713.0M575.0 759.7V713.0M403.9 745.1V713.0M403.9 750.2V721.2M403.1 746.8V715.4M348.0 760.5V713.3M347.3 759.0V713.0M349.8 745.2V713.0M519.2 765.6V735.4M594.7 783.5V748.7M593.5 775.9V736.4M666.0 752.5V713.0M666.9 741.8V713.0M474.3 773.2V743.1M448.6 770.3V730.2M449.6 766.9V713.0M448.2 765.2V713.0M447.8 771.9V713.0M336.7 759.7V735.5M337.0 754.4V735.9M336.2 769.9V745.2M314.5 770.4V732.4M315.0 764.5V722.3M185.0 759.9V714.5M732.2 744.0V719.2M487.8 786.7V737.5M488.8 780.1V731.2M488.2 791.9V737.8M487.8 785.9V737.0M542.9 751.3V713.0M544.1 747.1V713.0M543.6 757.4V713.0M544.1 753.2V717.3M377.3 795.6V781.1M377.2 803.1V777.8M378.1 801.1V782.3M377.9 804.5V783.2M398.8 768.7V746.8M399.3 772.7V759.4M399.6 769.8V767.9M276.8 769.9V736.0M277.9 767.8V739.2M723.2 793.5V772.0M724.7 804.5V781.1M724.1 788.1V766.8M455.7 737.3V713.0M456.8 748.0V714.4M457.7 735.1V713.0M730.4 733.1V723.7M318.7 788.6V744.9M318.6 788.4V726.4M317.5 784.0V732.4M316.8 781.0V722.2M458.6 733.5V713.0M459.7 743.0V726.2M170.4 737.4V713.0M167.7 729.4V713.0M234.4 775.2V713.1M681.6 758.6V713.0M682.4 760.0V713.0M680.8 766.7V713.0M191.9 779.1V742.4M190.7 787.4V748.0M191.7 789.3V759.1M191.4 780.1V749.3M189.1 758.0V713.0M188.2 767.5V713.0M187.2 759.6V713.0M188.6 768.4V713.0M413.0 741.0V724.9M421.8 753.6V743.9M670.5 771.9V751.6M671.3 777.6V760.7M670.7 770.2V741.9M673.2 770.5V743.5M274.5 743.5V720.0M508.4 779.6V731.6M509.9 790.5V759.7M560.2 792.3V758.7M558.1 785.9V758.2M558.7 787.6V761.3M682.7 739.6V713.0M682.9 748.8V713.0M588.6 728.9V713.0M590.2 741.1V713.0M589.5 740.5V713.0M436.2 771.8V744.5M437.0 784.3V748.1M436.4 781.1V752.5M375.7 744.9V713.0M164.6 796.5V783.5M164.2 788.2V762.1M162.9 804.5V783.8M162.3 800.7V775.1M289.3 804.5V771.7M523.0 754.6V713.0M523.0 745.8V713.0M527.7 759.9V713.0M680.9 801.7V749.4M484.8 788.8V730.5M484.4 796.6V738.4M483.2 786.1V726.5M334.0 799.6V764.1M333.8 790.6V749.9M225.2 804.5V783.0M226.5 804.5V782.6M227.8 794.2V762.6M225.4 804.5V783.4M722.2 786.7V755.3M721.9 775.9V747.4M719.3 785.7V754.7M414.2 758.0V713.0M413.9 754.4V713.0M417.1 757.5V713.0M415.8 754.4V713.0M329.4 741.3V713.0M330.5 753.4V716.9M330.2 756.2V719.4M533.5 782.5V750.5M535.4 795.3V758.7M533.9 789.7V754.0M232.5 754.4V725.8M228.7 738.8V713.0M230.8 753.7V731.2M731.5 790.0V746.4M335.7 757.1V747.7M333.8 755.9V723.9M324.7 766.2V740.2M323.8 773.7V747.2M325.9 762.1V744.5M670.3 776.2V735.2M670.0 776.0V729.8M670.9 776.3V728.7M670.0 783.2V734.8M324.9 791.7V743.6M327.9 797.3V746.2M427.0 749.2V713.0M495.1 795.7V751.8M496.1 789.9V737.9M249.7 736.2V713.0M247.7 739.3V713.0M250.3 736.8V713.0M248.9 745.6V713.0M696.7 793.2V773.9M657.6 772.8V741.9M656.7 764.4V734.0M656.5 766.5V733.6M212.6 760.2V726.0M211.5 765.6V746.7M211.3 767.6V738.5M212.4 777.8V749.8M177.9 770.8V730.5M178.5 767.6V734.3M177.6 767.8V728.0M682.8 786.8V733.2M683.8 778.9V729.7M321.0 793.9V763.1M320.2 793.9V759.7M320.2 786.7V762.6M380.6 782.1V758.9M379.3 761.7V738.2M379.6 768.3V744.3M710.9 790.1V751.9M518.9 766.4V715.7M518.9 761.5V713.0M519.0 755.1V713.0M456.4 767.0V713.3M478.4 749.3V713.0M219.2 739.3V713.0M221.1 741.4V713.0M409.3 795.2V758.4M409.5 788.3V747.0M409.1 789.6V749.6M408.1 782.4V752.2M503.8 765.1V751.7M507.3 763.5V752.5M506.0 776.8V748.7M505.5 756.6V738.7M387.8 746.6V713.0M289.0 768.5V732.0M290.0 760.6V722.2M490.5 778.1V751.0M490.3 748.8V721.5M672.8 751.2V723.4M672.8 747.8V725.6M672.0 746.5V720.3M679.2 785.4V723.8M563.5 750.2V713.0M564.2 734.5V713.0M563.2 740.0V713.0M563.5 750.5V713.0M303.7 797.8V759.6M249.8 770.0V745.2M250.2 782.0V771.2M285.8 754.7V713.0M284.0 765.7V713.0M211.2 755.4V729.1M211.0 744.8V724.3M213.3 758.0V728.7M211.9 752.9V714.6M520.5 802.9V742.0M518.7 799.9V757.6M194.4 754.3V713.0M195.0 755.9V713.0M193.0 758.0V713.0M194.0 753.3V713.0M536.2 777.4V735.7M535.6 780.2V736.7M535.9 789.2V758.5M536.2 783.3V739.5M547.3 743.4V713.0M548.2 733.4V713.0M546.8 748.7V713.0M661.2 749.4V719.8M662.6 748.6V713.0M660.9 757.0V723.8M359.0 796.5V742.7M362.3 790.6V742.7M361.2 799.7V749.2M586.3 769.1V720.5M585.1 764.2V719.5M586.7 763.5V716.4M586.8 758.4V721.3M367.9 769.2V713.0M366.4 764.4V713.0M366.2 754.2V713.0M368.0 762.6V713.0M465.1 778.5V741.2M466.3 776.7V730.5M372.0 743.5V717.7M373.1 743.4V717.6M373.8 734.2V713.0" fill="none" stroke="#7eb26d" stroke-width="0.9"/>
<path d="M495.5 788.5V713.0M495.9 792.6V713.0M496.5 790.6V713.0M494.8 793.2V724.8M496.4 790.4V721.5M495.9 797.6V713.0M629.5 765.0V738.7M628.1 756.2V739.8M629.9 767.6V740.1M430.2 762.4V731.2M463.7 776.3V736.0M629.6 787.1V727.6M632.2 776.6V727.0M696.8 781.0V755.4M401.6 777.4V751.4M399.3 789.7V739.1M398.0 787.0V740.1M401.5 779.4V747.0M418.9 765.0V731.4M420.4 765.8V727.5M423.8 768.3V731.2M543.8 772.4V733.2M541.4 786.8V746.5M544.4 776.5V736.3M542.6 794.3V736.9M544.4 775.6V732.6M545.1 772.0V734.2M613.1 777.2V726.5M612.7 771.2V714.7M616.7 771.4V716.6M615.7 771.7V717.3M689.1 777.9V737.6M689.4 767.4V744.1M689.8 785.3V742.0M691.2 784.5V736.0M688.0 768.3V734.7M688.7 784.0V739.8M227.6 792.1V726.5M375.3 778.2V749.1M372.8 780.9V750.8M374.0 780.9V739.5M376.2 771.9V742.0M446.8 784.2V717.3M534.8 771.5V740.4M534.4 771.9V733.9M534.1 778.5V722.2M619.9 774.2V722.6M218.5 761.9V729.9M218.7 762.9V728.9M220.1 763.6V732.5M216.8 750.9V722.0M547.6 793.0V738.8M547.2 797.2V749.2M153.5 757.9V735.8M156.7 772.5V743.7M572.9 774.6V739.7M573.8 773.0V745.6M162.5 781.1V753.5M161.1 780.4V739.9M161.4 763.9V748.9M160.2 780.0V738.5M605.6 757.6V713.0M606.0 764.6V744.2M723.2 791.3V728.2M721.5 799.3V714.2M721.4 793.9V732.5M189.8 752.8V738.5M188.3 768.5V726.0M712.0 789.6V737.6M712.1 773.0V738.2M439.6 767.2V713.0M442.7 775.8V725.0M439.1 781.6V736.8M442.3 772.2V731.0M603.1 776.0V739.7M602.3 764.6V731.8M602.4 787.5V746.5M602.6 785.5V743.6M600.9 781.6V737.3M468.8 776.3V744.7M470.4 783.4V741.6M469.6 779.2V755.3M470.2 778.3V762.7M470.0 776.3V758.2M470.7 776.9V742.6M187.6 783.1V731.1M420.7 799.8V744.8M529.6 771.1V713.0M528.8 796.7V713.4M529.5 792.9V714.6M531.1 781.5V713.0M665.2 796.2V727.8M664.9 789.6V727.7M666.5 787.2V720.7M666.3 786.9V725.0M664.8 792.3V721.2M268.8 765.6V739.8M271.5 768.8V749.3M463.3 797.9V731.3M462.9 795.4V720.3M461.0 796.5V723.8M515.9 772.5V747.1M518.2 763.0V733.9M519.1 769.7V742.1M516.7 769.0V741.4M516.7 778.7V746.8M516.6 778.9V730.8M617.8 767.1V734.4M617.1 765.3V729.9M416.9 777.3V740.4M413.8 773.7V738.3M415.5 778.1V737.5M520.7 794.2V732.3M518.7 769.2V741.8M520.4 781.0V729.6M522.6 779.7V737.2M499.3 775.6V736.1M499.1 762.1V716.5M502.8 770.2V730.2M500.6 769.1V733.0M502.2 775.0V718.5M467.5 786.4V736.7M462.8 791.8V735.7M464.9 789.5V748.3M463.2 797.9V738.0M433.9 794.7V720.6M434.6 789.6V718.0M436.4 787.5V718.4M394.3 791.9V737.8M394.4 770.6V740.6M180.5 773.2V749.5M176.4 773.7V748.7M669.8 794.2V729.7M672.3 788.9V727.3M671.1 802.4V714.5M672.7 778.8V734.3M434.8 786.9V717.1M430.0 782.4V713.9M432.6 786.6V725.9M433.0 776.8V720.2M310.7 794.2V728.3M311.3 802.5V731.7M309.4 802.5V736.8M311.7 793.9V733.4M341.7 771.4V743.7M342.4 772.0V733.4M342.9 772.5V753.9M340.1 773.4V748.1M341.5 775.9V736.9M339.2 762.0V734.8M188.5 775.8V713.0M186.9 778.9V725.7M188.3 764.1V735.2M189.0 781.8V731.8M473.2 790.2V732.9M476.5 783.1V723.2M474.2 797.4V724.5M251.6 778.9V741.0M350.0 791.6V755.4M351.1 785.8V737.4M348.4 787.0V740.9M348.6 787.5V732.1M350.9 778.5V741.5M350.4 793.5V725.2M454.0 788.4V741.3M452.1 788.4V733.7M449.9 783.2V731.7M450.9 786.2V734.0M451.5 788.0V730.1M451.4 785.0V731.1M628.9 795.3V758.6M633.1 801.1V735.3M550.9 771.9V718.9M553.8 774.8V722.9M551.8 774.9V721.5M553.8 779.8V726.2M552.1 769.9V730.2M553.7 781.6V733.4M397.5 789.4V739.7M400.3 787.1V735.1M399.1 772.8V730.3M397.2 772.4V738.4M399.0 777.9V733.3M397.2 791.3V737.9M202.9 791.5V757.8M200.9 790.7V742.3M200.6 787.0V746.6M201.0 791.4V731.3M574.6 785.2V728.8M576.5 777.1V720.1M575.2 781.0V728.4M374.2 775.4V721.9M374.4 772.6V713.0M375.9 760.4V718.6M196.3 769.0V741.2M196.0 784.5V737.5M196.7 791.2V724.8M268.6 782.0V713.0M269.0 768.5V736.6M270.4 766.0V724.8M270.6 769.7V754.3M490.1 787.6V720.9M489.2 780.1V722.6M620.6 782.4V756.0M623.5 779.1V751.0M625.6 776.9V756.3M244.2 790.7V713.0M244.7 768.2V726.2M246.5 786.6V713.0M410.9 763.3V721.0M406.7 766.9V722.4M408.5 777.4V729.8M407.6 763.2V716.2M408.5 759.7V726.0M407.3 772.5V713.0M408.5 781.7V739.3M406.5 780.3V760.8M407.8 772.8V751.2M407.5 775.3V742.4M408.0 773.9V742.6M406.0 767.7V737.9M635.2 768.4V728.4M633.8 766.7V730.1M634.6 765.2V736.9M394.8 788.8V722.1M483.7 792.1V743.7M483.1 802.5V740.9M481.7 802.0V749.5M483.5 801.0V740.6M234.1 802.5V738.1M233.1 802.5V721.0M234.3 793.0V728.7M234.0 802.3V740.0M234.6 799.8V731.8M234.0 796.7V736.1M329.0 792.3V746.3M328.2 787.3V727.9M329.1 795.5V724.8M255.1 777.4V736.7M254.1 775.0V737.5M254.7 785.6V733.3M619.1 775.7V732.2M617.6 764.5V740.1M616.5 767.0V735.4M624.8 802.5V713.0M626.1 799.8V713.0M625.8 785.4V719.2M627.3 802.5V715.8M626.4 797.0V713.0M274.4 790.5V725.2M275.7 781.6V713.0M411.8 762.9V732.0M409.9 762.0V714.1M575.8 761.4V738.1M573.7 771.0V740.1M572.6 777.5V726.3M573.3 765.7V748.0M574.8 762.6V738.6M575.4 768.5V717.7M214.6 781.9V733.8M214.0 777.1V724.7M211.0 789.1V728.4M302.2 770.8V713.0M302.4 785.4V713.0M301.1 773.0V713.0M302.2 778.6V719.2M303.4 783.1V713.6M534.3 782.2V734.3M539.1 777.0V732.9M634.8 776.9V720.1M672.0 774.9V734.1M667.8 779.2V741.6M672.4 772.2V727.1M672.4 774.6V761.2M671.7 781.5V743.4M670.9 779.8V734.8M404.8 774.7V730.3M406.3 792.8V726.6M601.8 802.5V754.4M601.3 785.8V747.7M639.0 765.9V714.4M639.7 784.0V729.6M637.9 765.3V725.4M638.6 773.6V728.7M641.7 780.3V735.8M430.6 800.7V724.3M430.8 802.5V717.2M430.4 800.3V720.2M607.9 763.7V749.4M566.0 770.9V728.2M567.3 776.8V728.8M567.7 784.7V742.2M565.7 780.4V726.5M568.4 785.4V732.0M566.7 766.9V720.8M598.5 762.6V730.3M600.0 773.8V725.7M533.6 779.7V746.2M533.4 785.5V743.1M535.1 785.9V730.3M146.2 778.9V751.1M146.5 772.4V746.2M146.1 783.3V755.9M148.2 778.1V756.4M720.9 781.9V731.1M723.1 791.4V739.8M722.3 787.8V725.8M376.1 762.3V720.7M377.2 765.1V734.7M375.1 763.5V723.6M375.2 770.1V717.3M378.4 769.9V721.0M391.6 777.8V713.0M390.4 793.3V739.1M390.9 785.7V720.5M391.5 782.3V725.3M198.2 767.4V724.0M198.0 773.4V726.4M196.4 780.2V732.2M197.9 767.1V725.0M200.2 780.8V716.6M644.3 759.0V738.0M643.5 773.8V713.9M642.1 774.0V741.8M644.6 770.1V740.4M646.3 759.7V736.6M553.4 767.7V735.4M441.5 775.9V720.8M443.3 771.0V741.7M443.7 775.5V725.9M445.3 780.9V739.3M442.6 790.7V746.5M444.2 783.6V720.5M406.4 771.7V744.7M331.7 773.3V729.7M324.9 793.5V736.7M543.9 781.9V736.5M545.8 778.2V732.3M544.8 765.4V748.4M542.7 775.3V749.5M545.1 772.5V741.6M668.5 792.7V732.3M669.2 799.2V747.7M669.0 781.8V721.4M385.8 782.0V757.7M383.3 794.6V759.1M385.4 799.9V762.0M385.4 793.0V748.2M387.0 796.0V745.5M386.3 790.3V752.8M203.4 794.5V731.8M203.2 783.7V730.8M203.6 781.3V728.3M464.3 787.8V735.1M462.2 768.0V735.9M461.8 780.0V736.1M464.9 775.9V714.7M464.0 771.3V731.9M384.3 780.6V733.1M428.4 767.3V747.6M624.8 775.3V713.0M621.2 775.6V713.0M624.0 770.8V713.0M311.7 769.2V746.0M312.1 791.0V741.3M428.8 790.9V743.9M181.1 771.6V730.6M406.7 780.8V738.3M405.2 775.0V735.6M406.6 779.2V727.3M415.8 777.2V726.6M416.1 782.9V725.6M418.5 770.8V718.8M417.1 782.3V720.9M418.2 777.8V713.0M416.7 774.3V722.4M621.3 780.7V723.7M621.4 788.8V722.3M620.3 787.1V739.3M621.1 791.5V736.0M622.6 779.7V719.3M621.1 797.4V734.3M184.5 771.9V713.0M184.4 756.3V722.2M183.5 765.0V722.0M183.7 764.1V729.8M183.8 761.6V716.8M522.1 786.3V740.4M524.0 782.5V747.9M526.1 788.3V722.8M523.2 792.7V735.9M525.3 783.2V735.8M524.5 784.9V728.9M187.1 783.6V733.7M188.8 795.2V743.3M186.9 777.7V726.4M187.7 775.0V736.8M189.4 784.2V740.3M189.0 784.0V737.7M601.8 778.0V728.0M602.1 772.9V744.2M600.2 769.9V744.5M600.0 764.1V730.8M601.9 779.2V742.2M206.2 770.1V750.2M206.7 765.9V746.4M324.5 788.7V740.7M322.4 792.2V734.6M676.1 779.0V756.2M310.4 793.2V731.5M309.8 790.7V716.4M309.7 800.2V719.1M419.9 797.8V733.5M420.9 795.4V730.3M422.3 794.9V732.4M353.9 764.4V717.7M353.4 763.3V713.0M449.9 770.0V731.8M449.9 768.7V736.8M447.4 783.4V715.5M446.2 781.9V724.9M450.0 768.4V724.8M519.2 774.6V733.9M519.7 772.3V749.4M577.0 771.8V753.1M421.1 787.0V713.0M268.3 766.8V730.9M267.8 778.7V739.7M270.5 778.1V731.0M318.5 767.8V735.5M482.6 771.6V719.8M482.2 770.6V715.0M481.4 758.7V713.0M480.7 757.7V713.6M480.9 777.5V724.0M481.9 779.7V714.1M513.0 791.1V736.3M446.5 797.2V722.9M448.1 795.8V735.1M447.4 801.1V722.5M445.0 800.9V715.2M448.8 801.5V715.8M187.0 775.3V730.7M191.1 790.5V729.3M190.9 792.0V725.8M188.4 779.1V728.7M190.3 783.3V732.2M189.3 790.0V744.8M689.2 785.9V748.7M691.8 774.9V741.7M689.0 763.9V743.7M689.6 780.4V741.0M690.4 775.7V730.7M433.0 783.4V740.7M433.5 788.8V742.6M436.6 790.1V750.5M433.3 780.0V744.0M582.4 761.0V733.5M583.1 771.3V742.1M583.8 766.9V737.3M581.8 775.1V746.9M583.0 776.3V741.4" fill="none" stroke="#e9b943" stroke-width="1.05"/>
<path d="M467.4 788.9V752.2M468.9 785.2V744.1M685.4 748.5V713.0M683.1 742.9V713.0M684.9 735.0V713.0M684.7 755.2V713.0M605.3 793.2V751.0M607.1 788.2V748.1M606.5 780.5V732.0M607.9 782.9V747.5M191.3 766.8V736.0M193.9 753.8V717.8M203.5 796.0V744.8M203.6 793.7V741.2M204.3 797.3V747.9M287.8 798.9V746.6M159.7 790.1V737.1M160.4 804.5V755.7M160.2 798.4V745.6M226.4 780.3V771.4M226.6 787.5V768.5M227.8 780.5V763.6M358.1 768.1V713.0M360.3 783.0V726.4M358.4 767.4V719.4M362.4 769.3V713.0M394.3 787.6V725.2M440.7 794.0V725.8M611.8 798.6V765.5M612.4 799.1V754.6M612.4 792.7V754.0M612.0 795.1V756.0M201.3 753.1V724.3M202.8 754.2V731.3M200.4 752.6V716.1M724.9 752.0V713.0M724.0 754.5V713.0M728.1 758.5V713.0M538.7 735.0V713.0M357.3 804.5V784.2M355.3 804.5V792.3M355.3 794.6V775.5M216.4 733.1V713.0M213.1 745.9V713.4M213.0 732.4V713.0M549.6 804.5V771.0M439.1 787.5V735.9M437.8 775.5V722.2M172.0 772.3V714.9M175.5 767.4V713.0M209.3 797.0V735.8M208.3 789.7V726.5M210.6 781.8V720.5M208.9 790.9V729.6M688.8 800.4V745.4M689.0 804.5V750.6M408.7 779.3V721.9M460.2 780.8V765.4M460.4 777.1V763.5M690.0 754.1V736.5M496.5 762.7V754.7M501.1 762.2V745.4M602.4 755.1V724.8M603.0 741.5V713.5M355.4 777.2V732.6M293.6 764.5V713.0M514.0 784.3V767.2M671.7 770.5V731.0M509.3 783.9V753.5M508.8 779.9V765.2M509.7 781.6V760.7M509.1 781.7V749.0M717.5 749.4V713.0M718.1 731.4V713.0M717.2 739.8V713.0M363.2 749.0V728.9M362.9 746.5V731.3M363.6 759.2V737.0M361.1 753.2V736.6M188.9 756.9V713.0M189.3 739.6V713.0M188.9 738.5V713.0M420.0 766.0V738.7M417.5 766.3V749.6M416.9 760.8V734.3M419.1 761.5V740.4M287.0 763.2V713.0M681.4 741.9V715.3M681.1 749.3V725.6M680.2 749.5V716.1M680.5 751.7V724.4M699.6 798.9V776.8M700.5 798.9V784.4M701.9 792.1V778.4M700.2 801.7V774.7M183.1 796.7V763.7M321.1 799.1V779.8M509.7 782.8V753.6M510.6 782.5V753.0M522.0 747.1V721.3M522.0 751.8V730.4M522.8 749.3V738.1M167.8 736.1V713.0M468.8 749.5V731.8M723.1 739.1V713.0M396.8 763.2V713.0M418.4 804.5V766.5M415.4 804.5V770.8M581.8 732.9V719.0M580.4 744.7V732.6M582.4 749.4V728.2M580.9 746.0V725.3M338.3 752.3V726.6M690.3 778.8V731.1M689.8 779.0V732.9M689.9 794.0V757.6M689.1 790.9V752.2M568.8 804.5V771.7M566.3 794.1V763.3M425.5 748.7V713.0M503.3 802.9V775.9M503.8 804.5V774.8M585.5 770.1V743.3M586.2 760.8V741.1M589.1 773.9V753.4M705.5 762.2V713.0M704.2 759.5V713.0M492.7 763.4V717.1M492.2 753.5V713.0M490.9 745.3V713.0M492.8 756.8V713.0M578.3 765.4V713.0M312.0 737.6V714.5M313.2 755.9V736.7M309.4 733.8V713.0M174.9 776.1V761.3M173.2 779.4V756.3M162.4 792.9V755.7M161.8 794.9V747.1M161.4 803.9V747.4M603.8 799.9V753.2M605.4 803.7V754.2M603.6 795.5V734.8M303.5 804.5V776.6M277.3 734.7V713.0M640.8 742.2V713.0M640.4 744.9V713.0M638.5 737.0V713.0M286.5 747.7V713.0M284.7 741.0V713.0M285.9 749.9V713.0M606.8 793.3V751.7M483.5 780.0V726.2M484.4 781.0V713.0M562.2 802.7V745.5M470.7 733.5V713.0M574.1 748.9V725.8M313.5 772.7V747.9M312.8 746.9V713.9M312.6 761.5V738.7M311.9 754.4V721.2M330.2 777.6V717.3M328.9 762.6V713.0M331.4 768.5V713.0M328.4 773.1V716.0M499.6 797.4V739.0M501.3 798.8V748.6M499.7 795.2V729.8M197.4 770.6V715.6M195.8 775.9V713.0M552.0 769.7V715.1M551.7 762.1V716.1M552.0 752.5V713.0M554.3 760.9V713.0M211.9 797.4V786.3M211.3 804.5V779.3M215.8 773.9V719.4M216.2 775.6V716.5M215.3 787.3V722.8M216.7 777.1V723.2M632.6 764.5V713.0M634.2 749.3V713.0M634.3 752.6V713.0M519.9 745.0V713.0M519.2 744.3V713.0M520.6 731.9V713.0M701.8 776.3V751.2M383.7 755.1V713.0M383.2 740.0V713.0M681.2 791.3V748.8M684.4 783.3V738.5M472.8 742.1V713.0M471.7 747.8V716.2M373.0 747.3V713.0M374.2 741.5V713.0M372.2 744.8V713.0M376.2 741.7V713.0M334.5 793.9V773.7M332.5 786.8V767.5M366.3 768.5V748.7M365.8 773.4V748.0M364.8 769.5V747.4M366.3 758.8V741.3M206.7 752.7V713.0M306.7 741.3V713.0M305.3 740.2V713.0M305.1 738.2V713.0M305.4 741.5V713.0M178.7 752.9V729.8M177.0 744.3V719.0M723.6 776.9V759.0M724.5 777.8V765.5M544.5 765.1V748.0M545.1 755.5V735.3M448.1 740.3V713.0M446.4 741.7V713.0M448.5 738.7V713.0M448.7 737.8V713.0M705.4 785.0V755.1M707.0 790.4V761.8M705.9 776.3V741.0M280.8 752.7V713.1M280.7 762.6V725.0M156.9 756.4V732.6M154.3 750.1V727.6M155.1 747.1V730.8M310.2 777.2V756.8M309.7 773.1V747.2M310.0 777.4V747.0M603.9 789.8V752.7M604.2 775.9V732.7M236.4 731.2V713.0M237.2 742.2V713.0M236.2 759.3V720.3M237.1 757.3V713.0M396.3 778.9V757.1M593.1 761.6V713.0M594.6 778.4V729.0M593.0 774.4V722.4M594.0 763.7V713.0M468.0 795.9V769.7M469.0 788.3V754.2M467.7 798.5V769.8M468.6 791.9V756.9M365.3 769.2V727.3M365.4 783.7V738.8M367.3 787.4V758.9M367.2 768.5V736.2M665.5 793.8V775.0M663.6 799.0V763.1M664.5 789.2V764.0M664.7 788.7V761.5M456.6 747.0V714.7M456.2 745.1V724.9M457.6 739.2V713.0M457.9 747.8V719.7M732.2 786.5V731.1M731.7 787.2V725.8M730.5 804.5V739.4M731.7 790.7V742.1M405.5 745.7V713.0M618.3 784.5V764.1M472.4 800.1V776.1M472.6 804.4V775.4M472.5 803.4V791.0M470.9 800.7V772.2M437.0 770.1V738.9M436.5 763.8V716.7M436.0 764.4V723.0M436.0 773.5V732.2M609.5 743.0V713.0M609.8 751.3V716.9M480.2 739.5V713.0M589.0 783.3V749.9M590.4 767.3V743.4M591.1 772.5V736.8M147.5 740.4V713.0M147.8 736.7V713.0M239.8 775.4V713.0M506.8 744.9V713.0M505.3 761.6V727.9M504.4 749.7V713.0M504.9 758.5V714.4M688.9 783.8V737.0M355.2 774.5V737.4M354.1 785.6V729.3M598.5 753.5V713.0M598.2 755.2V713.0M598.8 750.5V713.0M554.8 801.5V777.0M554.9 799.6V764.0M551.0 777.3V727.0M379.6 754.6V732.6M172.3 793.0V730.1M172.8 793.8V728.2M173.6 779.2V713.2M176.5 769.3V738.8M177.4 782.6V756.2M176.2 777.1V761.1M631.2 764.5V747.9M629.7 763.2V714.8" fill="none" stroke="#7eb26d" stroke-width="0.9"/>
<path d="M178.6 773.9V733.5M179.5 782.0V756.1M179.6 790.3V746.8M178.9 777.0V742.5M176.5 775.9V743.3M179.4 778.5V746.1M333.2 776.9V713.0M335.1 776.8V713.0M335.8 766.6V716.7M334.9 779.4V720.2M334.7 784.8V715.0M449.6 777.2V718.7M448.9 781.8V734.7M448.3 774.2V713.0M448.1 780.1V733.6M450.1 769.3V728.6M448.6 764.0V721.6M522.0 788.9V727.8M521.9 786.3V723.9M522.7 773.6V732.0M523.9 783.6V733.6M523.1 772.9V717.5M711.6 783.1V742.1M713.8 788.3V735.0M714.8 794.5V748.0M716.0 782.9V747.4M713.8 794.9V735.7M535.2 787.6V735.8M535.3 777.8V726.0M658.6 783.2V720.8M658.3 791.1V720.1M661.0 781.5V716.4M657.4 776.6V733.9M148.3 782.7V743.7M147.1 785.7V739.5M146.2 790.5V739.4M698.0 782.7V723.5M697.9 775.6V735.3M697.9 787.6V736.2M697.0 783.3V723.7M695.9 784.8V718.7M697.8 781.8V730.4M651.2 780.3V740.3M651.3 761.9V733.7M652.8 774.2V739.8M650.3 768.1V732.8M400.0 771.6V725.4M400.7 772.7V741.5M668.7 778.5V723.3M672.1 784.4V726.3M496.0 779.4V717.5M500.6 764.3V717.6M496.9 777.2V713.6M495.2 773.3V721.3M475.3 779.3V715.7M475.7 775.4V713.0M474.9 787.0V713.7M474.6 774.2V717.1M290.5 777.2V752.4M291.4 793.7V741.4M194.6 781.7V755.0M194.5 774.0V747.5M574.9 783.6V740.1M572.8 777.3V745.8M616.0 775.2V727.5M615.0 766.1V729.1M668.3 778.3V713.0M614.8 769.1V740.5M615.2 761.5V742.6M642.2 764.1V713.0M643.5 785.7V719.6M366.4 779.2V735.0M363.9 788.5V727.5M389.5 766.6V747.8M391.0 760.8V739.2M390.1 776.2V739.5M279.5 774.4V720.6M496.5 784.3V739.8M493.0 775.9V724.9M493.7 790.0V734.4M493.9 784.9V736.7M495.2 789.4V720.8M551.7 759.4V733.4M549.8 770.8V726.7M548.7 768.7V734.3M305.4 775.8V731.9M306.3 791.0V719.8M304.8 775.8V723.8M687.2 765.1V742.8M686.5 773.8V746.4M686.9 775.4V757.4M690.8 780.2V758.0M230.8 780.3V728.4M230.4 781.2V746.1M161.0 781.1V722.7M163.1 780.2V727.4M162.5 775.9V714.1M159.8 772.6V725.4M161.6 768.1V732.2M342.9 775.7V732.6M344.8 774.5V735.5M341.8 773.7V713.0M222.7 766.6V740.7M223.1 774.5V738.6M224.0 777.3V742.3M220.8 775.9V744.9M512.2 767.9V715.0M510.8 776.6V713.0M511.1 779.2V713.0M357.8 783.0V757.8M509.7 772.3V730.7M511.0 777.8V738.9M507.7 757.6V721.8M511.9 774.1V718.2M509.7 768.2V727.5M511.8 771.1V728.9M308.1 766.4V719.1M310.7 755.0V721.4M309.4 758.8V730.4M308.8 760.7V715.6M310.0 755.4V715.1M310.3 754.8V723.6M419.6 782.9V721.7M420.8 796.4V716.6M185.7 764.5V715.3M612.6 779.9V713.0M615.4 782.5V718.2M613.5 792.8V714.0M614.5 785.0V719.7M348.1 789.2V738.6M267.2 774.8V753.3M269.6 776.4V745.0M199.8 772.7V721.6M199.0 784.6V723.2M334.2 789.7V753.4M329.8 785.2V727.1M334.0 781.6V747.8M335.3 788.5V730.9M336.3 780.5V750.5M435.1 773.6V727.6M433.3 777.9V715.4M434.0 774.4V722.0M432.5 768.2V716.4M668.4 776.7V728.2M667.7 767.9V730.2M327.7 765.1V732.0M480.0 779.7V742.0M577.9 791.8V724.6M574.2 786.9V723.3M577.2 797.9V738.5M575.6 785.8V721.7M576.1 794.0V730.3M321.9 792.1V730.5M324.4 785.3V723.5M325.4 783.6V739.5M321.9 794.1V730.3M323.4 789.7V741.4M324.8 798.6V739.8M449.5 793.9V746.0M451.2 791.4V730.6M447.4 800.4V739.1M585.6 798.3V728.2M584.7 800.7V731.6M447.9 784.5V741.2M448.0 786.5V733.3M447.9 777.4V740.7M449.4 785.1V739.9M449.6 785.1V742.7M449.3 792.1V736.7M376.0 790.2V751.7M376.3 791.2V757.1M408.6 779.9V760.0M408.6 773.0V745.9M406.6 783.6V746.4M313.3 782.8V737.9M432.6 774.1V726.3M434.2 781.1V730.8M218.1 782.5V736.6M219.6 765.2V737.9M368.9 781.7V716.6M370.2 771.2V725.9M369.6 775.8V721.8M370.3 772.5V726.2M370.1 771.8V719.4" fill="none" stroke="#e9b943" stroke-width="1.05"/>
<text x="658.2" y="875.2" text-anchor="end" font-size="10.7" fill="#33a2e5" textLength="17" lengthAdjust="spacingAndGlyphs" stroke="#33a2e5" stroke-width="0.55">min</text>
<text x="706.3" y="875.2" text-anchor="end" font-size="10.7" fill="#33a2e5" textLength="20" lengthAdjust="spacingAndGlyphs" stroke="#33a2e5" stroke-width="0.55">max</text>
<text x="753.9" y="875.2" text-anchor="end" font-size="10.7" fill="#33a2e5" textLength="17" lengthAdjust="spacingAndGlyphs" stroke="#33a2e5" stroke-width="0.55">avg</text>
<text x="801.6" y="875.2" text-anchor="end" font-size="10.7" fill="#33a2e5" textLength="34" lengthAdjust="spacingAndGlyphs" stroke="#33a2e5" stroke-width="0.55">current</text>
<rect x="887.3" y="861.1" width="676.2" height="1" fill="#35373b"/>
<text x="883.0" y="864.4" text-anchor="end" font-size="10.7" fill="#cfd1d4" stroke="#cfd1d4" stroke-width="0.34">0</text>
<rect x="887.3" y="824.7" width="676.2" height="1" fill="#35373b"/>
<text x="883.0" y="828.0" text-anchor="end" font-size="10.7" fill="#cfd1d4" stroke="#cfd1d4" stroke-width="0.34">0.250</text>
<rect x="887.3" y="788.2" width="676.2" height="1" fill="#35373b"/>
<text x="883.0" y="791.5" text-anchor="end" font-size="10.7" fill="#cfd1d4" stroke="#cfd1d4" stroke-width="0.34">0.500</text>
<rect x="887.3" y="751.8" width="676.2" height="1" fill="#35373b"/>
<text x="883.0" y="755.1" text-anchor="end" font-size="10.7" fill="#cfd1d4" stroke="#cfd1d4" stroke-width="0.34">0.750</text>
<rect x="887.3" y="715.3" width="676.2" height="1" fill="#35373b"/>
<text x="883.0" y="718.6" text-anchor="end" font-size="10.7" fill="#cfd1d4" stroke="#cfd1d4" stroke-width="0.34">1.000</text>
<rect x="887.3" y="678.9" width="676.2" height="1" fill="#35373b"/>
<text x="883.0" y="682.2" text-anchor="end" font-size="10.7" fill="#cfd1d4" stroke="#cfd1d4" stroke-width="0.34">1.250</text>
<rect x="923.4" y="679.4" width="1" height="182.2" fill="#35373b"/>
<text x="923.9" y="877.8" text-anchor="middle" font-size="10.7" fill="#cfd1d4" textLength="26" lengthAdjust="spacingAndGlyphs" stroke="#cfd1d4" stroke-width="0.34">00:50</text>
<rect x="1015.9" y="679.4" width="1" height="182.2" fill="#35373b"/>
<text x="1016.4" y="877.8" text-anchor="middle" font-size="10.7" fill="#cfd1d4" textLength="26" lengthAdjust="spacingAndGlyphs" stroke="#cfd1d4" stroke-width="0.34">00:55</text>
<rect x="1108.3" y="679.4" width="1" height="182.2" fill="#35373b"/>
<text x="1108.8" y="877.8" text-anchor="middle" font-size="10.7" fill="#cfd1d4" textLength="26" lengthAdjust="spacingAndGlyphs" stroke="#cfd1d4" stroke-width="0.34">01:00</text>
<rect x="1200.8" y="679.4" width="1" height="182.2" fill="#35373b"/>
<text x="1201.3" y="877.8" text-anchor="middle" font-size="10.7" fill="#cfd1d4" textLength="26" lengthAdjust="spacingAndGlyphs" stroke="#cfd1d4" stroke-width="0.34">01:05</text>
<rect x="1293.3" y="679.4" width="1" height="182.2" fill="#35373b"/>
<text x="1293.8" y="877.8" text-anchor="middle" font-size="10.7" fill="#cfd1d4" textLength="26" lengthAdjust="spacingAndGlyphs" stroke="#cfd1d4" stroke-width="0.34">01:10</text>
<rect x="1385.8" y="679.4" width="1" height="182.2" fill="#35373b"/>
<text x="1386.2" y="877.8" text-anchor="middle" font-size="10.7" fill="#cfd1d4" textLength="26" lengthAdjust="spacingAndGlyphs" stroke="#cfd1d4" stroke-width="0.34">01:15</text>
<rect x="1478.2" y="679.4" width="1" height="182.2" fill="#35373b"/>
<text x="1478.7" y="877.8" text-anchor="middle" font-size="10.7" fill="#cfd1d4" textLength="26" lengthAdjust="spacingAndGlyphs" stroke="#cfd1d4" stroke-width="0.34">01:20</text>
<text transform="translate(849.2,776.3) rotate(-90)" text-anchor="middle" font-size="10.7" fill="#cfd1d4">Score</text>
<defs><linearGradient id="fg" x1="0" x2="0" y1="0" y2="1"><stop offset="0" stop-color="#7eb26d" stop-opacity="0.03"/><stop offset="1" stop-color="#7eb26d" stop-opacity="0"/></linearGradient></defs>
<rect x="906" y="817.9" width="592" height="43.7" fill="url(#fg)"/>
<polygon points="906.0,717.5 907.3,720.1 908.6,717.9 909.9,716.8 911.2,721.1 912.4,718.4 913.7,717.1 915.0,716.1 916.3,717.8 917.6,716.3 918.9,718.8 920.2,718.7 921.5,719.6 922.8,717.1 924.1,716.3 925.3,718.9 926.6,721.7 927.9,721.1 929.2,718.0 930.5,719.3 931.8,721.7 933.1,716.7 934.4,721.1 935.7,716.2 937.0,719.7 938.2,721.5 939.5,717.8 940.8,716.4 942.1,720.8 943.4,720.4 944.7,720.0 946.0,716.4 947.3,721.4 948.6,721.4 949.9,721.1 951.1,720.1 952.4,720.4 953.7,718.7 955.0,717.8 956.3,717.4 957.6,719.0 958.9,719.3 960.2,717.4 961.5,721.9 962.7,716.8 964.0,719.4 965.3,718.4 966.6,716.3 967.9,717.0 969.2,719.5 970.5,720.1 971.8,717.8 973.1,716.8 974.4,718.9 975.6,718.9 976.9,716.1 978.2,717.4 979.5,716.5 980.8,722.1 982.1,721.8 983.4,718.5 984.7,717.9 986.0,720.6 987.3,718.6 988.5,721.8 989.8,716.4 991.1,720.2 992.4,719.0 993.7,718.3 995.0,719.3 996.3,717.9 997.6,722.3 998.9,721.6 1000.2,721.0 1001.4,716.0 1002.7,718.0 1004.0,720.4 1005.3,719.0 1006.6,719.5 1007.9,720.8 1009.2,721.4 1010.5,720.7 1011.8,722.2 1013.1,721.9 1014.3,717.1 1015.6,719.1 1016.9,721.5 1018.2,721.8 1019.5,716.9 1020.8,720.6 1022.1,720.5 1023.4,716.6 1024.7,719.1 1025.9,716.8 1027.2,717.2 1028.5,718.5 1029.8,721.1 1031.1,721.9 1032.4,717.0 1033.7,716.5 1035.0,720.8 1036.3,721.5 1037.6,719.5 1038.8,720.9 1040.1,719.0 1041.4,717.9 1042.7,716.1 1044.0,717.9 1045.3,718.6 1046.6,720.2 1047.9,718.5 1049.2,718.4 1050.5,721.8 1051.7,720.3 1053.0,722.0 1054.3,721.3 1055.6,718.6 1056.9,716.6 1058.2,717.6 1059.5,720.8 1060.8,718.1 1062.1,718.4 1063.4,716.0 1064.6,720.3 1065.9,718.6 1067.2,722.3 1068.5,720.1 1069.8,720.4 1071.1,720.6 1072.4,721.0 1073.7,716.4 1075.0,721.1 1076.2,718.0 1077.5,719.6 1078.8,720.0 1080.1,717.9 1081.4,718.8 1082.7,718.3 1084.0,717.4 1085.3,718.8 1086.6,721.0 1087.9,716.1 1089.1,719.2 1090.4,716.3 1091.7,720.5 1093.0,719.6 1094.3,721.4 1095.6,717.3 1096.9,720.0 1098.2,719.4 1099.5,719.5 1100.8,721.7 1102.0,716.3 1103.3,721.9 1104.6,717.9 1105.9,718.9 1107.2,717.7 1108.5,721.9 1109.8,719.3 1111.1,716.4 1112.4,718.1 1113.7,719.6 1114.9,722.3 1116.2,719.6 1117.5,719.1 1118.8,718.9 1120.1,719.9 1121.4,718.1 1122.7,716.4 1124.0,716.1 1125.3,718.5 1126.5,720.8 1127.8,721.1 1129.1,721.2 1130.4,718.3 1131.7,716.0 1133.0,719.0 1134.3,717.6 1135.6,720.0 1136.9,718.5 1138.2,716.1 1139.4,722.2 1140.7,716.9 1142.0,722.1 1143.3,715.9 1144.6,720.9 1145.9,722.1 1147.2,717.4 1148.5,720.2 1149.8,717.7 1151.1,719.7 1152.3,719.3 1153.6,717.7 1154.9,718.6 1156.2,718.9 1157.5,722.3 1158.8,720.4 1160.1,718.7 1161.4,716.3 1162.7,719.2 1164.0,716.6 1165.2,721.1 1166.5,718.0 1167.8,716.6 1169.1,720.7 1170.4,719.3 1171.7,715.9 1173.0,720.7 1174.3,722.2 1175.6,720.8 1176.8,721.0 1178.1,716.9 1179.4,716.5 1180.7,718.8 1182.0,716.1 1183.3,716.9 1184.6,716.2 1185.9,720.1 1187.2,716.3 1188.5,716.5 1189.7,721.5 1191.0,721.6 1192.3,720.4 1193.6,720.2 1194.9,722.3 1196.2,720.0 1197.5,716.7 1198.8,717.4 1200.1,720.2 1201.4,717.1 1202.6,720.7 1203.9,718.2 1205.2,718.2 1206.5,719.5 1207.8,720.6 1209.1,719.5 1210.4,716.0 1211.7,717.7 1213.0,719.6 1214.3,720.5 1215.5,719.8 1216.8,721.2 1218.1,720.2 1219.4,721.8 1220.7,720.3 1222.0,720.4 1223.3,719.7 1224.6,719.3 1225.9,718.0 1227.2,720.2 1228.4,720.9 1229.7,716.5 1231.0,721.7 1232.3,718.0 1233.6,721.1 1234.9,720.9 1236.2,720.1 1237.5,720.2 1238.8,716.2 1240.0,719.5 1241.3,718.7 1242.6,717.6 1243.9,722.4 1245.2,716.4 1246.5,721.2 1247.8,719.0 1249.1,719.9 1250.4,717.0 1251.7,720.0 1252.9,716.7 1254.2,720.2 1255.5,717.9 1256.8,721.0 1258.1,719.5 1259.4,719.3 1260.7,716.7 1262.0,716.5 1263.3,720.3 1264.6,720.6 1265.8,719.6 1267.1,717.0 1268.4,721.9 1269.7,716.1 1271.0,717.1 1272.3,717.2 1273.6,718.8 1274.9,720.0 1276.2,715.9 1277.5,716.9 1278.7,717.1 1280.0,721.3 1281.3,716.3 1282.6,721.2 1283.9,721.7 1285.2,717.5 1286.5,716.5 1287.8,721.9 1289.1,721.1 1290.3,718.2 1291.6,717.0 1292.9,716.3 1294.2,718.3 1295.5,720.4 1296.8,719.7 1298.1,721.9 1299.4,716.8 1300.7,718.1 1302.0,720.8 1303.2,720.9 1304.5,716.7 1305.8,716.3 1307.1,720.0 1308.4,717.0 1309.7,715.9 1311.0,722.4 1312.3,716.2 1313.6,716.0 1314.9,717.6 1316.1,716.5 1317.4,716.4 1318.7,720.8 1320.0,722.3 1321.3,718.7 1322.6,718.6 1323.9,718.1 1325.2,720.9 1326.5,721.4 1327.8,719.2 1329.0,721.4 1330.3,719.0 1331.6,721.8 1332.9,720.8 1334.2,720.1 1335.5,718.8 1336.8,721.8 1338.1,717.7 1339.4,716.4 1340.6,716.2 1341.9,719.6 1343.2,718.1 1344.5,719.0 1345.8,719.5 1347.1,715.9 1348.4,719.0 1349.7,716.0 1351.0,721.7 1352.3,717.4 1353.5,718.2 1354.8,720.1 1356.1,716.2 1357.4,721.9 1358.7,719.9 1360.0,720.3 1361.3,717.4 1362.6,718.1 1363.9,716.4 1365.2,721.4 1366.4,722.1 1367.7,718.8 1369.0,716.5 1370.3,722.4 1371.6,719.6 1372.9,722.3 1374.2,721.5 1375.5,719.9 1376.8,722.0 1378.1,719.7 1379.3,720.7 1380.6,716.3 1381.9,717.5 1383.2,719.9 1384.5,720.3 1385.8,720.5 1387.1,718.8 1388.4,717.1 1389.7,722.1 1390.9,717.1 1392.2,721.8 1393.5,718.8 1394.8,721.2 1396.1,716.3 1397.4,722.2 1398.7,720.5 1400.0,719.6 1401.3,720.4 1402.6,719.0 1403.8,719.4 1405.1,721.0 1406.4,719.0 1407.7,717.8 1409.0,720.8 1410.3,717.2 1411.6,719.9 1412.9,718.5 1414.2,716.0 1415.5,718.3 1416.7,717.6 1418.0,721.2 1419.3,722.4 1420.6,721.5 1421.9,718.1 1423.2,719.1 1424.5,718.4 1425.8,718.3 1427.1,722.0 1428.4,717.1 1429.6,722.1 1430.9,717.2 1432.2,716.4 1433.5,722.4 1434.8,722.4 1436.1,716.3 1437.4,717.8 1438.7,718.7 1440.0,717.1 1441.3,718.1 1442.5,716.5 1443.8,716.8 1445.1,718.6 1446.4,716.3 1447.7,721.3 1449.0,719.3 1450.3,719.2 1451.6,721.3 1452.9,719.1 1454.1,718.6 1455.4,720.6 1456.7,716.0 1458.0,720.8 1459.3,719.9 1460.6,722.0 1461.9,721.8 1463.2,718.6 1464.5,720.7 1465.8,716.7 1467.0,720.8 1468.3,721.3 1469.6,719.4 1470.9,716.8 1472.2,721.4 1473.5,717.6 1474.8,721.2 1476.1,719.9 1477.4,719.4 1478.7,716.0 1479.9,721.9 1481.2,717.0 1482.5,721.2 1483.8,716.2 1485.1,717.4 1486.4,719.6 1487.7,716.5 1489.0,720.4 1490.3,719.9 1491.6,717.2 1492.8,718.1 1494.1,722.3 1495.4,718.2 1496.7,716.8 1498.0,718.1 1498.0,814.5 1496.7,819.2 1495.4,815.2 1494.1,812.1 1492.8,817.6 1491.6,815.1 1490.3,815.3 1489.0,814.6 1487.7,817.4 1486.4,810.4 1485.1,814.5 1483.8,811.8 1482.5,809.5 1481.2,812.0 1479.9,812.4 1478.7,809.2 1477.4,813.4 1476.1,809.3 1474.8,815.3 1473.5,815.6 1472.2,811.2 1470.9,811.5 1469.6,819.1 1468.3,812.2 1467.0,811.1 1465.8,812.0 1464.5,810.6 1463.2,809.3 1461.9,813.3 1460.6,810.9 1459.3,811.5 1458.0,812.3 1456.7,815.6 1455.4,815.2 1454.1,812.1 1452.9,812.8 1451.6,810.6 1450.3,811.8 1449.0,814.3 1447.7,814.9 1446.4,818.8 1445.1,814.2 1443.8,810.9 1442.5,817.1 1441.3,810.5 1440.0,818.2 1438.7,811.6 1437.4,816.1 1436.1,811.1 1434.8,811.7 1433.5,812.8 1432.2,816.5 1430.9,813.6 1429.6,814.1 1428.4,815.0 1427.1,815.1 1425.8,811.1 1424.5,817.4 1423.2,809.4 1421.9,813.5 1420.6,811.8 1419.3,813.9 1418.0,813.9 1416.7,809.2 1415.5,815.9 1414.2,811.5 1412.9,810.4 1411.6,812.7 1410.3,814.2 1409.0,814.7 1407.7,814.3 1406.4,810.8 1405.1,818.0 1403.8,816.0 1402.6,809.6 1401.3,812.5 1400.0,818.9 1398.7,809.3 1397.4,813.0 1396.1,819.3 1394.8,815.3 1393.5,816.3 1392.2,812.4 1390.9,811.4 1389.7,809.8 1388.4,817.3 1387.1,814.7 1385.8,812.7 1384.5,813.9 1383.2,815.0 1381.9,813.7 1380.6,817.7 1379.3,814.0 1378.1,810.2 1376.8,815.1 1375.5,812.4 1374.2,814.6 1372.9,813.9 1371.6,815.5 1370.3,814.8 1369.0,814.2 1367.7,814.3 1366.4,815.1 1365.2,818.5 1363.9,809.7 1362.6,815.7 1361.3,813.2 1360.0,810.2 1358.7,816.0 1357.4,817.4 1356.1,815.8 1354.8,810.6 1353.5,812.5 1352.3,816.1 1351.0,814.3 1349.7,819.3 1348.4,811.6 1347.1,813.1 1345.8,810.5 1344.5,815.4 1343.2,814.4 1341.9,812.5 1340.6,812.6 1339.4,811.9 1338.1,814.2 1336.8,814.6 1335.5,817.3 1334.2,817.0 1332.9,814.3 1331.6,812.8 1330.3,813.3 1329.0,811.4 1327.8,812.7 1326.5,809.6 1325.2,811.0 1323.9,815.3 1322.6,813.5 1321.3,813.0 1320.0,811.2 1318.7,819.0 1317.4,814.7 1316.1,810.9 1314.9,812.5 1313.6,811.2 1312.3,814.1 1311.0,810.5 1309.7,816.3 1308.4,813.8 1307.1,811.6 1305.8,812.2 1304.5,817.0 1303.2,812.4 1302.0,815.1 1300.7,814.5 1299.4,814.5 1298.1,809.2 1296.8,815.3 1295.5,809.7 1294.2,814.8 1292.9,815.7 1291.6,812.0 1290.3,812.9 1289.1,813.1 1287.8,815.6 1286.5,817.8 1285.2,811.2 1283.9,816.3 1282.6,818.0 1281.3,811.7 1280.0,817.4 1278.7,815.8 1277.5,815.8 1276.2,818.2 1274.9,812.3 1273.6,816.6 1272.3,809.7 1271.0,809.4 1269.7,812.0 1268.4,810.1 1267.1,813.8 1265.8,809.6 1264.6,818.0 1263.3,811.3 1262.0,815.4 1260.7,818.5 1259.4,810.8 1258.1,812.4 1256.8,815.6 1255.5,812.2 1254.2,819.3 1252.9,814.8 1251.7,810.8 1250.4,811.3 1249.1,818.5 1247.8,815.0 1246.5,810.9 1245.2,812.8 1243.9,815.0 1242.6,812.7 1241.3,814.4 1240.0,813.4 1238.8,812.7 1237.5,814.1 1236.2,815.8 1234.9,818.8 1233.6,813.0 1232.3,816.7 1231.0,810.9 1229.7,812.8 1228.4,811.3 1227.2,812.1 1225.9,819.1 1224.6,815.5 1223.3,810.4 1222.0,815.6 1220.7,813.9 1219.4,812.8 1218.1,814.9 1216.8,811.7 1215.5,813.5 1214.3,815.9 1213.0,815.3 1211.7,815.4 1210.4,809.4 1209.1,811.7 1207.8,813.4 1206.5,812.2 1205.2,815.2 1203.9,813.6 1202.6,812.2 1201.4,812.2 1200.1,815.8 1198.8,817.6 1197.5,817.3 1196.2,810.6 1194.9,814.9 1193.6,815.5 1192.3,810.7 1191.0,809.7 1189.7,816.2 1188.5,812.6 1187.2,812.5 1185.9,814.2 1184.6,814.2 1183.3,816.9 1182.0,811.3 1180.7,816.1 1179.4,813.8 1178.1,812.3 1176.8,814.5 1175.6,815.9 1174.3,815.2 1173.0,814.6 1171.7,819.3 1170.4,816.3 1169.1,812.5 1167.8,813.3 1166.5,812.9 1165.2,815.0 1164.0,814.4 1162.7,818.3 1161.4,812.0 1160.1,814.8 1158.8,810.4 1157.5,816.8 1156.2,810.0 1154.9,812.9 1153.6,815.4 1152.3,809.4 1151.1,815.8 1149.8,812.5 1148.5,814.7 1147.2,809.8 1145.9,810.5 1144.6,809.3 1143.3,813.2 1142.0,811.1 1140.7,814.1 1139.4,810.8 1138.2,814.5 1136.9,816.0 1135.6,811.7 1134.3,812.2 1133.0,810.7 1131.7,814.1 1130.4,811.6 1129.1,815.3 1127.8,814.1 1126.5,813.8 1125.3,815.0 1124.0,811.2 1122.7,814.9 1121.4,818.7 1120.1,812.3 1118.8,814.2 1117.5,817.8 1116.2,813.2 1114.9,812.1 1113.7,818.9 1112.4,816.7 1111.1,812.7 1109.8,813.0 1108.5,811.6 1107.2,814.0 1105.9,811.5 1104.6,814.4 1103.3,810.1 1102.0,811.4 1100.8,811.0 1099.5,811.2 1098.2,813.3 1096.9,813.2 1095.6,811.1 1094.3,809.6 1093.0,812.6 1091.7,815.6 1090.4,817.6 1089.1,812.2 1087.9,814.4 1086.6,815.2 1085.3,814.0 1084.0,818.5 1082.7,817.3 1081.4,816.0 1080.1,813.9 1078.8,814.2 1077.5,811.7 1076.2,812.0 1075.0,813.1 1073.7,819.3 1072.4,814.3 1071.1,817.5 1069.8,813.7 1068.5,811.7 1067.2,813.8 1065.9,811.0 1064.6,815.3 1063.4,817.5 1062.1,811.8 1060.8,814.1 1059.5,814.1 1058.2,811.2 1056.9,815.7 1055.6,811.7 1054.3,817.1 1053.0,811.0 1051.7,815.4 1050.5,812.2 1049.2,812.9 1047.9,814.3 1046.6,814.7 1045.3,812.3 1044.0,811.5 1042.7,812.4 1041.4,814.0 1040.1,811.2 1038.8,817.1 1037.6,813.4 1036.3,810.4 1035.0,810.8 1033.7,817.7 1032.4,816.2 1031.1,811.2 1029.8,811.7 1028.5,819.1 1027.2,816.0 1025.9,812.3 1024.7,814.7 1023.4,817.4 1022.1,817.7 1020.8,812.8 1019.5,816.5 1018.2,813.5 1016.9,816.0 1015.6,809.5 1014.3,815.7 1013.1,816.2 1011.8,813.1 1010.5,809.3 1009.2,810.2 1007.9,818.9 1006.6,814.2 1005.3,813.4 1004.0,815.6 1002.7,816.0 1001.4,812.9 1000.2,810.1 998.9,810.9 997.6,811.2 996.3,815.9 995.0,809.2 993.7,816.0 992.4,814.4 991.1,812.8 989.8,816.1 988.5,811.6 987.3,813.7 986.0,815.8 984.7,810.6 983.4,818.5 982.1,810.0 980.8,817.1 979.5,816.8 978.2,811.4 976.9,811.7 975.6,815.4 974.4,817.0 973.1,812.3 971.8,810.0 970.5,811.9 969.2,812.5 967.9,815.6 966.6,818.9 965.3,811.4 964.0,813.0 962.7,819.3 961.5,811.6 960.2,814.0 958.9,817.2 957.6,814.9 956.3,812.6 955.0,810.0 953.7,818.6 952.4,817.3 951.1,811.1 949.9,813.4 948.6,812.1 947.3,815.4 946.0,814.3 944.7,812.0 943.4,813.7 942.1,816.0 940.8,812.9 939.5,809.2 938.2,810.0 937.0,815.1 935.7,815.2 934.4,811.7 933.1,810.0 931.8,818.6 930.5,814.0 929.2,814.3 927.9,811.5 926.6,812.5 925.3,813.2 924.1,809.9 922.8,814.1 921.5,810.8 920.2,811.3 918.9,812.7 917.6,817.4 916.3,812.5 915.0,809.5 913.7,811.5 912.4,809.3 911.2,810.3 909.9,816.6 908.6,814.5 907.3,816.0 906.0,809.6" fill="#7eb26d" stroke="#7eb26d" stroke-width="1" stroke-linejoin="round"/>
<path d="M1361.3 809.1V823.9M1475.2 809.1V819.9M1310.8 809.1V817.9M1300.1 809.1V821.9M1264.3 809.1V816.3M1126.5 809.1V821.1M1230.4 809.1V815.8M1335.2 809.1V815.8M1127.1 809.1V826.0M1363.6 809.1V819.8M1405.0 809.1V816.0M1068.0 809.1V824.9M1382.1 809.1V818.7M1067.8 809.1V816.0M1040.9 809.1V816.0M1485.0 809.1V817.9M1232.9 809.1V821.0M1299.6 809.1V821.0M1381.3 809.1V821.2M1430.8 809.1V826.1M1132.0 809.1V825.6M1323.6 809.1V820.5M987.2 809.1V817.2M1169.5 809.1V826.5M910.3 809.1V816.1M1333.0 809.1V824.4M957.2 809.1V824.1M1116.8 809.1V817.9M1008.5 809.1V815.0M1437.0 809.1V815.0M1288.6 809.1V819.5M1450.9 809.1V824.3M958.8 809.1V819.8M1333.1 809.1V821.1M1083.2 809.1V820.4M1462.1 809.1V815.3M986.5 809.1V817.1M1323.7 809.1V819.5M1368.3 809.1V818.3M1364.1 809.1V821.0M1323.1 809.1V822.2M1047.5 809.1V817.9M1186.0 809.1V820.9M1340.6 809.1V816.7M1074.6 809.1V819.5M1373.4 809.1V818.5M1165.6 809.1V817.7M1119.4 809.1V819.2M1411.4 809.1V822.7M1159.9 809.1V825.8M1225.2 809.1V816.1M1308.8 809.1V818.3M1389.1 809.1V826.7M950.3 809.1V825.3M1136.9 809.1V821.3M1052.7 809.1V823.6M1063.2 809.1V820.7M993.1 809.1V820.3M1399.9 809.1V824.8M1057.3 809.1V817.1M1033.3 809.1V818.8M1219.2 809.1V824.8M1456.2 809.1V818.4M926.1 809.1V818.7M1032.8 809.1V820.9M1382.6 809.1V818.5M1131.6 809.1V819.0M1425.0 809.1V818.1M993.9 809.1V823.3M1023.8 809.1V819.7M1385.5 809.1V819.4M1087.3 809.1V821.5M928.6 809.1V821.5M1073.7 809.1V818.9M1385.4 809.1V821.4M1455.2 809.1V818.6M1176.2 809.1V819.2M1062.7 809.1V817.4M1395.6 809.1V818.4M1271.1 809.1V826.4M1334.0 809.1V823.5M1397.4 809.1V821.3M1461.6 809.1V824.3M1014.7 809.1V818.9M1460.0 809.1V816.1M1278.4 809.1V817.6M1446.0 809.1V823.7M1039.3 809.1V816.0M964.1 809.1V820.7M1020.2 809.1V824.8M1470.7 809.1V815.0M1244.3 809.1V825.6M1336.7 809.1V824.5M967.4 809.1V815.5M960.5 809.1V826.8M1142.5 809.1V826.9M929.9 809.1V815.7M1139.5 809.1V815.5M1004.0 809.1V818.8M1174.1 809.1V820.7M1166.8 809.1V821.4M1275.9 809.1V815.4M1173.6 809.1V817.4M1473.7 809.1V816.5M1142.7 809.1V816.8M1300.5 809.1V815.9M1178.5 809.1V820.3M993.8 809.1V815.2M1489.2 809.1V820.8M1056.7 809.1V822.4M1400.3 809.1V821.4M1219.7 809.1V825.4M918.2 809.1V820.8M1152.6 809.1V821.8M979.6 809.1V820.4M1049.4 809.1V816.5M1250.7 809.1V827.1M1299.2 809.1V826.0M1298.5 809.1V819.2M1455.3 809.1V819.0M1263.8 809.1V826.8M964.1 809.1V817.9M1332.2 809.1V818.0M1275.3 809.1V822.0M1428.5 809.1V820.4M1017.9 809.1V822.2M1160.4 809.1V821.7M1389.8 809.1V820.5M1118.7 809.1V818.3M923.7 809.1V827.2M1475.0 809.1V821.4M1076.9 809.1V821.9M1418.7 809.1V818.6M1174.4 809.1V818.0M1382.9 809.1V824.4M920.8 809.1V819.6M1115.1 809.1V825.1M1248.1 809.1V826.5M1034.6 809.1V821.5M1162.4 809.1V822.0M1435.7 809.1V821.5M1181.3 809.1V821.8M1242.9 809.1V820.0M1002.6 809.1V818.9M1407.1 809.1V824.4M990.5 809.1V822.1M1453.1 809.1V825.1M908.7 809.1V819.3M1374.5 809.1V818.1M1271.1 809.1V826.3M1459.4 809.1V827.0M1486.6 809.1V818.2M1333.6 809.1V822.1M1485.3 809.1V821.0M1420.6 809.1V818.4M1002.3 809.1V821.9M1340.4 809.1V816.8M1415.8 809.1V817.9M1321.3 809.1V816.5M913.8 809.1V817.7M1060.9 809.1V819.9M1054.5 809.1V818.2M1191.2 809.1V818.6M1139.7 809.1V819.0M1106.7 809.1V820.7M1457.7 809.1V818.5M1486.6 809.1V822.1M1465.1 809.1V827.2M1068.1 809.1V820.9M1461.4 809.1V816.9M927.9 809.1V819.4M1025.8 809.1V819.6M1200.0 809.1V815.2M1200.6 809.1V819.1M908.4 809.1V818.3M1298.7 809.1V817.5M1033.9 809.1V817.2M1248.1 809.1V817.1M998.9 809.1V821.8M1154.5 809.1V816.3M1259.0 809.1V815.9M1399.8 809.1V821.5M1175.6 809.1V823.4M970.9 809.1V817.8M987.1 809.1V820.0M913.6 809.1V823.7M1366.9 809.1V825.7M962.3 809.1V821.8M1198.8 809.1V821.9M1038.3 809.1V821.2M1180.3 809.1V819.4M976.0 809.1V816.9M997.7 809.1V816.8M1257.9 809.1V819.5M924.4 809.1V821.4M1106.6 809.1V819.0M959.2 809.1V821.5M1334.5 809.1V820.9M932.3 809.1V819.5M1248.1 809.1V818.3M1130.9 809.1V825.5M1239.0 809.1V822.7M933.2 809.1V819.9M1004.9 809.1V817.4M992.1 809.1V817.8M1450.8 809.1V825.1M1421.1 809.1V821.1M1425.2 809.1V816.9M1365.4 809.1V815.5M979.5 809.1V817.2" fill="none" stroke="#7eb26d" stroke-width="1.4"/>
<g fill="#7eb26d"><circle cx="1361.3" cy="823.9" r="1.5"/><circle cx="1475.2" cy="819.9" r="1.5"/><circle cx="1310.8" cy="817.9" r="1.5"/><circle cx="1300.1" cy="821.9" r="1.5"/><circle cx="1264.3" cy="816.3" r="1.5"/><circle cx="1126.5" cy="821.1" r="1.5"/><circle cx="1230.4" cy="815.8" r="1.5"/><circle cx="1335.2" cy="815.8" r="1.5"/><circle cx="1127.1" cy="826.0" r="1.5"/><circle cx="1363.6" cy="819.8" r="1.5"/><circle cx="1405.0" cy="816.0" r="1.5"/><circle cx="1068.0" cy="824.9" r="1.5"/><circle cx="1382.1" cy="818.7" r="1.5"/><circle cx="1067.8" cy="816.0" r="1.5"/><circle cx="1040.9" cy="816.0" r="1.5"/><circle cx="1485.0" cy="817.9" r="1.5"/><circle cx="1232.9" cy="821.0" r="1.5"/><circle cx="1299.6" cy="821.0" r="1.5"/><circle cx="1381.3" cy="821.2" r="1.5"/><circle cx="1430.8" cy="826.1" r="1.5"/><circle cx="1132.0" cy="825.6" r="1.5"/><circle cx="1323.6" cy="820.5" r="1.5"/><circle cx="987.2" cy="817.2" r="1.5"/><circle cx="1169.5" cy="826.5" r="1.5"/><circle cx="910.3" cy="816.1" r="1.5"/><circle cx="1333.0" cy="824.4" r="1.5"/><circle cx="957.2" cy="824.1" r="1.5"/><circle cx="1116.8" cy="817.9" r="1.5"/><circle cx="1008.5" cy="815.0" r="1.5"/><circle cx="1437.0" cy="815.0" r="1.5"/><circle cx="1288.6" cy="819.5" r="1.5"/><circle cx="1450.9" cy="824.3" r="1.5"/><circle cx="958.8" cy="819.8" r="1.5"/><circle cx="1333.1" cy="821.1" r="1.5"/><circle cx="1083.2" cy="820.4" r="1.5"/><circle cx="1462.1" cy="815.3" r="1.5"/><circle cx="986.5" cy="817.1" r="1.5"/><circle cx="1323.7" cy="819.5" r="1.5"/><circle cx="1368.3" cy="818.3" r="1.5"/><circle cx="1364.1" cy="821.0" r="1.5"/><circle cx="1323.1" cy="822.2" r="1.5"/><circle cx="1047.5" cy="817.9" r="1.5"/><circle cx="1186.0" cy="820.9" r="1.5"/><circle cx="1340.6" cy="816.7" r="1.5"/><circle cx="1074.6" cy="819.5" r="1.5"/><circle cx="1373.4" cy="818.5" r="1.5"/><circle cx="1165.6" cy="817.7" r="1.5"/><circle cx="1119.4" cy="819.2" r="1.5"/><circle cx="1411.4" cy="822.7" r="1.5"/><circle cx="1159.9" cy="825.8" r="1.5"/><circle cx="1225.2" cy="816.1" r="1.5"/><circle cx="1308.8" cy="818.3" r="1.5"/><circle cx="1389.1" cy="826.7" r="1.5"/><circle cx="950.3" cy="825.3" r="1.5"/><circle cx="1136.9" cy="821.3" r="1.5"/><circle cx="1052.7" cy="823.6" r="1.5"/><circle cx="1063.2" cy="820.7" r="1.5"/><circle cx="993.1" cy="820.3" r="1.5"/><circle cx="1399.9" cy="824.8" r="1.5"/><circle cx="1057.3" cy="817.1" r="1.5"/><circle cx="1033.3" cy="818.8" r="1.5"/><circle cx="1219.2" cy="824.8" r="1.5"/><circle cx="1456.2" cy="818.4" r="1.5"/><circle cx="926.1" cy="818.7" r="1.5"/><circle cx="1032.8" cy="820.9" r="1.5"/><circle cx="1382.6" cy="818.5" r="1.5"/><circle cx="1131.6" cy="819.0" r="1.5"/><circle cx="1425.0" cy="818.1" r="1.5"/><circle cx="993.9" cy="823.3" r="1.5"/><circle cx="1023.8" cy="819.7" r="1.5"/><circle cx="1385.5" cy="819.4" r="1.5"/><circle cx="1087.3" cy="821.5" r="1.5"/><circle cx="928.6" cy="821.5" r="1.5"/><circle cx="1073.7" cy="818.9" r="1.5"/><circle cx="1385.4" cy="821.4" r="1.5"/><circle cx="1455.2" cy="818.6" r="1.5"/><circle cx="1176.2" cy="819.2" r="1.5"/><circle cx="1062.7" cy="817.4" r="1.5"/><circle cx="1395.6" cy="818.4" r="1.5"/><circle cx="1271.1" cy="826.4" r="1.5"/><circle cx="1334.0" cy="823.5" r="1.5"/><circle cx="1397.4" cy="821.3" r="1.5"/><circle cx="1461.6" cy="824.3" r="1.5"/><circle cx="1014.7" cy="818.9" r="1.5"/><circle cx="1460.0" cy="816.1" r="1.5"/><circle cx="1278.4" cy="817.6" r="1.5"/><circle cx="1446.0" cy="823.7" r="1.5"/><circle cx="1039.3" cy="816.0" r="1.5"/><circle cx="964.1" cy="820.7" r="1.5"/><circle cx="1020.2" cy="824.8" r="1.5"/><circle cx="1470.7" cy="815.0" r="1.5"/><circle cx="1244.3" cy="825.6" r="1.5"/><circle cx="1336.7" cy="824.5" r="1.5"/><circle cx="967.4" cy="815.5" r="1.5"/><circle cx="960.5" cy="826.8" r="1.5"/><circle cx="1142.5" cy="826.9" r="1.5"/><circle cx="929.9" cy="815.7" r="1.5"/><circle cx="1139.5" cy="815.5" r="1.5"/><circle cx="1004.0" cy="818.8" r="1.5"/><circle cx="1174.1" cy="820.7" r="1.5"/><circle cx="1166.8" cy="821.4" r="1.5"/><circle cx="1275.9" cy="815.4" r="1.5"/><circle cx="1173.6" cy="817.4" r="1.5"/><circle cx="1473.7" cy="816.5" r="1.5"/><circle cx="1142.7" cy="816.8" r="1.5"/><circle cx="1300.5" cy="815.9" r="1.5"/><circle cx="1178.5" cy="820.3" r="1.5"/><circle cx="993.8" cy="815.2" r="1.5"/><circle cx="1489.2" cy="820.8" r="1.5"/><circle cx="1056.7" cy="822.4" r="1.5"/><circle cx="1400.3" cy="821.4" r="1.5"/><circle cx="1219.7" cy="825.4" r="1.5"/><circle cx="918.2" cy="820.8" r="1.5"/><circle cx="1152.6" cy="821.8" r="1.5"/><circle cx="979.6" cy="820.4" r="1.5"/><circle cx="1049.4" cy="816.5" r="1.5"/><circle cx="1250.7" cy="827.1" r="1.5"/><circle cx="1299.2" cy="826.0" r="1.5"/><circle cx="1298.5" cy="819.2" r="1.5"/><circle cx="1455.3" cy="819.0" r="1.5"/><circle cx="1263.8" cy="826.8" r="1.5"/><circle cx="964.1" cy="817.9" r="1.5"/><circle cx="1332.2" cy="818.0" r="1.5"/><circle cx="1275.3" cy="822.0" r="1.5"/><circle cx="1428.5" cy="820.4" r="1.5"/><circle cx="1017.9" cy="822.2" r="1.5"/><circle cx="1160.4" cy="821.7" r="1.5"/><circle cx="1389.8" cy="820.5" r="1.5"/><circle cx="1118.7" cy="818.3" r="1.5"/><circle cx="923.7" cy="827.2" r="1.5"/><circle cx="1475.0" cy="821.4" r="1.5"/><circle cx="1076.9" cy="821.9" r="1.5"/><circle cx="1418.7" cy="818.6" r="1.5"/><circle cx="1174.4" cy="818.0" r="1.5"/><circle cx="1382.9" cy="824.4" r="1.5"/><circle cx="920.8" cy="819.6" r="1.5"/><circle cx="1115.1" cy="825.1" r="1.5"/><circle cx="1248.1" cy="826.5" r="1.5"/><circle cx="1034.6" cy="821.5" r="1.5"/><circle cx="1162.4" cy="822.0" r="1.5"/><circle cx="1435.7" cy="821.5" r="1.5"/><circle cx="1181.3" cy="821.8" r="1.5"/><circle cx="1242.9" cy="820.0" r="1.5"/><circle cx="1002.6" cy="818.9" r="1.5"/><circle cx="1407.1" cy="824.4" r="1.5"/><circle cx="990.5" cy="822.1" r="1.5"/><circle cx="1453.1" cy="825.1" r="1.5"/><circle cx="908.7" cy="819.3" r="1.5"/><circle cx="1374.5" cy="818.1" r="1.5"/><circle cx="1271.1" cy="826.3" r="1.5"/><circle cx="1459.4" cy="827.0" r="1.5"/><circle cx="1486.6" cy="818.2" r="1.5"/><circle cx="1333.6" cy="822.1" r="1.5"/><circle cx="1485.3" cy="821.0" r="1.5"/><circle cx="1420.6" cy="818.4" r="1.5"/><circle cx="1002.3" cy="821.9" r="1.5"/><circle cx="1340.4" cy="816.8" r="1.5"/><circle cx="1415.8" cy="817.9" r="1.5"/><circle cx="1321.3" cy="816.5" r="1.5"/><circle cx="913.8" cy="817.7" r="1.5"/><circle cx="1060.9" cy="819.9" r="1.5"/><circle cx="1054.5" cy="818.2" r="1.5"/><circle cx="1191.2" cy="818.6" r="1.5"/><circle cx="1139.7" cy="819.0" r="1.5"/><circle cx="1106.7" cy="820.7" r="1.5"/><circle cx="1457.7" cy="818.5" r="1.5"/><circle cx="1486.6" cy="822.1" r="1.5"/><circle cx="1465.1" cy="827.2" r="1.5"/><circle cx="1068.1" cy="820.9" r="1.5"/><circle cx="1461.4" cy="816.9" r="1.5"/><circle cx="927.9" cy="819.4" r="1.5"/><circle cx="1025.8" cy="819.6" r="1.5"/><circle cx="1200.0" cy="815.2" r="1.5"/><circle cx="1200.6" cy="819.1" r="1.5"/><circle cx="908.4" cy="818.3" r="1.5"/><circle cx="1298.7" cy="817.5" r="1.5"/><circle cx="1033.9" cy="817.2" r="1.5"/><circle cx="1248.1" cy="817.1" r="1.5"/><circle cx="998.9" cy="821.8" r="1.5"/><circle cx="1154.5" cy="816.3" r="1.5"/><circle cx="1259.0" cy="815.9" r="1.5"/><circle cx="1399.8" cy="821.5" r="1.5"/><circle cx="1175.6" cy="823.4" r="1.5"/><circle cx="970.9" cy="817.8" r="1.5"/><circle cx="987.1" cy="820.0" r="1.5"/><circle cx="913.6" cy="823.7" r="1.5"/><circle cx="1366.9" cy="825.7" r="1.5"/><circle cx="962.3" cy="821.8" r="1.5"/><circle cx="1198.8" cy="821.9" r="1.5"/><circle cx="1038.3" cy="821.2" r="1.5"/><circle cx="1180.3" cy="819.4" r="1.5"/><circle cx="976.0" cy="816.9" r="1.5"/><circle cx="997.7" cy="816.8" r="1.5"/><circle cx="1257.9" cy="819.5" r="1.5"/><circle cx="924.4" cy="821.4" r="1.5"/><circle cx="1106.6" cy="819.0" r="1.5"/><circle cx="959.2" cy="821.5" r="1.5"/><circle cx="1334.5" cy="820.9" r="1.5"/><circle cx="932.3" cy="819.5" r="1.5"/><circle cx="1248.1" cy="818.3" r="1.5"/><circle cx="1130.9" cy="825.5" r="1.5"/><circle cx="1239.0" cy="822.7" r="1.5"/><circle cx="933.2" cy="819.9" r="1.5"/><circle cx="1004.9" cy="817.4" r="1.5"/><circle cx="992.1" cy="817.8" r="1.5"/><circle cx="1450.8" cy="825.1" r="1.5"/><circle cx="1421.1" cy="821.1" r="1.5"/><circle cx="1425.2" cy="816.9" r="1.5"/><circle cx="1365.4" cy="815.5" r="1.5"/><circle cx="979.5" cy="817.2" r="1.5"/><circle cx="1365.3" cy="718.3" r="1.25"/><circle cx="937.0" cy="718.7" r="1.25"/><circle cx="1018.9" cy="716.9" r="1.25"/><circle cx="1274.6" cy="716.9" r="1.25"/><circle cx="1146.6" cy="718.9" r="1.25"/><circle cx="1137.2" cy="718.2" r="1.25"/><circle cx="1294.4" cy="715.9" r="1.25"/><circle cx="1337.8" cy="719.2" r="1.25"/><circle cx="1362.5" cy="717.4" r="1.25"/><circle cx="1264.1" cy="718.8" r="1.25"/><circle cx="1344.2" cy="716.0" r="1.25"/><circle cx="1486.2" cy="717.7" r="1.25"/><circle cx="1412.8" cy="716.8" r="1.25"/><circle cx="966.3" cy="715.9" r="1.25"/><circle cx="1316.7" cy="716.2" r="1.25"/><circle cx="1295.8" cy="716.7" r="1.25"/><circle cx="1327.2" cy="717.3" r="1.25"/><circle cx="1204.9" cy="718.5" r="1.25"/><circle cx="1134.1" cy="717.4" r="1.25"/><circle cx="1318.9" cy="718.0" r="1.25"/><circle cx="1317.5" cy="717.9" r="1.25"/><circle cx="1262.8" cy="718.7" r="1.25"/><circle cx="1191.4" cy="718.4" r="1.25"/><circle cx="1266.5" cy="715.9" r="1.25"/><circle cx="1390.9" cy="717.0" r="1.25"/><circle cx="1392.4" cy="718.3" r="1.25"/><circle cx="1167.9" cy="716.1" r="1.25"/><circle cx="957.5" cy="718.0" r="1.25"/><circle cx="1015.1" cy="717.2" r="1.25"/><circle cx="1228.7" cy="719.5" r="1.25"/><circle cx="973.7" cy="718.8" r="1.25"/><circle cx="1343.5" cy="717.1" r="1.25"/><circle cx="1055.0" cy="718.5" r="1.25"/><circle cx="1048.7" cy="718.2" r="1.25"/><circle cx="1349.9" cy="716.8" r="1.25"/><circle cx="1322.1" cy="718.7" r="1.25"/><circle cx="1048.7" cy="716.3" r="1.25"/><circle cx="962.7" cy="716.8" r="1.25"/><circle cx="1200.9" cy="716.0" r="1.25"/><circle cx="1111.8" cy="716.3" r="1.25"/><circle cx="1243.3" cy="718.5" r="1.25"/><circle cx="1334.5" cy="718.4" r="1.25"/><circle cx="1230.3" cy="717.3" r="1.25"/><circle cx="1415.7" cy="716.4" r="1.25"/><circle cx="1196.9" cy="718.9" r="1.25"/><circle cx="938.0" cy="716.4" r="1.25"/><circle cx="1295.8" cy="716.5" r="1.25"/><circle cx="1341.8" cy="717.1" r="1.25"/><circle cx="1059.8" cy="718.7" r="1.25"/><circle cx="1044.4" cy="716.1" r="1.25"/><circle cx="1325.5" cy="719.0" r="1.25"/><circle cx="1419.1" cy="718.5" r="1.25"/><circle cx="1144.9" cy="717.9" r="1.25"/><circle cx="1311.7" cy="718.7" r="1.25"/><circle cx="1443.1" cy="718.2" r="1.25"/><circle cx="1029.1" cy="718.1" r="1.25"/><circle cx="1205.4" cy="716.9" r="1.25"/><circle cx="1080.1" cy="715.9" r="1.25"/><circle cx="1154.0" cy="716.3" r="1.25"/><circle cx="1041.5" cy="716.5" r="1.25"/><circle cx="1276.5" cy="718.6" r="1.25"/><circle cx="925.4" cy="717.6" r="1.25"/><circle cx="1225.6" cy="718.4" r="1.25"/><circle cx="1270.3" cy="718.8" r="1.25"/><circle cx="907.2" cy="717.5" r="1.25"/><circle cx="1458.6" cy="717.0" r="1.25"/><circle cx="961.7" cy="717.8" r="1.25"/><circle cx="1106.3" cy="716.2" r="1.25"/><circle cx="1193.3" cy="717.2" r="1.25"/><circle cx="1397.5" cy="717.9" r="1.25"/><circle cx="1271.0" cy="716.3" r="1.25"/><circle cx="1017.6" cy="716.5" r="1.25"/><circle cx="1319.1" cy="718.0" r="1.25"/><circle cx="1023.2" cy="716.2" r="1.25"/><circle cx="1154.0" cy="718.8" r="1.25"/><circle cx="1289.2" cy="717.4" r="1.25"/><circle cx="1010.6" cy="718.0" r="1.25"/><circle cx="1403.7" cy="715.9" r="1.25"/><circle cx="1405.3" cy="718.8" r="1.25"/><circle cx="1150.8" cy="717.5" r="1.25"/><circle cx="1174.1" cy="717.4" r="1.25"/><circle cx="1118.8" cy="718.6" r="1.25"/><circle cx="1006.1" cy="718.3" r="1.25"/><circle cx="1462.0" cy="718.8" r="1.25"/><circle cx="1138.4" cy="716.3" r="1.25"/><circle cx="1357.1" cy="719.3" r="1.25"/><circle cx="1137.6" cy="719.3" r="1.25"/><circle cx="1004.7" cy="718.5" r="1.25"/><circle cx="1449.7" cy="717.8" r="1.25"/><circle cx="1328.5" cy="716.5" r="1.25"/><circle cx="1322.3" cy="716.5" r="1.25"/><circle cx="1275.7" cy="716.8" r="1.25"/><circle cx="1334.2" cy="718.0" r="1.25"/><circle cx="1390.4" cy="718.0" r="1.25"/><circle cx="1025.9" cy="719.1" r="1.25"/><circle cx="1314.1" cy="716.9" r="1.25"/><circle cx="1343.9" cy="717.1" r="1.25"/><circle cx="1270.1" cy="718.6" r="1.25"/><circle cx="1415.8" cy="719.0" r="1.25"/><circle cx="1066.3" cy="716.7" r="1.25"/><circle cx="1240.0" cy="719.3" r="1.25"/><circle cx="1430.1" cy="718.5" r="1.25"/><circle cx="976.7" cy="717.9" r="1.25"/><circle cx="1258.9" cy="717.6" r="1.25"/><circle cx="1415.7" cy="716.2" r="1.25"/><circle cx="1449.9" cy="717.9" r="1.25"/><circle cx="1382.4" cy="717.7" r="1.25"/><circle cx="1027.4" cy="716.0" r="1.25"/><circle cx="1151.0" cy="717.1" r="1.25"/><circle cx="1298.8" cy="716.6" r="1.25"/><circle cx="1186.8" cy="717.0" r="1.25"/><circle cx="1373.7" cy="719.3" r="1.25"/><circle cx="1127.4" cy="719.2" r="1.25"/><circle cx="1173.7" cy="716.6" r="1.25"/><circle cx="1444.1" cy="716.8" r="1.25"/><circle cx="1076.3" cy="716.4" r="1.25"/><circle cx="1193.8" cy="717.8" r="1.25"/><circle cx="1003.4" cy="717.7" r="1.25"/><circle cx="1468.8" cy="717.8" r="1.25"/><circle cx="1245.9" cy="717.0" r="1.25"/><circle cx="1399.9" cy="717.8" r="1.25"/><circle cx="929.5" cy="718.0" r="1.25"/><circle cx="1281.7" cy="718.3" r="1.25"/><circle cx="1474.2" cy="717.6" r="1.25"/><circle cx="1316.0" cy="718.5" r="1.25"/><circle cx="1397.3" cy="716.2" r="1.25"/><circle cx="952.6" cy="718.2" r="1.25"/><circle cx="1060.7" cy="716.9" r="1.25"/><circle cx="1113.4" cy="716.5" r="1.25"/><circle cx="1195.6" cy="717.7" r="1.25"/><circle cx="953.2" cy="718.6" r="1.25"/><circle cx="1234.3" cy="716.5" r="1.25"/><circle cx="1244.8" cy="717.1" r="1.25"/><circle cx="1444.2" cy="719.4" r="1.25"/><circle cx="914.5" cy="717.5" r="1.25"/><circle cx="1016.8" cy="718.4" r="1.25"/><circle cx="985.8" cy="719.0" r="1.25"/><circle cx="1328.3" cy="716.9" r="1.25"/><circle cx="1200.1" cy="717.5" r="1.25"/><circle cx="1482.5" cy="719.2" r="1.25"/><circle cx="1011.8" cy="718.3" r="1.25"/><circle cx="936.1" cy="716.7" r="1.25"/><circle cx="1152.7" cy="719.0" r="1.25"/><circle cx="1155.2" cy="718.6" r="1.25"/><circle cx="1226.9" cy="716.0" r="1.25"/><circle cx="1059.3" cy="717.9" r="1.25"/><circle cx="1494.9" cy="718.0" r="1.25"/><circle cx="1325.0" cy="717.8" r="1.25"/><circle cx="1238.1" cy="716.6" r="1.25"/><circle cx="1483.6" cy="719.3" r="1.25"/><circle cx="1352.9" cy="716.6" r="1.25"/><circle cx="1355.7" cy="717.9" r="1.25"/><circle cx="931.0" cy="716.9" r="1.25"/><circle cx="1362.2" cy="718.7" r="1.25"/><circle cx="1309.4" cy="719.0" r="1.25"/><circle cx="1481.4" cy="717.6" r="1.25"/><circle cx="1119.3" cy="719.2" r="1.25"/><circle cx="1066.3" cy="717.3" r="1.25"/><circle cx="1448.6" cy="718.7" r="1.25"/><circle cx="1094.6" cy="719.0" r="1.25"/><circle cx="1025.3" cy="717.9" r="1.25"/><circle cx="1355.7" cy="718.9" r="1.25"/><circle cx="1253.6" cy="719.5" r="1.25"/><circle cx="1357.9" cy="718.6" r="1.25"/><circle cx="1392.2" cy="717.4" r="1.25"/><circle cx="1447.7" cy="716.6" r="1.25"/><circle cx="1223.7" cy="718.9" r="1.25"/><circle cx="1490.3" cy="719.2" r="1.25"/><circle cx="1083.6" cy="719.1" r="1.25"/><circle cx="1227.2" cy="716.0" r="1.25"/><circle cx="929.2" cy="718.2" r="1.25"/><circle cx="1045.3" cy="717.0" r="1.25"/><circle cx="1052.6" cy="717.6" r="1.25"/><circle cx="1034.7" cy="717.3" r="1.25"/><circle cx="1369.8" cy="719.4" r="1.25"/><circle cx="1383.1" cy="717.0" r="1.25"/><circle cx="1209.0" cy="719.1" r="1.25"/><circle cx="1201.4" cy="717.1" r="1.25"/><circle cx="1190.8" cy="717.6" r="1.25"/><circle cx="1162.4" cy="719.0" r="1.25"/><circle cx="1464.1" cy="717.5" r="1.25"/><circle cx="1001.5" cy="716.5" r="1.25"/><circle cx="1239.3" cy="717.7" r="1.25"/><circle cx="1292.6" cy="717.3" r="1.25"/><circle cx="1460.0" cy="719.1" r="1.25"/><circle cx="980.2" cy="716.2" r="1.25"/><circle cx="1258.8" cy="718.6" r="1.25"/><circle cx="1089.7" cy="719.5" r="1.25"/><circle cx="1376.1" cy="718.0" r="1.25"/><circle cx="1266.2" cy="718.6" r="1.25"/><circle cx="957.8" cy="717.1" r="1.25"/><circle cx="1383.0" cy="717.0" r="1.25"/><circle cx="1204.7" cy="718.3" r="1.25"/><circle cx="1400.4" cy="718.5" r="1.25"/><circle cx="1062.0" cy="718.1" r="1.25"/><circle cx="984.9" cy="717.4" r="1.25"/><circle cx="1007.6" cy="718.8" r="1.25"/><circle cx="1153.7" cy="717.0" r="1.25"/><circle cx="948.6" cy="719.0" r="1.25"/><circle cx="1349.3" cy="718.6" r="1.25"/><circle cx="1420.9" cy="718.7" r="1.25"/><circle cx="929.2" cy="715.9" r="1.25"/><circle cx="1074.9" cy="715.9" r="1.25"/><circle cx="1477.9" cy="715.9" r="1.25"/><circle cx="1156.9" cy="716.0" r="1.25"/><circle cx="1190.1" cy="716.5" r="1.25"/><circle cx="1002.1" cy="716.8" r="1.25"/><circle cx="1308.2" cy="717.1" r="1.25"/><circle cx="1357.3" cy="716.6" r="1.25"/><circle cx="1074.5" cy="718.2" r="1.25"/><circle cx="1339.4" cy="715.9" r="1.25"/><circle cx="1075.1" cy="718.3" r="1.25"/><circle cx="1085.3" cy="718.8" r="1.25"/><circle cx="1191.7" cy="717.1" r="1.25"/><circle cx="921.8" cy="717.2" r="1.25"/><circle cx="1351.7" cy="719.1" r="1.25"/><circle cx="960.7" cy="718.9" r="1.25"/><circle cx="1110.1" cy="718.7" r="1.25"/><circle cx="930.8" cy="717.1" r="1.25"/><circle cx="1296.8" cy="716.3" r="1.25"/><circle cx="1436.7" cy="719.3" r="1.25"/><circle cx="1304.1" cy="716.2" r="1.25"/><circle cx="1412.2" cy="717.1" r="1.25"/><circle cx="1224.0" cy="718.3" r="1.25"/><circle cx="1451.1" cy="716.8" r="1.25"/><circle cx="924.0" cy="716.4" r="1.25"/><circle cx="1187.8" cy="718.6" r="1.25"/><circle cx="976.3" cy="717.3" r="1.25"/><circle cx="1399.0" cy="719.2" r="1.25"/><circle cx="1402.6" cy="717.5" r="1.25"/><circle cx="1177.5" cy="716.8" r="1.25"/><circle cx="1341.2" cy="717.9" r="1.25"/><circle cx="1159.0" cy="716.7" r="1.25"/><circle cx="1455.6" cy="718.0" r="1.25"/><circle cx="1006.3" cy="718.1" r="1.25"/><circle cx="1209.4" cy="719.4" r="1.25"/><circle cx="932.8" cy="716.9" r="1.25"/><circle cx="1206.2" cy="716.4" r="1.25"/><circle cx="1183.2" cy="716.6" r="1.25"/><circle cx="1273.8" cy="719.3" r="1.25"/><circle cx="1340.8" cy="717.4" r="1.25"/><circle cx="1260.7" cy="718.6" r="1.25"/><circle cx="1061.2" cy="718.3" r="1.25"/><circle cx="1359.0" cy="719.0" r="1.25"/><circle cx="1352.8" cy="719.2" r="1.25"/><circle cx="1144.7" cy="717.0" r="1.25"/><circle cx="1210.9" cy="717.7" r="1.25"/><circle cx="999.7" cy="718.3" r="1.25"/><circle cx="925.6" cy="719.2" r="1.25"/><circle cx="1473.2" cy="718.1" r="1.25"/><circle cx="1121.3" cy="717.9" r="1.25"/><circle cx="1260.5" cy="718.9" r="1.25"/><circle cx="1401.2" cy="719.4" r="1.25"/><circle cx="1494.0" cy="717.7" r="1.25"/><circle cx="1052.1" cy="718.0" r="1.25"/><circle cx="1076.5" cy="716.3" r="1.25"/><circle cx="1379.1" cy="718.7" r="1.25"/><circle cx="1025.7" cy="717.6" r="1.25"/><circle cx="1365.2" cy="717.2" r="1.25"/><circle cx="921.2" cy="717.7" r="1.25"/></g></svg>
<div class="side" style="top:1px"></div>
<div class="abs" style="left:0;top:1px;width:1600px;height:1.8px;background:#040507"></div>
<div class="abs" style="left:0;top:0;width:1600px;height:1.2px;background:#e9e9eb"></div>
<div class="btn" style="left:961.6px;width:37.0px"></div>
<div class="btn" style="left:1006.4px;width:31.2px"></div>
<div class="btn" style="left:1045.4px;width:31.6px"></div>
<div class="btn" style="left:1084.4px;width:392.3px"></div>
<div class="btn" style="left:1485.1px;width:61.5px"></div>
<div class="btn" style="left:1554.2px;width:31.4px"></div>
<div class="abs" style="left:1108.1px;top:9.5px;width:1px;height:26px;background:#25272b"></div>
<div class="abs" style="left:1420.1px;top:9.5px;width:1px;height:26px;background:#25272b"></div>
<div class="abs" style="left:1444.2px;top:9.5px;width:1px;height:26px;background:#25272b"></div>
<div class="abs" style="left:1515.5px;top:9.5px;width:1px;height:26px;background:#25272b"></div>
<div class="lbl" style="left:68px;width:77px">Server Name</div>
<div class="abs" style="left:149px;top:58px;width:145.5px;height:28.5px;box-sizing:border-box;background:#0b0c0e;border:1px solid #25272b;border-radius:2px"></div>
<div class="lbl" style="left:307.5px;width:92px">Prediction Case</div>
<div class="abs" style="left:402.6px;top:57.9px;width:71.4px;height:28.8px;box-sizing:border-box;background:#0b0c0e;border:1.2px solid #4a7dd0;border-radius:3px"></div>
<svg width="1600" height="886" viewBox="0 0 1600 886"><g transform="translate(27 23.3) scale(0.965) translate(-26.9 -23)"><defs><linearGradient id="lg" x1="0" x2="0" y1="0" y2="1"><stop offset="0" stop-color="#f05a28"/><stop offset="0.35" stop-color="#f3702a"/><stop offset="1" stop-color="#fbca1e"/></linearGradient></defs><polygon points="27.68,10.93 30.33,13.62 35.00,13.46 35.69,16.87 38.54,22.28 36.63,25.33 38.21,28.58 34.39,31.10 31.34,35.41 26.06,33.54 20.81,34.02 20.08,29.88 14.96,25.33 17.93,21.26 17.52,15.37 23.41,14.19" fill="url(#lg)" stroke="url(#lg)" stroke-width="0.5" stroke-linejoin="round"/><polyline points="35.93,21.47 35.63,20.84 35.26,20.24 34.83,19.69 34.35,19.19 33.82,18.74 33.25,18.35 32.65,18.03 32.02,17.78 31.37,17.59 30.71,17.47 30.04,17.42 29.37,17.44 28.72,17.53 28.08,17.69 27.46,17.92 26.87,18.20 26.32,18.55 25.81,18.94 25.35,19.39 24.94,19.88 24.59,20.40 24.29,20.96 24.06,21.54 23.89,22.14 23.78,22.76 23.74,23.37 23.76,23.98 23.85,24.59 24.00,25.18 24.21,25.74 24.47,26.28 24.79,26.78 25.16,27.25 25.57,27.67 26.02,28.04 26.50,28.36 27.01,28.63 27.55,28.84 28.10,29.00 28.66,29.09 29.22,29.13 29.78,29.10 30.33,29.02 30.87,28.88 31.38,28.69 31.87,28.44 32.33,28.15 32.75,27.82 33.13,27.44 33.47,27.03 33.76,26.59 34.00,26.12 34.19,25.64 34.32,25.14 34.40,24.63 34.43,24.12 34.41,23.61 34.33,23.11 34.20,22.63 34.02,22.17 33.72,21.77 33.37,21.42 33.01,21.12 32.62,20.86 32.21,20.66 31.80,20.51 31.38,20.41 30.97,20.36 30.57,20.36 30.19,20.40 29.82,20.49 29.48,20.61 29.17,20.77 28.89,20.95 28.64,21.16 28.43,21.39 28.25,21.64 28.12,21.89 28.02,22.15 27.95,22.40 27.93,22.66 27.93,22.90 27.97,23.12 28.03,23.33 28.12,23.52 28.23,23.69 28.35,23.82 28.49,23.94 28.64,24.02 28.79,24.07" fill="none" stroke="#111417" stroke-width="2.15" stroke-linecap="round" stroke-linejoin="round"/><circle cx="29.19" cy="24.11" r="1.9" fill="#111417"/></g>
<g fill="none" stroke="#9da3ab" stroke-width="1.9" stroke-linecap="round" stroke-linejoin="round"><circle cx="26.6" cy="104.4" r="7.3"/><path d="M32 109.8 L35.8 113.6"/></g>
<g fill="none" stroke="#9da3ab" stroke-width="1.9" stroke-linecap="round" stroke-linejoin="round"><path d="M27.5 136.5 V151.5 M20 144 H35"/></g>
<g fill="none" stroke="#9da3ab" stroke-width="1.9" stroke-linecap="round" stroke-linejoin="round"><rect x="19.3" y="175.4" width="6.6" height="6.6" rx="0.8"/><rect x="19.3" y="185.2" width="6.6" height="6.6" rx="0.8"/><rect x="29.1" y="175.4" width="6.6" height="6.6" rx="0.8"/><rect x="29.1" y="185.2" width="6.6" height="6.6" rx="0.8"/></g>
<g fill="none" stroke="#9da3ab" stroke-width="1.9" stroke-linecap="round" stroke-linejoin="round"><circle cx="27.5" cy="222.9" r="8.4"/><path d="M31.2 219.2 L25.8 221.2 L23.8 226.6 L29.2 224.6 Z" stroke-width="1.3"/></g>
<g fill="none" stroke="#9da3ab" stroke-width="1.9" stroke-linecap="round" stroke-linejoin="round"><path d="M21 266.3 H34 C32.6 264.8 32.4 263 32.4 260.5 C32.4 257.2 30.4 255.2 27.5 255.2 C24.6 255.2 22.6 257.2 22.6 260.5 C22.6 263 22.4 264.8 21 266.3 Z M27.5 255 V253.4 M25.6 269.3 H29.4"/></g>
<clipPath id="av"><circle cx="27.5" cy="813.8" r="12.9"/></clipPath>
<circle cx="27.5" cy="813.8" r="12.9" fill="#c9c9c9"/><g clip-path="url(#av)" fill="#fff"><circle cx="27.5" cy="811.3" r="5.4"/><ellipse cx="27.5" cy="826.5" rx="10" ry="9.5"/></g>
<circle cx="27.5" cy="851.8" r="8.6" fill="none" stroke="#9da3ab" stroke-width="1.9"/>
<text x="27.5" y="855.8" text-anchor="middle" font-size="11.5" fill="#9da3ab" font-weight="bold">?</text>
<g fill="none" stroke="#c3c6ca" stroke-width="1.5"><rect x="69.7" y="15.8" width="4.6" height="4.6" rx="0.5"/><rect x="69.7" y="23.3" width="4.6" height="4.6" rx="0.5"/><rect x="77.2" y="15.8" width="4.6" height="4.6" rx="0.5"/><rect x="77.2" y="23.3" width="4.6" height="4.6" rx="0.5"/></g>
<text x="90.5" y="27.6" font-size="16" fill="#d8d9da" textLength="63.2" lengthAdjust="spacingAndGlyphs" stroke="#d8d9da" stroke-width="0.34">runtime2</text>
<text x="162.2" y="27.6" font-size="16" fill="#d8d9da" stroke="#d8d9da" stroke-width="0.34">/</text>
<text x="180.5" y="27.6" font-size="16" fill="#d8d9da" textLength="308" lengthAdjust="spacingAndGlyphs" stroke="#d8d9da" stroke-width="0.34">Scoring Dashboard: Client Pulse Responder</text>
<polygon points="516.30,17.60 518.24,21.53 522.58,22.16 519.44,25.22 520.18,29.54 516.30,27.50 512.42,29.54 513.16,25.22 510.02,22.16 514.36,21.53" fill="none" stroke="#d0d2d5" stroke-width="1.35" stroke-linejoin="round"/>
<g fill="none" stroke="#d0d2d5" stroke-width="1.3"><circle cx="542" cy="23.4" r="2"/><circle cx="550.5" cy="18.9" r="2"/><circle cx="550.5" cy="27.9" r="2"/><path d="M543.8 22.5 L548.7 19.9 M543.8 24.3 L548.7 26.9"/></g>
<g fill="#8d9096"><rect x="968.9" y="20.5" width="3.4" height="7.9" rx="0.5"/><rect x="973.1" y="18.8" width="3.5" height="9.6" rx="0.5"/><rect x="977.2" y="22.7" width="3" height="5.7" rx="0.5"/><rect x="981.3" y="17" width="2.7" height="11.4" rx="0.5"/></g>
<path d="M987.5 19 V26.7 M983.4 22.85 H991.6" stroke="#111417" stroke-width="4.2" fill="none"/>
<defs><linearGradient id="pg" x1="0" x2="0" y1="0" y2="1"><stop offset="0" stop-color="#fcc03c"/><stop offset="1" stop-color="#f79b2a"/></linearGradient></defs><path d="M987.5 19 V26.7 M983.4 22.85 H991.6" stroke="#fab035" stroke-width="2.7" fill="none"/>
<g fill="none" stroke="#7d8187" stroke-width="1.6" stroke-linejoin="round"><path d="M1018.3 17 H1024.5 L1027.4 19.9 V26.6 Q1027.4 27.8 1026.2 27.8 H1018.3 Q1017 27.8 1017 26.6 V18.3 Q1017 17 1018.3 17 Z"/><path d="M1019.6 17.2 V20 H1024.2 V17.2 M1019.8 27.6 V24.3 H1024.7 V27.6"/></g>
<polygon points="1066.40,21.03 1067.63,21.51 1067.63,23.49 1066.40,23.97 1065.89,25.21 1066.41,26.42 1065.02,27.81 1063.81,27.29 1062.57,27.80 1062.09,29.03 1060.11,29.03 1059.63,27.80 1058.39,27.29 1057.18,27.81 1055.79,26.42 1056.31,25.21 1055.80,23.97 1054.57,23.49 1054.57,21.51 1055.80,21.03 1056.31,19.79 1055.79,18.58 1057.18,17.19 1058.39,17.71 1059.63,17.20 1060.11,15.97 1062.09,15.97 1062.57,17.20 1063.81,17.71 1065.02,17.19 1066.41,18.58 1065.89,19.79" fill="none" stroke="#e1e3e7" stroke-width="1.5" stroke-linejoin="round"/><circle cx="1061.1" cy="22.5" r="2.3" fill="none" stroke="#e1e3e7" stroke-width="1.5"/>
<g fill="none" stroke="#9da1a6" stroke-width="1.5" stroke-linecap="round" stroke-linejoin="round"><path d="M1098.5 18.6 L1095 22.3 L1098.5 26"/><path d="M1431 18.6 L1434.5 22.3 L1431 26"/><path d="M1403.8 21 L1406.8 24 L1409.8 21"/><path d="M1528.6 21 L1531.6 24 L1534.6 21"/></g>
<g fill="none" stroke="#9da1a6" stroke-width="1.5" stroke-linecap="round"><circle cx="1124" cy="22.3" r="6.4"/><path d="M1124 18.5 V22.5 H1121.2"/></g>
<text x="1139.4" y="26.8" font-size="12.45" fill="#a3a6ab" textLength="250.6" lengthAdjust="spacingAndGlyphs" font-weight="bold">2021-11-05 00:48:04 to 2021-11-05 01:24:36</text>
<g fill="none" stroke="#9da1a6" stroke-width="1.5" stroke-linecap="round"><circle cx="1459.3" cy="21.4" r="5.9"/><path d="M1463.7 25.8 L1466.8 28.9 M1456.5 21.4 H1462.1"/></g>
<g fill="none" stroke="#9da1a6" stroke-width="1.5" stroke-linecap="round" stroke-linejoin="round"><path d="M1495 21 A6.2 6.2 0 0 1 1506 17.6 M1506.3 14.6 V18 H1502.9"/><path d="M1507.4 23.6 A6.2 6.2 0 0 1 1496.4 27 M1496.1 30 V26.6 H1499.5"/></g>
<g fill="none" stroke="#9da1a6" stroke-width="1.5" stroke-linejoin="round"><rect x="1563.6" y="16" width="12.6" height="9.4" rx="1"/><path d="M1563.8 22.2 H1576 M1567 28.4 H1572.8 M1568 25.6 V28.2 M1571.8 25.6 V28.2"/></g>
<text x="157.0" y="76.2" font-size="12.45" fill="#d8d9da" textLength="115" lengthAdjust="spacingAndGlyphs" stroke="#d8d9da" stroke-width="0.34">customer.ecosystem</text>
<path d="M277.5 70.6 L280 73.1 L282.5 70.6" fill="none" stroke="#d8d9da" stroke-width="1.2" stroke-linecap="round" stroke-linejoin="round"/></svg>
<div class="abs" style="left:403.2px;top:100px;width:259.8px;height:201px;box-sizing:border-box;background:#141619;border:1px solid #1d1f22;border-radius:2px;box-shadow:0 2px 10px 2px rgba(0,0,0,0.55)"><div class="opt" style="top:0.3px">ab_testing_001</div><div class="opt" style="top:25.2px">recommender_mpp</div><div class="opt" style="top:50.1px;background:#25272c">dynamic_recommender_just4u</div><div class="opt" style="top:75.0px">dynamic_recommender_just4u_no_priors</div><div class="opt" style="top:99.9px">recommender</div><div class="opt" style="top:124.8px">recommender_dynamic</div><div class="opt" style="top:149.7px">mood_recommender_dynamic</div><div class="opt" style="top:174.6px">word_recommender_dynamic</div></div>
<div class="abs" style="left:1000px;top:41px;width:123px;height:33px;background:#202226;border-radius:3px;box-shadow:0 2px 6px rgba(0,0,0,0.4)"></div>
<div class="abs" style="left:1056.4px;top:36.2px;width:0;height:0;border-left:5px solid transparent;border-right:5px solid transparent;border-bottom:5px solid #202226"></div>
<div class="abs" style="left:1000px;top:41px;width:123px;height:33px;line-height:34px;text-align:center;font-size:12.4px;font-weight:bold;color:#dfe1e4;white-space:nowrap;letter-spacing:-0.43px">Dashboard settings</div>
<div class="abs" style="left:0;top:874px;width:12px;height:12px;background:radial-gradient(circle at 12px 0px, rgba(0,0,0,0) 11.4px, #35169a 12.2px)"></div>
<div class="abs" style="left:1588px;top:874px;width:12px;height:12px;background:radial-gradient(circle at 0px 0px, rgba(0,0,0,0) 11.4px, #35169a 12.2px)"></div>
</div></body></html>
